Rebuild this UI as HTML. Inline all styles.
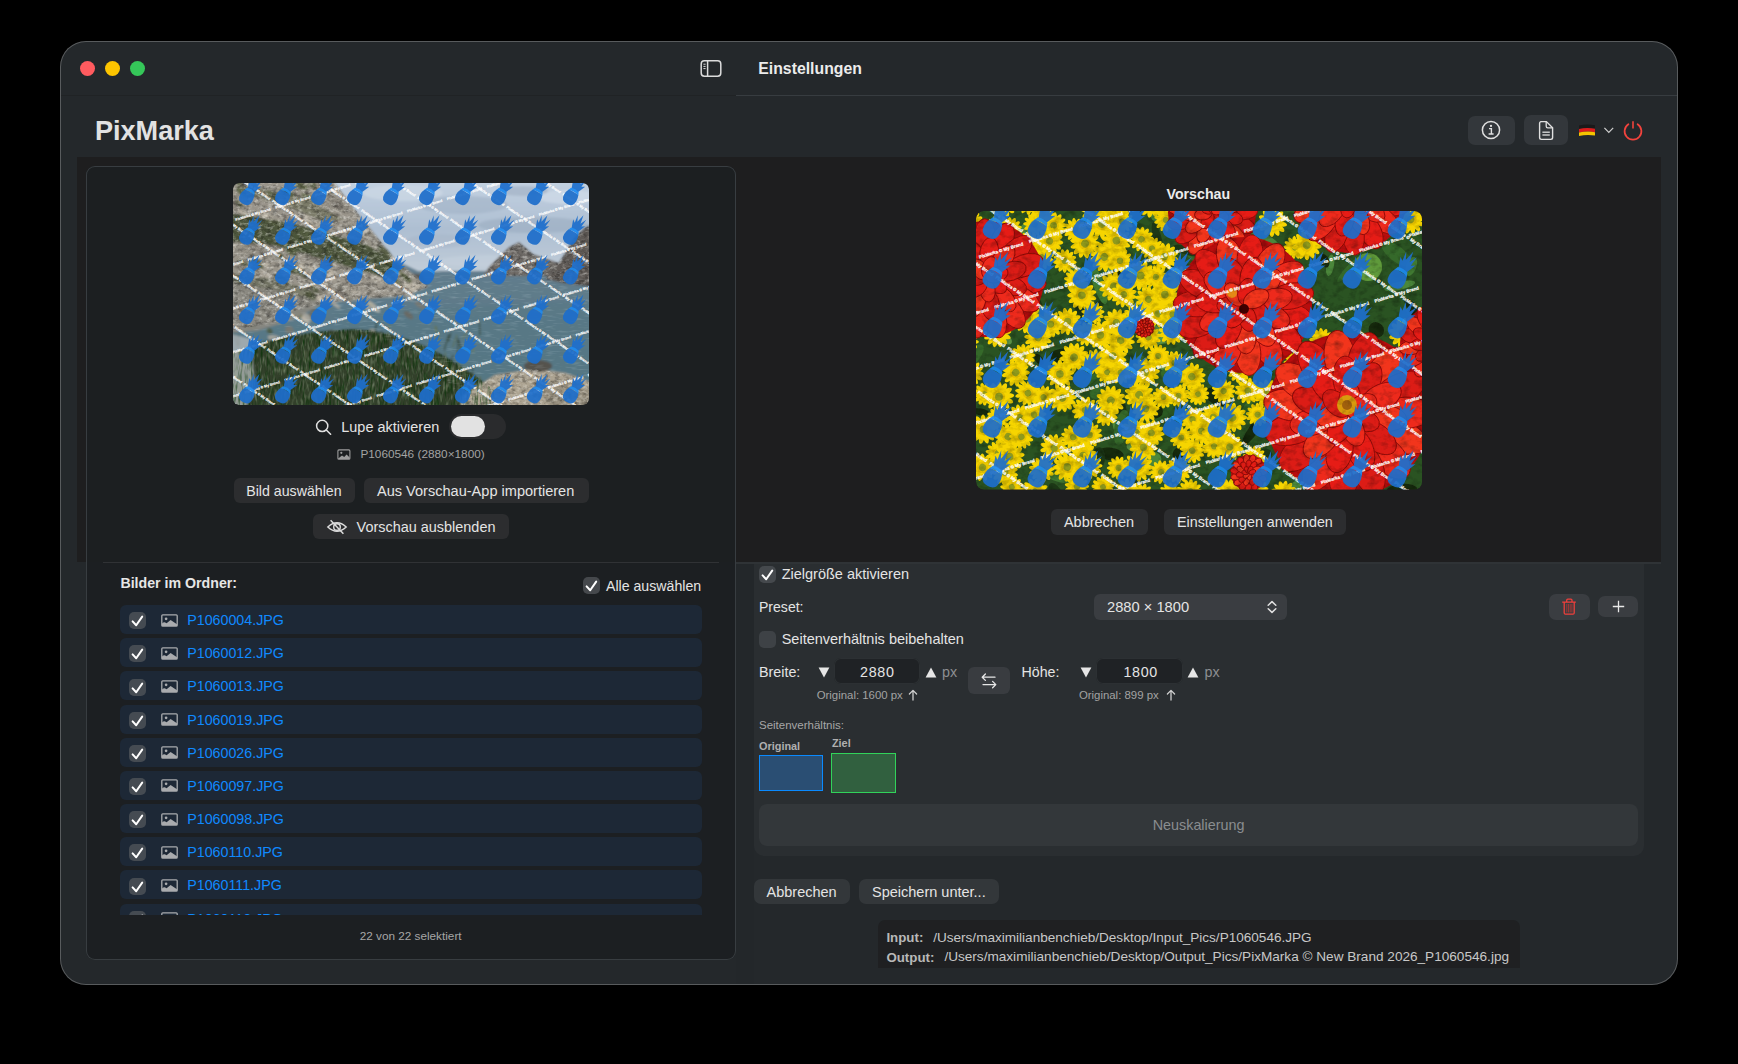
<!DOCTYPE html>
<html><head><meta charset="utf-8"><title>PixMarka</title>
<style>
html,body{margin:0;padding:0;width:1738px;height:1064px;overflow:hidden;background:#000;}
body{position:relative;font-family:"Liberation Sans",sans-serif;}
.t{position:absolute;white-space:nowrap;}
.b{position:absolute;}
svg.b{overflow:visible}
</style></head><body>
<div class="b" style="left:60px;top:41px;width:1618px;height:944px;border-radius:26px;background:#24282b;box-shadow:inset 0 0 0 1px rgba(255,255,255,0.24);overflow:hidden"></div>
<div class="b" style="left:61.00px;top:95.00px;width:675.00px;height:1.00px;background:#202325;border-radius:0px;"></div>
<div class="b" style="left:736.00px;top:95.00px;width:941.00px;height:1.00px;background:#373c40;border-radius:0px;"></div>
<div class="b" style="left:80.30px;top:60.8px;width:15px;height:15px;border-radius:50%;background:#ff5b5f"></div>
<div class="b" style="left:104.90px;top:60.8px;width:15px;height:15px;border-radius:50%;background:#fdc500"></div>
<div class="b" style="left:129.50px;top:60.8px;width:15px;height:15px;border-radius:50%;background:#35c759"></div>
<svg class="b" style="left:699px;top:58px" width="25" height="21" viewBox="0 0 25 21"><rect x="2.2" y="2.7" width="19.6" height="15.6" rx="3.2" fill="none" stroke="#dcdcdc" stroke-width="1.5"/><line x1="8.6" y1="2.7" x2="8.6" y2="18.3" stroke="#dcdcdc" stroke-width="1.5"/><line x1="4.4" y1="6.2" x2="6.6" y2="6.2" stroke="#dcdcdc" stroke-width="1"/><line x1="4.4" y1="8.4" x2="6.6" y2="8.4" stroke="#dcdcdc" stroke-width="1"/><line x1="4.4" y1="10.6" x2="6.6" y2="10.6" stroke="#dcdcdc" stroke-width="1"/></svg>
<div class="t" style="left:758.30px;top:60.93px;font-size:15.8px;line-height:15.8px;font-weight:700;color:#ececec;">Einstellungen</div>
<div class="t" style="left:94.90px;top:116.76px;font-size:27.1px;line-height:27.1px;font-weight:700;color:#e2e2e2;">PixMarka</div>
<div class="b" style="left:1468.00px;top:115.50px;width:47.00px;height:29.00px;background:#33373b;border-radius:7px;"></div>
<div class="b" style="left:1523.50px;top:115.00px;width:44.50px;height:30.00px;background:#33373b;border-radius:7px;"></div>
<svg class="b" style="left:1480px;top:119px" width="22" height="22" viewBox="0 0 22 22"><circle cx="11" cy="11" r="8.6" fill="none" stroke="#e0e0e0" stroke-width="1.5"/><circle cx="11" cy="6.9" r="1.15" fill="#e0e0e0"/><path d="M9 9.6 H11.4 V14.8 M8.6 15 H13.6" fill="none" stroke="#e0e0e0" stroke-width="1.4"/></svg>
<svg class="b" style="left:1536px;top:119px" width="20" height="24" viewBox="0 0 20 24"><path d="M4.4 2.6 H10.4 L16.6 8.8 V18.6 Q16.6 20.4 14.8 20.4 H5.4 Q3.6 20.4 3.6 18.6 V4.4 Q3.6 2.6 5.4 2.6 Z" fill="none" stroke="#e0e0e0" stroke-width="1.4"/><path d="M10.2 2.8 V7.2 Q10.2 8.8 11.8 8.8 H16.4" fill="none" stroke="#e0e0e0" stroke-width="1.3"/><line x1="6.4" y1="13.2" x2="13.8" y2="13.2" stroke="#e0e0e0" stroke-width="1.3"/><line x1="6.4" y1="16" x2="13.8" y2="16" stroke="#e0e0e0" stroke-width="1.3"/></svg>
<svg class="b" style="left:1578px;top:123px" width="18" height="14" viewBox="0 0 18 14"><path d="M1 2.4 Q9 0.6 17 2.2 V5.8 Q9 4.3 1 6 Z" fill="#1a1a1a"/><path d="M1 6 Q9 4.3 17 5.8 V9.2 Q9 7.8 1 9.6 Z" fill="#dd1c1c"/><path d="M1 9.6 Q9 7.8 17 9.2 V12.6 Q9 11.3 1 13 Z" fill="#f4c400"/></svg>
<svg class="b" style="left:1602px;top:125px" width="14" height="10" viewBox="0 0 14 10"><path d="M2.4 2.8 L6.8 7.4 L11.2 2.8" fill="none" stroke="#cfcfcf" stroke-width="1.2"/></svg>
<svg class="b" style="left:1621px;top:118px" width="24" height="24" viewBox="0 0 24 24"><path d="M7.4 6.2 A8.4 8.4 0 1 0 16.6 6.2" fill="none" stroke="#f2433d" stroke-width="1.7" stroke-linecap="round"/><line x1="12" y1="3.2" x2="12" y2="10.6" stroke="#f2433d" stroke-width="1.6"/></svg>
<div class="b" style="left:77.00px;top:157.00px;width:1584.00px;height:405.00px;background:#1e1e1f;border-radius:0px;"></div>
<div class="b" style="left:736.00px;top:562.00px;width:925.00px;height:1.50px;background:#2f3336;border-radius:0px;"></div>
<div class="b" style="left:736.00px;top:563.50px;width:17.50px;height:420.50px;background:#23272a;border-radius:0px;"></div>
<div class="b" style="left:86px;top:166px;width:650px;height:794px;border-radius:9px;background:rgba(28,31,33,0.93);box-shadow:inset 0 0 0 1px #383d41"></div>
<svg width="0" height="0" style="position:absolute"><defs>
<g id="pa">
 <g transform="rotate(31)">
  <path d="M-4.2 -8 L-8.6 -19.5 L-4.8 -17 L-6.4 -27 L-2.4 -19.6 L-0.2 -30.6 L2 -19.6 L5.8 -27.6 L4.8 -17.2 L8.8 -19.8 L4.2 -8 Z" fill="#1e6fcd"/>
  <path d="M-6.8 -6.6 Q-8.8 -2.4 -8.8 2 Q-8.8 10.6 0 10.6 Q8.8 10.6 8.8 2 Q8.8 -2.4 6.8 -6.6 Z" fill="#1e6ecb"/>
  <path d="M-7 -5.6 Q0 -8.4 7 -5.6 L5.6 -9.4 Q0 -11.4 -5.6 -9.4 Z" fill="#1b8af2"/>
 </g>
</g>
</defs></svg>
<svg class="b" style="left:233px;top:183px;border-radius:6px;overflow:hidden" width="356" height="222" viewBox="0 0 356 222">
<defs><linearGradient id="lsky" x1="0" y1="0" x2="0" y2="1"><stop offset="0" stop-color="#c4d2e2"/><stop offset="0.55" stop-color="#aebfd2"/><stop offset="1" stop-color="#c0ccd8"/></linearGradient>
<linearGradient id="lsea" x1="0" y1="0" x2="0" y2="1"><stop offset="0" stop-color="#72879a"/><stop offset="0.5" stop-color="#5f7b8a"/><stop offset="1" stop-color="#4d747e"/></linearGradient>
<filter id="lblur" x="-5%" y="-5%" width="110%" height="110%"><feGaussianBlur stdDeviation="0.9"/></filter>
<clipPath id="lclip"><rect x="0" y="0" width="356" height="222" rx="6"/></clipPath></defs>
<g clip-path="url(#lclip)"><g filter="url(#lblur)">
<rect x="-5" y="-5" width="366" height="232" fill="url(#lsea)"/>
<path d="M95 -5 L361 -5 L361 88 L185 88 L160 76 L126 34 Z" fill="url(#lsky)"/>
<ellipse cx="230" cy="22" rx="45" ry="9" fill="#9badc2" opacity="0.5"/>
<ellipse cx="300" cy="42" rx="55" ry="8" fill="#97a9be" opacity="0.5"/>
<ellipse cx="205" cy="58" rx="32" ry="7" fill="#a2b2c6" opacity="0.4"/>
<ellipse cx="335" cy="14" rx="30" ry="7" fill="#d0dce8" opacity="0.7"/>
<ellipse cx="255" cy="78" rx="50" ry="6" fill="#c4d0dc" opacity="0.6"/>
<ellipse cx="170" cy="10" rx="40" ry="8" fill="#cfdae6" opacity="0.6"/>
<ellipse cx="290" cy="8" rx="25" ry="5" fill="#9eaec2" opacity="0.6"/>
<path d="M250 93 L256 84 L266 74 L276 64 L286 59 L292 64 L300 71 L314 76 L326 80 L330 90 L318 93 Z" fill="#6e6a66"/>
<path d="M312 96 L322 86 L332 70 L340 56 L350 46 L361 40 L361 104 L330 100 Z" fill="#5e5a56"/>
<path d="M176 90 L190 92 L195 104 L180 104 Z" fill="#55534f"/>
<path d="M100 130 L361 118 L361 190 L240 205 L160 180 Z" fill="#587886" opacity="0.6"/>
<path d="M-5 -5 L98 -5 L128 34 L162 76 L195 104 L172 113 L132 116 L92 120 L62 128 L40 140 L-5 148 Z" fill="#99948a"/>
<ellipse cx="83.2" cy="87.4" rx="9.5" ry="2.7" transform="rotate(33 83.2 87.4)" fill="#c0b9aa" opacity="0.8"/>
<ellipse cx="32.0" cy="127.6" rx="6.3" ry="3.0" transform="rotate(25 32.0 127.6)" fill="#4a5436" opacity="0.8"/>
<ellipse cx="54.2" cy="10.0" rx="8.7" ry="3.2" transform="rotate(21 54.2 10.0)" fill="#4a5436" opacity="0.8"/>
<ellipse cx="183.1" cy="102.9" rx="7.3" ry="1.9" transform="rotate(20 183.1 102.9)" fill="#c0b9aa" opacity="0.8"/>
<ellipse cx="7.3" cy="0.9" rx="9.2" ry="3.0" transform="rotate(39 7.3 0.9)" fill="#56603e" opacity="0.8"/>
<ellipse cx="80.9" cy="134.0" rx="6.6" ry="3.1" transform="rotate(32 80.9 134.0)" fill="#6a675e" opacity="0.8"/>
<ellipse cx="11.6" cy="103.0" rx="5.8" ry="2.9" transform="rotate(43 11.6 103.0)" fill="#b3ada0" opacity="0.8"/>
<ellipse cx="133.0" cy="47.0" rx="4.6" ry="2.2" transform="rotate(22 133.0 47.0)" fill="#b3ada0" opacity="0.8"/>
<ellipse cx="73.1" cy="134.7" rx="5.7" ry="3.9" transform="rotate(41 73.1 134.7)" fill="#b3ada0" opacity="0.8"/>
<ellipse cx="36.6" cy="148.0" rx="3.4" ry="2.4" transform="rotate(38 36.6 148.0)" fill="#4a5436" opacity="0.8"/>
<ellipse cx="9.2" cy="98.9" rx="8.4" ry="2.2" transform="rotate(22 9.2 98.9)" fill="#56603e" opacity="0.8"/>
<ellipse cx="-2.0" cy="62.7" rx="9.5" ry="1.8" transform="rotate(38 -2.0 62.7)" fill="#b3ada0" opacity="0.8"/>
<ellipse cx="6.7" cy="126.5" rx="4.2" ry="2.9" transform="rotate(31 6.7 126.5)" fill="#7c786e" opacity="0.8"/>
<ellipse cx="187.1" cy="122.0" rx="5.9" ry="2.5" transform="rotate(30 187.1 122.0)" fill="#7c786e" opacity="0.8"/>
<ellipse cx="-4.9" cy="137.6" rx="9.8" ry="3.0" transform="rotate(45 -4.9 137.6)" fill="#b3ada0" opacity="0.8"/>
<ellipse cx="36.1" cy="60.1" rx="9.0" ry="3.1" transform="rotate(23 36.1 60.1)" fill="#7c786e" opacity="0.8"/>
<ellipse cx="36.6" cy="37.6" rx="8.4" ry="2.3" transform="rotate(27 36.6 37.6)" fill="#b3ada0" opacity="0.8"/>
<ellipse cx="9.5" cy="29.4" rx="7.5" ry="1.5" transform="rotate(29 9.5 29.4)" fill="#c0b9aa" opacity="0.8"/>
<ellipse cx="83.4" cy="153.3" rx="6.4" ry="2.9" transform="rotate(42 83.4 153.3)" fill="#7c786e" opacity="0.8"/>
<ellipse cx="117.3" cy="46.3" rx="4.6" ry="3.0" transform="rotate(38 117.3 46.3)" fill="#7c786e" opacity="0.8"/>
<ellipse cx="139.2" cy="150.2" rx="4.4" ry="3.9" transform="rotate(42 139.2 150.2)" fill="#c0b9aa" opacity="0.8"/>
<ellipse cx="10.3" cy="2.8" rx="3.8" ry="2.8" transform="rotate(26 10.3 2.8)" fill="#6a675e" opacity="0.8"/>
<ellipse cx="155.6" cy="93.4" rx="5.1" ry="1.9" transform="rotate(38 155.6 93.4)" fill="#b3ada0" opacity="0.8"/>
<ellipse cx="19.6" cy="74.1" rx="7.6" ry="3.0" transform="rotate(22 19.6 74.1)" fill="#7c786e" opacity="0.8"/>
<ellipse cx="-1.8" cy="39.4" rx="6.1" ry="1.7" transform="rotate(24 -1.8 39.4)" fill="#56603e" opacity="0.8"/>
<ellipse cx="98.5" cy="155.6" rx="3.6" ry="1.8" transform="rotate(31 98.5 155.6)" fill="#56603e" opacity="0.8"/>
<ellipse cx="123.1" cy="109.1" rx="7.1" ry="1.9" transform="rotate(21 123.1 109.1)" fill="#b3ada0" opacity="0.8"/>
<ellipse cx="87.6" cy="54.0" rx="5.2" ry="1.6" transform="rotate(35 87.6 54.0)" fill="#b3ada0" opacity="0.8"/>
<ellipse cx="89.0" cy="115.5" rx="5.2" ry="4.0" transform="rotate(22 89.0 115.5)" fill="#c0b9aa" opacity="0.8"/>
<ellipse cx="66.7" cy="2.3" rx="9.6" ry="3.3" transform="rotate(23 66.7 2.3)" fill="#56603e" opacity="0.8"/>
<ellipse cx="63.6" cy="108.0" rx="9.3" ry="3.7" transform="rotate(30 63.6 108.0)" fill="#b3ada0" opacity="0.8"/>
<ellipse cx="163.4" cy="89.5" rx="7.4" ry="2.5" transform="rotate(35 163.4 89.5)" fill="#c0b9aa" opacity="0.8"/>
<ellipse cx="9.1" cy="10.0" rx="3.8" ry="2.1" transform="rotate(30 9.1 10.0)" fill="#56603e" opacity="0.8"/>
<ellipse cx="70.7" cy="116.3" rx="7.1" ry="2.6" transform="rotate(41 70.7 116.3)" fill="#b3ada0" opacity="0.8"/>
<ellipse cx="96.1" cy="79.9" rx="5.2" ry="1.7" transform="rotate(21 96.1 79.9)" fill="#6a675e" opacity="0.8"/>
<ellipse cx="17.0" cy="123.7" rx="7.6" ry="2.7" transform="rotate(42 17.0 123.7)" fill="#56603e" opacity="0.8"/>
<ellipse cx="53.7" cy="106.9" rx="4.4" ry="1.9" transform="rotate(43 53.7 106.9)" fill="#6a675e" opacity="0.8"/>
<ellipse cx="42.1" cy="61.8" rx="4.8" ry="3.1" transform="rotate(40 42.1 61.8)" fill="#7c786e" opacity="0.8"/>
<ellipse cx="108.7" cy="47.2" rx="4.0" ry="2.7" transform="rotate(41 108.7 47.2)" fill="#b3ada0" opacity="0.8"/>
<ellipse cx="133.7" cy="151.8" rx="4.9" ry="1.9" transform="rotate(31 133.7 151.8)" fill="#56603e" opacity="0.8"/>
<ellipse cx="175.5" cy="132.1" rx="5.7" ry="2.8" transform="rotate(37 175.5 132.1)" fill="#6a675e" opacity="0.8"/>
<ellipse cx="158.6" cy="157.0" rx="6.2" ry="1.7" transform="rotate(21 158.6 157.0)" fill="#c0b9aa" opacity="0.8"/>
<ellipse cx="3.1" cy="111.9" rx="7.0" ry="2.3" transform="rotate(40 3.1 111.9)" fill="#b3ada0" opacity="0.8"/>
<ellipse cx="120.0" cy="61.9" rx="4.3" ry="3.4" transform="rotate(27 120.0 61.9)" fill="#7c786e" opacity="0.8"/>
<ellipse cx="150.4" cy="157.4" rx="3.8" ry="1.8" transform="rotate(33 150.4 157.4)" fill="#6a675e" opacity="0.8"/>
<ellipse cx="152.4" cy="153.1" rx="7.8" ry="2.0" transform="rotate(32 152.4 153.1)" fill="#7c786e" opacity="0.8"/>
<ellipse cx="134.3" cy="119.6" rx="6.7" ry="1.6" transform="rotate(26 134.3 119.6)" fill="#56603e" opacity="0.8"/>
<ellipse cx="100.2" cy="151.2" rx="6.5" ry="4.0" transform="rotate(24 100.2 151.2)" fill="#6a675e" opacity="0.8"/>
<ellipse cx="176.9" cy="114.2" rx="3.9" ry="2.6" transform="rotate(36 176.9 114.2)" fill="#b3ada0" opacity="0.8"/>
<ellipse cx="68.5" cy="88.9" rx="9.2" ry="3.5" transform="rotate(44 68.5 88.9)" fill="#4a5436" opacity="0.8"/>
<ellipse cx="58.7" cy="157.1" rx="3.7" ry="3.7" transform="rotate(40 58.7 157.1)" fill="#6a675e" opacity="0.8"/>
<ellipse cx="19.1" cy="35.0" rx="5.7" ry="1.7" transform="rotate(28 19.1 35.0)" fill="#56603e" opacity="0.8"/>
<ellipse cx="46.1" cy="113.5" rx="3.1" ry="2.8" transform="rotate(21 46.1 113.5)" fill="#56603e" opacity="0.8"/>
<ellipse cx="102.3" cy="121.8" rx="6.4" ry="1.6" transform="rotate(40 102.3 121.8)" fill="#b3ada0" opacity="0.8"/>
<ellipse cx="78.6" cy="0.8" rx="6.7" ry="3.2" transform="rotate(43 78.6 0.8)" fill="#4a5436" opacity="0.8"/>
<ellipse cx="24.0" cy="80.2" rx="8.1" ry="3.6" transform="rotate(37 24.0 80.2)" fill="#4a5436" opacity="0.8"/>
<ellipse cx="107.9" cy="108.7" rx="8.3" ry="2.6" transform="rotate(34 107.9 108.7)" fill="#6a675e" opacity="0.8"/>
<ellipse cx="104.5" cy="22.1" rx="6.6" ry="3.8" transform="rotate(26 104.5 22.1)" fill="#6a675e" opacity="0.8"/>
<ellipse cx="69.3" cy="134.5" rx="9.3" ry="2.0" transform="rotate(41 69.3 134.5)" fill="#c0b9aa" opacity="0.8"/>
<ellipse cx="97.2" cy="89.5" rx="4.4" ry="2.8" transform="rotate(33 97.2 89.5)" fill="#c0b9aa" opacity="0.8"/>
<ellipse cx="68.5" cy="83.8" rx="3.3" ry="3.8" transform="rotate(34 68.5 83.8)" fill="#c0b9aa" opacity="0.8"/>
<ellipse cx="18.8" cy="10.4" rx="4.2" ry="3.8" transform="rotate(31 18.8 10.4)" fill="#4a5436" opacity="0.8"/>
<ellipse cx="47.5" cy="73.1" rx="3.9" ry="2.6" transform="rotate(40 47.5 73.1)" fill="#4a5436" opacity="0.8"/>
<ellipse cx="97.4" cy="12.9" rx="5.9" ry="1.6" transform="rotate(27 97.4 12.9)" fill="#6a675e" opacity="0.8"/>
<ellipse cx="32.9" cy="32.5" rx="7.8" ry="2.3" transform="rotate(29 32.9 32.5)" fill="#c0b9aa" opacity="0.8"/>
<ellipse cx="92.3" cy="77.4" rx="7.1" ry="3.6" transform="rotate(36 92.3 77.4)" fill="#6a675e" opacity="0.8"/>
<ellipse cx="33.6" cy="82.5" rx="6.1" ry="2.4" transform="rotate(30 33.6 82.5)" fill="#c0b9aa" opacity="0.8"/>
<ellipse cx="115.1" cy="83.8" rx="9.0" ry="2.8" transform="rotate(25 115.1 83.8)" fill="#7c786e" opacity="0.8"/>
<ellipse cx="161.0" cy="95.9" rx="9.0" ry="2.1" transform="rotate(39 161.0 95.9)" fill="#56603e" opacity="0.8"/>
<ellipse cx="56.4" cy="147.3" rx="4.5" ry="4.0" transform="rotate(42 56.4 147.3)" fill="#7c786e" opacity="0.8"/>
<ellipse cx="12.2" cy="59.0" rx="6.0" ry="3.9" transform="rotate(34 12.2 59.0)" fill="#6a675e" opacity="0.8"/>
<ellipse cx="19.6" cy="61.5" rx="7.8" ry="1.5" transform="rotate(25 19.6 61.5)" fill="#6a675e" opacity="0.8"/>
<ellipse cx="64.7" cy="130.5" rx="5.5" ry="3.3" transform="rotate(36 64.7 130.5)" fill="#56603e" opacity="0.8"/>
<ellipse cx="93.0" cy="108.1" rx="4.3" ry="1.7" transform="rotate(23 93.0 108.1)" fill="#b3ada0" opacity="0.8"/>
<ellipse cx="143.6" cy="96.2" rx="9.3" ry="2.7" transform="rotate(25 143.6 96.2)" fill="#b3ada0" opacity="0.8"/>
<ellipse cx="34.8" cy="133.6" rx="9.9" ry="3.8" transform="rotate(22 34.8 133.6)" fill="#b3ada0" opacity="0.8"/>
<ellipse cx="21.2" cy="107.4" rx="3.5" ry="1.7" transform="rotate(30 21.2 107.4)" fill="#4a5436" opacity="0.8"/>
<ellipse cx="95.5" cy="66.0" rx="7.2" ry="1.5" transform="rotate(38 95.5 66.0)" fill="#7c786e" opacity="0.8"/>
<ellipse cx="30.3" cy="69.9" rx="8.2" ry="2.5" transform="rotate(25 30.3 69.9)" fill="#7c786e" opacity="0.8"/>
<ellipse cx="13.5" cy="125.7" rx="5.3" ry="1.7" transform="rotate(41 13.5 125.7)" fill="#6a675e" opacity="0.8"/>
<ellipse cx="32.2" cy="91.5" rx="5.4" ry="3.4" transform="rotate(27 32.2 91.5)" fill="#b3ada0" opacity="0.8"/>
<ellipse cx="140.2" cy="123.4" rx="8.7" ry="2.5" transform="rotate(42 140.2 123.4)" fill="#c0b9aa" opacity="0.8"/>
<ellipse cx="130.5" cy="121.6" rx="8.4" ry="2.5" transform="rotate(38 130.5 121.6)" fill="#b3ada0" opacity="0.8"/>
<ellipse cx="14.7" cy="141.5" rx="9.9" ry="3.8" transform="rotate(21 14.7 141.5)" fill="#56603e" opacity="0.8"/>
<ellipse cx="179.2" cy="104.9" rx="5.4" ry="3.1" transform="rotate(34 179.2 104.9)" fill="#c0b9aa" opacity="0.8"/>
<ellipse cx="10.0" cy="79.9" rx="6.5" ry="2.0" transform="rotate(23 10.0 79.9)" fill="#4a5436" opacity="0.8"/>
<ellipse cx="115.0" cy="116.9" rx="4.8" ry="2.5" transform="rotate(21 115.0 116.9)" fill="#7c786e" opacity="0.8"/>
<ellipse cx="45.4" cy="40.5" rx="5.4" ry="2.9" transform="rotate(30 45.4 40.5)" fill="#c0b9aa" opacity="0.8"/>
<ellipse cx="105.8" cy="159.2" rx="7.5" ry="3.5" transform="rotate(22 105.8 159.2)" fill="#c0b9aa" opacity="0.8"/>
<ellipse cx="125.3" cy="152.6" rx="5.7" ry="3.8" transform="rotate(30 125.3 152.6)" fill="#7c786e" opacity="0.8"/>
<ellipse cx="161.9" cy="84.4" rx="7.2" ry="2.6" transform="rotate(32 161.9 84.4)" fill="#56603e" opacity="0.8"/>
<ellipse cx="97.7" cy="93.6" rx="5.6" ry="2.2" transform="rotate(36 97.7 93.6)" fill="#c0b9aa" opacity="0.8"/>
<ellipse cx="176.2" cy="104.5" rx="8.2" ry="1.6" transform="rotate(39 176.2 104.5)" fill="#c0b9aa" opacity="0.8"/>
<ellipse cx="3.3" cy="20.8" rx="8.3" ry="2.5" transform="rotate(42 3.3 20.8)" fill="#6a675e" opacity="0.8"/>
<ellipse cx="72.6" cy="91.0" rx="8.1" ry="2.3" transform="rotate(40 72.6 91.0)" fill="#7c786e" opacity="0.8"/>
<ellipse cx="78.8" cy="73.8" rx="9.8" ry="2.1" transform="rotate(33 78.8 73.8)" fill="#6a675e" opacity="0.8"/>
<ellipse cx="76.3" cy="14.5" rx="9.0" ry="2.4" transform="rotate(24 76.3 14.5)" fill="#56603e" opacity="0.8"/>
<ellipse cx="81.4" cy="105.2" rx="6.2" ry="2.2" transform="rotate(35 81.4 105.2)" fill="#4a5436" opacity="0.8"/>
<ellipse cx="66.0" cy="117.7" rx="8.7" ry="1.8" transform="rotate(27 66.0 117.7)" fill="#7c786e" opacity="0.8"/>
<ellipse cx="41.5" cy="13.8" rx="9.2" ry="3.5" transform="rotate(36 41.5 13.8)" fill="#56603e" opacity="0.8"/>
<ellipse cx="48.6" cy="95.6" rx="8.1" ry="3.2" transform="rotate(25 48.6 95.6)" fill="#56603e" opacity="0.8"/>
<ellipse cx="43.5" cy="156.7" rx="9.4" ry="3.7" transform="rotate(21 43.5 156.7)" fill="#b3ada0" opacity="0.8"/>
<ellipse cx="-3.2" cy="37.8" rx="3.2" ry="1.6" transform="rotate(26 -3.2 37.8)" fill="#56603e" opacity="0.8"/>
<ellipse cx="9.1" cy="9.3" rx="7.7" ry="2.9" transform="rotate(36 9.1 9.3)" fill="#56603e" opacity="0.8"/>
<ellipse cx="89.4" cy="53.4" rx="5.4" ry="2.7" transform="rotate(23 89.4 53.4)" fill="#b3ada0" opacity="0.8"/>
<ellipse cx="151.4" cy="68.8" rx="8.8" ry="3.6" transform="rotate(39 151.4 68.8)" fill="#4a5436" opacity="0.8"/>
<ellipse cx="77.8" cy="37.6" rx="8.7" ry="2.4" transform="rotate(36 77.8 37.6)" fill="#c0b9aa" opacity="0.8"/>
<ellipse cx="58.5" cy="85.5" rx="8.2" ry="3.8" transform="rotate(31 58.5 85.5)" fill="#56603e" opacity="0.8"/>
<ellipse cx="108.2" cy="71.2" rx="5.3" ry="2.9" transform="rotate(31 108.2 71.2)" fill="#c0b9aa" opacity="0.8"/>
<ellipse cx="89.5" cy="108.1" rx="5.1" ry="3.4" transform="rotate(22 89.5 108.1)" fill="#7c786e" opacity="0.8"/>
<ellipse cx="172.6" cy="94.6" rx="7.9" ry="2.7" transform="rotate(39 172.6 94.6)" fill="#56603e" opacity="0.8"/>
<ellipse cx="50.2" cy="18.6" rx="5.5" ry="3.3" transform="rotate(29 50.2 18.6)" fill="#b3ada0" opacity="0.8"/>
<ellipse cx="57.9" cy="67.8" rx="7.2" ry="3.8" transform="rotate(37 57.9 67.8)" fill="#56603e" opacity="0.8"/>
<ellipse cx="80.4" cy="127.5" rx="5.1" ry="2.3" transform="rotate(30 80.4 127.5)" fill="#6a675e" opacity="0.8"/>
<ellipse cx="65.5" cy="55.3" rx="5.5" ry="2.5" transform="rotate(30 65.5 55.3)" fill="#7c786e" opacity="0.8"/>
<ellipse cx="139.1" cy="55.8" rx="5.7" ry="1.9" transform="rotate(35 139.1 55.8)" fill="#7c786e" opacity="0.8"/>
<ellipse cx="29.4" cy="120.2" rx="9.2" ry="2.2" transform="rotate(21 29.4 120.2)" fill="#c0b9aa" opacity="0.8"/>
<ellipse cx="6.3" cy="21.2" rx="5.1" ry="1.6" transform="rotate(41 6.3 21.2)" fill="#4a5436" opacity="0.8"/>
<ellipse cx="7.5" cy="85.2" rx="8.5" ry="1.7" transform="rotate(22 7.5 85.2)" fill="#6a675e" opacity="0.8"/>
<ellipse cx="15.6" cy="46.8" rx="3.2" ry="3.1" transform="rotate(22 15.6 46.8)" fill="#6a675e" opacity="0.8"/>
<ellipse cx="77.3" cy="112.5" rx="6.4" ry="3.8" transform="rotate(28 77.3 112.5)" fill="#4a5436" opacity="0.8"/>
<ellipse cx="71.9" cy="50.7" rx="9.8" ry="3.2" transform="rotate(32 71.9 50.7)" fill="#c0b9aa" opacity="0.8"/>
<path d="M-5 30 L60 40 L135 62 L172 86 L150 94 L90 76 L40 62 L-5 58 Z" fill="#414b2e" opacity="0.85"/>
<path d="M-5 90 L40 96 L90 110 L60 116 L20 108 L-5 106 Z" fill="#4a4f3a" opacity="0.5"/>
<path d="M20 4 L70 14 L110 36 L95 40 L50 22 L15 12 Z" fill="#5d6147" opacity="0.5"/>
<path d="M-5 98 L50 108 L90 120 L62 136 L24 148 L-5 150 Z" fill="#8a877f" opacity="0.9"/>
<path d="M-5 172 Q40 150 120 146 Q190 148 262 208 L262 227 L-5 227 Z" fill="#33412b"/>
<line x1="154.5" y1="153.3" x2="157.6" y2="137.5" stroke="#6b7a55" stroke-width="1.2" opacity="0.8"/>
<line x1="213.4" y1="208.0" x2="217.4" y2="193.1" stroke="#5d6c4a" stroke-width="1.2" opacity="0.8"/>
<line x1="131.0" y1="201.1" x2="134.6" y2="190.9" stroke="#33412a" stroke-width="1.2" opacity="0.8"/>
<line x1="228.9" y1="167.7" x2="224.8" y2="155.3" stroke="#2a3622" stroke-width="1.2" opacity="0.8"/>
<line x1="80.2" y1="178.0" x2="80.6" y2="169.3" stroke="#5d6c4a" stroke-width="1.2" opacity="0.8"/>
<line x1="117.9" y1="202.6" x2="115.5" y2="195.1" stroke="#2a3622" stroke-width="1.2" opacity="0.8"/>
<line x1="228.0" y1="204.2" x2="222.3" y2="193.4" stroke="#5d6c4a" stroke-width="1.2" opacity="0.8"/>
<line x1="78.1" y1="164.2" x2="76.4" y2="152.3" stroke="#33412a" stroke-width="1.2" opacity="0.8"/>
<line x1="148.7" y1="166.1" x2="144.9" y2="157.3" stroke="#2a3622" stroke-width="1.2" opacity="0.8"/>
<line x1="227.7" y1="217.5" x2="229.2" y2="202.1" stroke="#33412a" stroke-width="1.2" opacity="0.8"/>
<line x1="213.3" y1="184.9" x2="212.2" y2="169.3" stroke="#5d6c4a" stroke-width="1.2" opacity="0.8"/>
<line x1="120.7" y1="165.9" x2="115.2" y2="150.4" stroke="#33412a" stroke-width="1.2" opacity="0.8"/>
<line x1="244.0" y1="207.2" x2="247.3" y2="193.3" stroke="#5d6c4a" stroke-width="1.2" opacity="0.8"/>
<line x1="164.4" y1="167.1" x2="158.5" y2="156.4" stroke="#6b7a55" stroke-width="1.2" opacity="0.8"/>
<line x1="112.5" y1="167.8" x2="111.6" y2="153.0" stroke="#33412a" stroke-width="1.2" opacity="0.8"/>
<line x1="39.2" y1="173.2" x2="36.3" y2="158.5" stroke="#2a3622" stroke-width="1.2" opacity="0.8"/>
<line x1="159.2" y1="221.5" x2="156.4" y2="210.2" stroke="#2a3622" stroke-width="1.2" opacity="0.8"/>
<line x1="143.0" y1="162.8" x2="139.4" y2="147.7" stroke="#2a3622" stroke-width="1.2" opacity="0.8"/>
<line x1="205.5" y1="155.9" x2="202.8" y2="142.8" stroke="#5d6c4a" stroke-width="1.2" opacity="0.8"/>
<line x1="222.4" y1="199.9" x2="217.4" y2="186.5" stroke="#6b7a55" stroke-width="1.2" opacity="0.8"/>
<line x1="4.8" y1="163.5" x2="1.1" y2="150.7" stroke="#33412a" stroke-width="1.2" opacity="0.8"/>
<line x1="52.1" y1="189.1" x2="52.4" y2="181.5" stroke="#6b7a55" stroke-width="1.2" opacity="0.8"/>
<line x1="79.0" y1="179.2" x2="79.7" y2="163.2" stroke="#5d6c4a" stroke-width="1.2" opacity="0.8"/>
<line x1="89.9" y1="199.5" x2="85.2" y2="189.5" stroke="#33412a" stroke-width="1.2" opacity="0.8"/>
<line x1="186.7" y1="206.5" x2="182.1" y2="196.0" stroke="#33412a" stroke-width="1.2" opacity="0.8"/>
<line x1="177.9" y1="184.2" x2="175.5" y2="177.1" stroke="#5d6c4a" stroke-width="1.2" opacity="0.8"/>
<line x1="214.0" y1="210.8" x2="216.6" y2="195.8" stroke="#2a3622" stroke-width="1.2" opacity="0.8"/>
<line x1="72.6" y1="177.1" x2="73.1" y2="168.1" stroke="#6b7a55" stroke-width="1.2" opacity="0.8"/>
<line x1="188.7" y1="190.0" x2="183.8" y2="182.1" stroke="#33412a" stroke-width="1.2" opacity="0.8"/>
<line x1="182.9" y1="173.7" x2="188.2" y2="162.1" stroke="#6b7a55" stroke-width="1.2" opacity="0.8"/>
<line x1="111.7" y1="177.5" x2="106.9" y2="165.3" stroke="#2a3622" stroke-width="1.2" opacity="0.8"/>
<line x1="169.4" y1="201.0" x2="165.6" y2="191.0" stroke="#33412a" stroke-width="1.2" opacity="0.8"/>
<line x1="148.2" y1="156.5" x2="144.9" y2="148.9" stroke="#5d6c4a" stroke-width="1.2" opacity="0.8"/>
<line x1="108.5" y1="205.5" x2="106.6" y2="191.3" stroke="#2a3622" stroke-width="1.2" opacity="0.8"/>
<line x1="161.8" y1="205.2" x2="165.7" y2="195.4" stroke="#6b7a55" stroke-width="1.2" opacity="0.8"/>
<line x1="230.3" y1="194.9" x2="233.1" y2="182.7" stroke="#6b7a55" stroke-width="1.2" opacity="0.8"/>
<line x1="245.5" y1="206.9" x2="247.4" y2="194.8" stroke="#5d6c4a" stroke-width="1.2" opacity="0.8"/>
<line x1="65.2" y1="163.6" x2="62.9" y2="153.2" stroke="#33412a" stroke-width="1.2" opacity="0.8"/>
<line x1="51.2" y1="174.0" x2="48.7" y2="166.9" stroke="#2a3622" stroke-width="1.2" opacity="0.8"/>
<line x1="63.5" y1="188.8" x2="61.1" y2="180.5" stroke="#2a3622" stroke-width="1.2" opacity="0.8"/>
<line x1="143.5" y1="164.3" x2="148.7" y2="148.3" stroke="#2a3622" stroke-width="1.2" opacity="0.8"/>
<line x1="141.8" y1="151.9" x2="143.8" y2="138.2" stroke="#2a3622" stroke-width="1.2" opacity="0.8"/>
<line x1="61.1" y1="191.5" x2="63.5" y2="182.2" stroke="#6b7a55" stroke-width="1.2" opacity="0.8"/>
<line x1="66.5" y1="213.6" x2="66.0" y2="200.3" stroke="#2a3622" stroke-width="1.2" opacity="0.8"/>
<line x1="226.0" y1="189.1" x2="226.7" y2="177.5" stroke="#6b7a55" stroke-width="1.2" opacity="0.8"/>
<line x1="42.1" y1="203.7" x2="46.9" y2="194.3" stroke="#2a3622" stroke-width="1.2" opacity="0.8"/>
<line x1="30.7" y1="209.4" x2="28.1" y2="194.4" stroke="#2a3622" stroke-width="1.2" opacity="0.8"/>
<line x1="189.6" y1="176.1" x2="185.6" y2="164.2" stroke="#5d6c4a" stroke-width="1.2" opacity="0.8"/>
<line x1="113.6" y1="179.0" x2="117.0" y2="163.7" stroke="#2a3622" stroke-width="1.2" opacity="0.8"/>
<line x1="76.9" y1="198.3" x2="79.8" y2="188.5" stroke="#5d6c4a" stroke-width="1.2" opacity="0.8"/>
<line x1="39.6" y1="179.7" x2="34.0" y2="168.4" stroke="#5d6c4a" stroke-width="1.2" opacity="0.8"/>
<line x1="142.4" y1="162.5" x2="142.6" y2="153.9" stroke="#6b7a55" stroke-width="1.2" opacity="0.8"/>
<line x1="13.4" y1="206.4" x2="16.0" y2="192.6" stroke="#33412a" stroke-width="1.2" opacity="0.8"/>
<line x1="239.8" y1="193.2" x2="239.5" y2="183.1" stroke="#33412a" stroke-width="1.2" opacity="0.8"/>
<line x1="187.9" y1="185.0" x2="193.9" y2="170.6" stroke="#33412a" stroke-width="1.2" opacity="0.8"/>
<line x1="206.3" y1="158.5" x2="201.7" y2="143.1" stroke="#6b7a55" stroke-width="1.2" opacity="0.8"/>
<line x1="131.3" y1="181.1" x2="136.1" y2="171.9" stroke="#5d6c4a" stroke-width="1.2" opacity="0.8"/>
<line x1="74.0" y1="194.4" x2="73.2" y2="184.6" stroke="#6b7a55" stroke-width="1.2" opacity="0.8"/>
<line x1="188.0" y1="171.9" x2="189.1" y2="165.2" stroke="#5d6c4a" stroke-width="1.2" opacity="0.8"/>
<line x1="211.1" y1="167.4" x2="215.6" y2="151.7" stroke="#33412a" stroke-width="1.2" opacity="0.8"/>
<line x1="173.7" y1="187.9" x2="170.6" y2="178.8" stroke="#33412a" stroke-width="1.2" opacity="0.8"/>
<line x1="235.1" y1="213.3" x2="241.1" y2="200.0" stroke="#6b7a55" stroke-width="1.2" opacity="0.8"/>
<line x1="216.6" y1="180.3" x2="220.3" y2="172.1" stroke="#33412a" stroke-width="1.2" opacity="0.8"/>
<line x1="141.7" y1="215.0" x2="136.9" y2="201.1" stroke="#5d6c4a" stroke-width="1.2" opacity="0.8"/>
<line x1="220.5" y1="191.5" x2="220.0" y2="182.5" stroke="#6b7a55" stroke-width="1.2" opacity="0.8"/>
<line x1="6.0" y1="162.4" x2="5.3" y2="151.9" stroke="#33412a" stroke-width="1.2" opacity="0.8"/>
<line x1="35.3" y1="199.8" x2="32.1" y2="190.8" stroke="#33412a" stroke-width="1.2" opacity="0.8"/>
<line x1="224.6" y1="172.2" x2="224.6" y2="156.8" stroke="#33412a" stroke-width="1.2" opacity="0.8"/>
<line x1="219.7" y1="164.6" x2="224.0" y2="151.7" stroke="#5d6c4a" stroke-width="1.2" opacity="0.8"/>
<line x1="48.9" y1="210.3" x2="47.1" y2="199.6" stroke="#2a3622" stroke-width="1.2" opacity="0.8"/>
<line x1="158.8" y1="200.3" x2="159.6" y2="188.9" stroke="#2a3622" stroke-width="1.2" opacity="0.8"/>
<line x1="47.9" y1="213.4" x2="42.5" y2="206.3" stroke="#6b7a55" stroke-width="1.2" opacity="0.8"/>
<line x1="240.3" y1="169.7" x2="239.4" y2="154.9" stroke="#6b7a55" stroke-width="1.2" opacity="0.8"/>
<line x1="174.0" y1="217.5" x2="173.3" y2="210.7" stroke="#2a3622" stroke-width="1.2" opacity="0.8"/>
<line x1="215.4" y1="158.7" x2="217.7" y2="150.0" stroke="#2a3622" stroke-width="1.2" opacity="0.8"/>
<line x1="125.4" y1="171.3" x2="122.6" y2="157.2" stroke="#5d6c4a" stroke-width="1.2" opacity="0.8"/>
<line x1="147.5" y1="166.5" x2="145.1" y2="151.2" stroke="#2a3622" stroke-width="1.2" opacity="0.8"/>
<line x1="69.2" y1="196.1" x2="64.3" y2="180.2" stroke="#33412a" stroke-width="1.2" opacity="0.8"/>
<line x1="229.3" y1="155.3" x2="234.2" y2="149.2" stroke="#6b7a55" stroke-width="1.2" opacity="0.8"/>
<line x1="134.3" y1="180.5" x2="135.1" y2="172.8" stroke="#2a3622" stroke-width="1.2" opacity="0.8"/>
<line x1="61.5" y1="170.1" x2="62.1" y2="162.2" stroke="#2a3622" stroke-width="1.2" opacity="0.8"/>
<line x1="246.9" y1="152.4" x2="246.5" y2="138.9" stroke="#33412a" stroke-width="1.2" opacity="0.8"/>
<line x1="0.7" y1="214.2" x2="-4.6" y2="207.6" stroke="#6b7a55" stroke-width="1.2" opacity="0.8"/>
<line x1="80.2" y1="184.8" x2="74.6" y2="175.9" stroke="#2a3622" stroke-width="1.2" opacity="0.8"/>
<line x1="148.5" y1="205.5" x2="143.8" y2="195.2" stroke="#33412a" stroke-width="1.2" opacity="0.8"/>
<line x1="137.0" y1="168.4" x2="139.5" y2="155.2" stroke="#6b7a55" stroke-width="1.2" opacity="0.8"/>
<line x1="122.3" y1="165.9" x2="123.2" y2="154.9" stroke="#5d6c4a" stroke-width="1.2" opacity="0.8"/>
<line x1="50.6" y1="219.9" x2="45.3" y2="209.4" stroke="#2a3622" stroke-width="1.2" opacity="0.8"/>
<line x1="81.3" y1="193.8" x2="82.6" y2="179.7" stroke="#33412a" stroke-width="1.2" opacity="0.8"/>
<line x1="180.8" y1="211.7" x2="175.2" y2="204.5" stroke="#2a3622" stroke-width="1.2" opacity="0.8"/>
<path d="M-5 227 L-5 172 Q40 150 120 146 Q190 148 262 208 L262 227 Z" fill="none"/>
<path d="M228 214 L262 192 L300 186 L332 190 L361 200 L361 227 L228 227 Z" fill="#aca391"/>
<path d="M300 200 L340 196 L361 210 L361 227 L320 227 Z" fill="#8f8676" opacity="0.7"/>
<ellipse cx="305" cy="183" rx="14" ry="6" fill="#55524e"/>
<path d="M-5 150 L18 156 L22 210 L10 227 L-5 227 Z" fill="#b4b9bc" opacity="0.75"/>
</g>
<filter id="lnoise" x="0" y="0" width="100%" height="100%"><feTurbulence type="fractalNoise" baseFrequency="0.22 0.32" numOctaves="3" seed="4"/><feColorMatrix type="matrix" values="0 0 0 0 0.5  0 0 0 0 0.5  0 0 0 0 0.5  0 0 0 1.6 -0.62"/><feComposite operator="in" in2="SourceGraphic"/></filter>
<filter id="lnoise2" x="0" y="0" width="100%" height="100%"><feTurbulence type="fractalNoise" baseFrequency="0.25 0.35" numOctaves="3" seed="9"/><feColorMatrix type="matrix" values="0 0 0 0 0  0 0 0 0 0  0 0 0 0 0  0 0 0 1.8 -0.75"/></filter>
<filter id="lnoise3" x="0" y="0" width="100%" height="100%"><feTurbulence type="fractalNoise" baseFrequency="0.3 0.4" numOctaves="3" seed="21"/><feColorMatrix type="matrix" values="0 0 0 0 1  0 0 0 0 1  0 0 0 0 1  0 0 0 1.6 -0.72"/></filter>
<clipPath id="lcliffclip"><path d="M-5 -5 L98 -5 L128 34 L162 76 L195 104 L172 113 L132 116 L92 120 L62 128 L40 140 L-5 148 Z"/><path d="M228 214 L262 192 L300 186 L332 190 L361 200 L361 227 L228 227 Z"/><path d="M250 93 L256 84 L266 74 L276 64 L286 59 L292 64 L300 71 L314 76 L326 80 L330 90 L318 93 Z"/><path d="M312 96 L322 86 L332 70 L340 56 L350 46 L361 40 L361 104 L330 100 Z"/></clipPath>
<clipPath id="lbushclip"><path d="M-5 172 Q40 150 120 146 Q190 148 262 208 L262 227 L-5 227 Z"/></clipPath>
<clipPath id="lseaclip"><path d="M-5 148 L40 140 L62 128 L92 120 L132 116 L172 113 L195 104 L190 88 L361 88 L361 200 L332 190 L262 192 L228 214 L190 170 L120 146 L40 152 Z"/></clipPath>
<filter id="lnA" x="0" y="0" width="100%" height="100%"><feTurbulence type="fractalNoise" baseFrequency="0.18 0.26" numOctaves="3" seed="4"/><feColorMatrix type="matrix" values="0 0 0 0 0  0 0 0 0 0  0 0 0 0 0  0 0 0 2.2 -1.0"/></filter>
<filter id="lnB" x="0" y="0" width="100%" height="100%"><feTurbulence type="fractalNoise" baseFrequency="0.2 0.3" numOctaves="3" seed="17"/><feColorMatrix type="matrix" values="0 0 0 0 1  0 0 0 0 1  0 0 0 0 0.95  0 0 0 2.2 -1.05"/></filter>
<filter id="lnC" x="0" y="0" width="100%" height="100%"><feTurbulence type="fractalNoise" baseFrequency="0.4 0.12" numOctaves="2" seed="8"/><feColorMatrix type="matrix" values="0 0 0 0 0.36  0 0 0 0 0.44  0 0 0 0 0.3  0 0 0 2.4 -1.1"/></filter>
<filter id="lnD" x="0" y="0" width="100%" height="100%"><feTurbulence type="fractalNoise" baseFrequency="0.5 0.08" numOctaves="2" seed="31"/><feColorMatrix type="matrix" values="0 0 0 0 0  0 0 0 0 0.03  0 0 0 0 0  0 0 0 2.4 -1.1"/></filter>
<filter id="lnE" x="0" y="0" width="100%" height="100%"><feTurbulence type="fractalNoise" baseFrequency="0.08 0.5" numOctaves="2" seed="5"/><feColorMatrix type="matrix" values="0 0 0 0 0.7  0 0 0 0 0.8  0 0 0 0 0.85  0 0 0 1.8 -0.95"/></filter>
<g clip-path="url(#lcliffclip)"><rect x="0" y="0" width="356" height="222" filter="url(#lnA)" opacity="0.42"/><rect x="0" y="0" width="356" height="222" filter="url(#lnB)" opacity="0.5"/></g>
<g clip-path="url(#lbushclip)"><rect x="0" y="0" width="356" height="222" filter="url(#lnC)" opacity="0.5"/><rect x="0" y="0" width="356" height="222" filter="url(#lnD)" opacity="0.7"/></g>
<g clip-path="url(#lseaclip)"><rect x="0" y="0" width="356" height="222" filter="url(#lnE)" opacity="0.3"/></g>
<g transform="scale(0.798)">
<text transform="translate(461.6,-16.6) rotate(34)" text-anchor="middle" dominant-baseline="middle" font-size="4.5" font-weight="bold" fill="#ffffff" fill-opacity="0.92" stroke="#ffffff" stroke-width="0.3" stroke-opacity="0.8" font-family="Liberation Sans">PixMarka © My Brand</text>
<text transform="translate(350.1,-28.4) rotate(34)" text-anchor="middle" dominant-baseline="middle" font-size="4.5" font-weight="bold" fill="#ffffff" fill-opacity="0.92" stroke="#ffffff" stroke-width="0.3" stroke-opacity="0.8" font-family="Liberation Sans">PixMarka © My Brand</text>
<text transform="translate(391.2,-0.7) rotate(34)" text-anchor="middle" dominant-baseline="middle" font-size="4.5" font-weight="bold" fill="#ffffff" fill-opacity="0.92" stroke="#ffffff" stroke-width="0.3" stroke-opacity="0.8" font-family="Liberation Sans">PixMarka © My Brand</text>
<text transform="translate(432.2,27.0) rotate(34)" text-anchor="middle" dominant-baseline="middle" font-size="4.5" font-weight="bold" fill="#ffffff" fill-opacity="0.92" stroke="#ffffff" stroke-width="0.3" stroke-opacity="0.8" font-family="Liberation Sans">PixMarka © My Brand</text>
<text transform="translate(473.2,54.7) rotate(34)" text-anchor="middle" dominant-baseline="middle" font-size="4.5" font-weight="bold" fill="#ffffff" fill-opacity="0.92" stroke="#ffffff" stroke-width="0.3" stroke-opacity="0.8" font-family="Liberation Sans">PixMarka © My Brand</text>
<text transform="translate(279.7,-12.4) rotate(34)" text-anchor="middle" dominant-baseline="middle" font-size="4.5" font-weight="bold" fill="#ffffff" fill-opacity="0.92" stroke="#ffffff" stroke-width="0.3" stroke-opacity="0.8" font-family="Liberation Sans">PixMarka © My Brand</text>
<text transform="translate(320.7,15.2) rotate(34)" text-anchor="middle" dominant-baseline="middle" font-size="4.5" font-weight="bold" fill="#ffffff" fill-opacity="0.92" stroke="#ffffff" stroke-width="0.3" stroke-opacity="0.8" font-family="Liberation Sans">PixMarka © My Brand</text>
<text transform="translate(361.7,42.9) rotate(34)" text-anchor="middle" dominant-baseline="middle" font-size="4.5" font-weight="bold" fill="#ffffff" fill-opacity="0.92" stroke="#ffffff" stroke-width="0.3" stroke-opacity="0.8" font-family="Liberation Sans">PixMarka © My Brand</text>
<text transform="translate(402.8,70.6) rotate(34)" text-anchor="middle" dominant-baseline="middle" font-size="4.5" font-weight="bold" fill="#ffffff" fill-opacity="0.92" stroke="#ffffff" stroke-width="0.3" stroke-opacity="0.8" font-family="Liberation Sans">PixMarka © My Brand</text>
<text transform="translate(443.8,98.3) rotate(34)" text-anchor="middle" dominant-baseline="middle" font-size="4.5" font-weight="bold" fill="#ffffff" fill-opacity="0.92" stroke="#ffffff" stroke-width="0.3" stroke-opacity="0.8" font-family="Liberation Sans">PixMarka © My Brand</text>
<text transform="translate(168.2,-24.2) rotate(34)" text-anchor="middle" dominant-baseline="middle" font-size="4.5" font-weight="bold" fill="#ffffff" fill-opacity="0.92" stroke="#ffffff" stroke-width="0.3" stroke-opacity="0.8" font-family="Liberation Sans">PixMarka © My Brand</text>
<text transform="translate(209.2,3.5) rotate(34)" text-anchor="middle" dominant-baseline="middle" font-size="4.5" font-weight="bold" fill="#ffffff" fill-opacity="0.92" stroke="#ffffff" stroke-width="0.3" stroke-opacity="0.8" font-family="Liberation Sans">PixMarka © My Brand</text>
<text transform="translate(250.3,31.2) rotate(34)" text-anchor="middle" dominant-baseline="middle" font-size="4.5" font-weight="bold" fill="#ffffff" fill-opacity="0.92" stroke="#ffffff" stroke-width="0.3" stroke-opacity="0.8" font-family="Liberation Sans">PixMarka © My Brand</text>
<text transform="translate(291.3,58.8) rotate(34)" text-anchor="middle" dominant-baseline="middle" font-size="4.5" font-weight="bold" fill="#ffffff" fill-opacity="0.92" stroke="#ffffff" stroke-width="0.3" stroke-opacity="0.8" font-family="Liberation Sans">PixMarka © My Brand</text>
<text transform="translate(332.3,86.5) rotate(34)" text-anchor="middle" dominant-baseline="middle" font-size="4.5" font-weight="bold" fill="#ffffff" fill-opacity="0.92" stroke="#ffffff" stroke-width="0.3" stroke-opacity="0.8" font-family="Liberation Sans">PixMarka © My Brand</text>
<text transform="translate(373.4,114.2) rotate(34)" text-anchor="middle" dominant-baseline="middle" font-size="4.5" font-weight="bold" fill="#ffffff" fill-opacity="0.92" stroke="#ffffff" stroke-width="0.3" stroke-opacity="0.8" font-family="Liberation Sans">PixMarka © My Brand</text>
<text transform="translate(414.4,141.9) rotate(34)" text-anchor="middle" dominant-baseline="middle" font-size="4.5" font-weight="bold" fill="#ffffff" fill-opacity="0.92" stroke="#ffffff" stroke-width="0.3" stroke-opacity="0.8" font-family="Liberation Sans">PixMarka © My Brand</text>
<text transform="translate(455.4,169.6) rotate(34)" text-anchor="middle" dominant-baseline="middle" font-size="4.5" font-weight="bold" fill="#ffffff" fill-opacity="0.92" stroke="#ffffff" stroke-width="0.3" stroke-opacity="0.8" font-family="Liberation Sans">PixMarka © My Brand</text>
<text transform="translate(97.7,-8.3) rotate(34)" text-anchor="middle" dominant-baseline="middle" font-size="4.5" font-weight="bold" fill="#ffffff" fill-opacity="0.92" stroke="#ffffff" stroke-width="0.3" stroke-opacity="0.8" font-family="Liberation Sans">PixMarka © My Brand</text>
<text transform="translate(138.8,19.4) rotate(34)" text-anchor="middle" dominant-baseline="middle" font-size="4.5" font-weight="bold" fill="#ffffff" fill-opacity="0.92" stroke="#ffffff" stroke-width="0.3" stroke-opacity="0.8" font-family="Liberation Sans">PixMarka © My Brand</text>
<text transform="translate(179.8,47.1) rotate(34)" text-anchor="middle" dominant-baseline="middle" font-size="4.5" font-weight="bold" fill="#ffffff" fill-opacity="0.92" stroke="#ffffff" stroke-width="0.3" stroke-opacity="0.8" font-family="Liberation Sans">PixMarka © My Brand</text>
<text transform="translate(220.8,74.8) rotate(34)" text-anchor="middle" dominant-baseline="middle" font-size="4.5" font-weight="bold" fill="#ffffff" fill-opacity="0.92" stroke="#ffffff" stroke-width="0.3" stroke-opacity="0.8" font-family="Liberation Sans">PixMarka © My Brand</text>
<text transform="translate(261.9,102.5) rotate(34)" text-anchor="middle" dominant-baseline="middle" font-size="4.5" font-weight="bold" fill="#ffffff" fill-opacity="0.92" stroke="#ffffff" stroke-width="0.3" stroke-opacity="0.8" font-family="Liberation Sans">PixMarka © My Brand</text>
<text transform="translate(302.9,130.1) rotate(34)" text-anchor="middle" dominant-baseline="middle" font-size="4.5" font-weight="bold" fill="#ffffff" fill-opacity="0.92" stroke="#ffffff" stroke-width="0.3" stroke-opacity="0.8" font-family="Liberation Sans">PixMarka © My Brand</text>
<text transform="translate(344.0,157.8) rotate(34)" text-anchor="middle" dominant-baseline="middle" font-size="4.5" font-weight="bold" fill="#ffffff" fill-opacity="0.92" stroke="#ffffff" stroke-width="0.3" stroke-opacity="0.8" font-family="Liberation Sans">PixMarka © My Brand</text>
<text transform="translate(385.0,185.5) rotate(34)" text-anchor="middle" dominant-baseline="middle" font-size="4.5" font-weight="bold" fill="#ffffff" fill-opacity="0.92" stroke="#ffffff" stroke-width="0.3" stroke-opacity="0.8" font-family="Liberation Sans">PixMarka © My Brand</text>
<text transform="translate(426.0,213.2) rotate(34)" text-anchor="middle" dominant-baseline="middle" font-size="4.5" font-weight="bold" fill="#ffffff" fill-opacity="0.92" stroke="#ffffff" stroke-width="0.3" stroke-opacity="0.8" font-family="Liberation Sans">PixMarka © My Brand</text>
<text transform="translate(467.1,240.9) rotate(34)" text-anchor="middle" dominant-baseline="middle" font-size="4.5" font-weight="bold" fill="#ffffff" fill-opacity="0.92" stroke="#ffffff" stroke-width="0.3" stroke-opacity="0.8" font-family="Liberation Sans">PixMarka © My Brand</text>
<text transform="translate(-13.8,-20.0) rotate(34)" text-anchor="middle" dominant-baseline="middle" font-size="4.5" font-weight="bold" fill="#ffffff" fill-opacity="0.92" stroke="#ffffff" stroke-width="0.3" stroke-opacity="0.8" font-family="Liberation Sans">PixMarka © My Brand</text>
<text transform="translate(27.3,7.7) rotate(34)" text-anchor="middle" dominant-baseline="middle" font-size="4.5" font-weight="bold" fill="#ffffff" fill-opacity="0.92" stroke="#ffffff" stroke-width="0.3" stroke-opacity="0.8" font-family="Liberation Sans">PixMarka © My Brand</text>
<text transform="translate(68.3,35.3) rotate(34)" text-anchor="middle" dominant-baseline="middle" font-size="4.5" font-weight="bold" fill="#ffffff" fill-opacity="0.92" stroke="#ffffff" stroke-width="0.3" stroke-opacity="0.8" font-family="Liberation Sans">PixMarka © My Brand</text>
<text transform="translate(109.4,63.0) rotate(34)" text-anchor="middle" dominant-baseline="middle" font-size="4.5" font-weight="bold" fill="#ffffff" fill-opacity="0.92" stroke="#ffffff" stroke-width="0.3" stroke-opacity="0.8" font-family="Liberation Sans">PixMarka © My Brand</text>
<text transform="translate(150.4,90.7) rotate(34)" text-anchor="middle" dominant-baseline="middle" font-size="4.5" font-weight="bold" fill="#ffffff" fill-opacity="0.92" stroke="#ffffff" stroke-width="0.3" stroke-opacity="0.8" font-family="Liberation Sans">PixMarka © My Brand</text>
<text transform="translate(191.4,118.4) rotate(34)" text-anchor="middle" dominant-baseline="middle" font-size="4.5" font-weight="bold" fill="#ffffff" fill-opacity="0.92" stroke="#ffffff" stroke-width="0.3" stroke-opacity="0.8" font-family="Liberation Sans">PixMarka © My Brand</text>
<text transform="translate(232.5,146.1) rotate(34)" text-anchor="middle" dominant-baseline="middle" font-size="4.5" font-weight="bold" fill="#ffffff" fill-opacity="0.92" stroke="#ffffff" stroke-width="0.3" stroke-opacity="0.8" font-family="Liberation Sans">PixMarka © My Brand</text>
<text transform="translate(273.5,173.7) rotate(34)" text-anchor="middle" dominant-baseline="middle" font-size="4.5" font-weight="bold" fill="#ffffff" fill-opacity="0.92" stroke="#ffffff" stroke-width="0.3" stroke-opacity="0.8" font-family="Liberation Sans">PixMarka © My Brand</text>
<text transform="translate(314.5,201.4) rotate(34)" text-anchor="middle" dominant-baseline="middle" font-size="4.5" font-weight="bold" fill="#ffffff" fill-opacity="0.92" stroke="#ffffff" stroke-width="0.3" stroke-opacity="0.8" font-family="Liberation Sans">PixMarka © My Brand</text>
<text transform="translate(355.6,229.1) rotate(34)" text-anchor="middle" dominant-baseline="middle" font-size="4.5" font-weight="bold" fill="#ffffff" fill-opacity="0.92" stroke="#ffffff" stroke-width="0.3" stroke-opacity="0.8" font-family="Liberation Sans">PixMarka © My Brand</text>
<text transform="translate(396.6,256.8) rotate(34)" text-anchor="middle" dominant-baseline="middle" font-size="4.5" font-weight="bold" fill="#ffffff" fill-opacity="0.92" stroke="#ffffff" stroke-width="0.3" stroke-opacity="0.8" font-family="Liberation Sans">PixMarka © My Brand</text>
<text transform="translate(437.7,284.5) rotate(34)" text-anchor="middle" dominant-baseline="middle" font-size="4.5" font-weight="bold" fill="#ffffff" fill-opacity="0.92" stroke="#ffffff" stroke-width="0.3" stroke-opacity="0.8" font-family="Liberation Sans">PixMarka © My Brand</text>
<text transform="translate(-2.1,51.3) rotate(34)" text-anchor="middle" dominant-baseline="middle" font-size="4.5" font-weight="bold" fill="#ffffff" fill-opacity="0.92" stroke="#ffffff" stroke-width="0.3" stroke-opacity="0.8" font-family="Liberation Sans">PixMarka © My Brand</text>
<text transform="translate(38.9,79.0) rotate(34)" text-anchor="middle" dominant-baseline="middle" font-size="4.5" font-weight="bold" fill="#ffffff" fill-opacity="0.92" stroke="#ffffff" stroke-width="0.3" stroke-opacity="0.8" font-family="Liberation Sans">PixMarka © My Brand</text>
<text transform="translate(79.9,106.6) rotate(34)" text-anchor="middle" dominant-baseline="middle" font-size="4.5" font-weight="bold" fill="#ffffff" fill-opacity="0.92" stroke="#ffffff" stroke-width="0.3" stroke-opacity="0.8" font-family="Liberation Sans">PixMarka © My Brand</text>
<text transform="translate(121.0,134.3) rotate(34)" text-anchor="middle" dominant-baseline="middle" font-size="4.5" font-weight="bold" fill="#ffffff" fill-opacity="0.92" stroke="#ffffff" stroke-width="0.3" stroke-opacity="0.8" font-family="Liberation Sans">PixMarka © My Brand</text>
<text transform="translate(162.0,162.0) rotate(34)" text-anchor="middle" dominant-baseline="middle" font-size="4.5" font-weight="bold" fill="#ffffff" fill-opacity="0.92" stroke="#ffffff" stroke-width="0.3" stroke-opacity="0.8" font-family="Liberation Sans">PixMarka © My Brand</text>
<text transform="translate(203.1,189.7) rotate(34)" text-anchor="middle" dominant-baseline="middle" font-size="4.5" font-weight="bold" fill="#ffffff" fill-opacity="0.92" stroke="#ffffff" stroke-width="0.3" stroke-opacity="0.8" font-family="Liberation Sans">PixMarka © My Brand</text>
<text transform="translate(244.1,217.4) rotate(34)" text-anchor="middle" dominant-baseline="middle" font-size="4.5" font-weight="bold" fill="#ffffff" fill-opacity="0.92" stroke="#ffffff" stroke-width="0.3" stroke-opacity="0.8" font-family="Liberation Sans">PixMarka © My Brand</text>
<text transform="translate(285.1,245.0) rotate(34)" text-anchor="middle" dominant-baseline="middle" font-size="4.5" font-weight="bold" fill="#ffffff" fill-opacity="0.92" stroke="#ffffff" stroke-width="0.3" stroke-opacity="0.8" font-family="Liberation Sans">PixMarka © My Brand</text>
<text transform="translate(326.2,272.7) rotate(34)" text-anchor="middle" dominant-baseline="middle" font-size="4.5" font-weight="bold" fill="#ffffff" fill-opacity="0.92" stroke="#ffffff" stroke-width="0.3" stroke-opacity="0.8" font-family="Liberation Sans">PixMarka © My Brand</text>
<text transform="translate(367.2,300.4) rotate(34)" text-anchor="middle" dominant-baseline="middle" font-size="4.5" font-weight="bold" fill="#ffffff" fill-opacity="0.92" stroke="#ffffff" stroke-width="0.3" stroke-opacity="0.8" font-family="Liberation Sans">PixMarka © My Brand</text>
<text transform="translate(9.5,122.6) rotate(34)" text-anchor="middle" dominant-baseline="middle" font-size="4.5" font-weight="bold" fill="#ffffff" fill-opacity="0.92" stroke="#ffffff" stroke-width="0.3" stroke-opacity="0.8" font-family="Liberation Sans">PixMarka © My Brand</text>
<text transform="translate(50.5,150.2) rotate(34)" text-anchor="middle" dominant-baseline="middle" font-size="4.5" font-weight="bold" fill="#ffffff" fill-opacity="0.92" stroke="#ffffff" stroke-width="0.3" stroke-opacity="0.8" font-family="Liberation Sans">PixMarka © My Brand</text>
<text transform="translate(91.6,177.9) rotate(34)" text-anchor="middle" dominant-baseline="middle" font-size="4.5" font-weight="bold" fill="#ffffff" fill-opacity="0.92" stroke="#ffffff" stroke-width="0.3" stroke-opacity="0.8" font-family="Liberation Sans">PixMarka © My Brand</text>
<text transform="translate(132.6,205.6) rotate(34)" text-anchor="middle" dominant-baseline="middle" font-size="4.5" font-weight="bold" fill="#ffffff" fill-opacity="0.92" stroke="#ffffff" stroke-width="0.3" stroke-opacity="0.8" font-family="Liberation Sans">PixMarka © My Brand</text>
<text transform="translate(173.6,233.3) rotate(34)" text-anchor="middle" dominant-baseline="middle" font-size="4.5" font-weight="bold" fill="#ffffff" fill-opacity="0.92" stroke="#ffffff" stroke-width="0.3" stroke-opacity="0.8" font-family="Liberation Sans">PixMarka © My Brand</text>
<text transform="translate(214.7,261.0) rotate(34)" text-anchor="middle" dominant-baseline="middle" font-size="4.5" font-weight="bold" fill="#ffffff" fill-opacity="0.92" stroke="#ffffff" stroke-width="0.3" stroke-opacity="0.8" font-family="Liberation Sans">PixMarka © My Brand</text>
<text transform="translate(255.7,288.6) rotate(34)" text-anchor="middle" dominant-baseline="middle" font-size="4.5" font-weight="bold" fill="#ffffff" fill-opacity="0.92" stroke="#ffffff" stroke-width="0.3" stroke-opacity="0.8" font-family="Liberation Sans">PixMarka © My Brand</text>
<text transform="translate(-19.9,166.2) rotate(34)" text-anchor="middle" dominant-baseline="middle" font-size="4.5" font-weight="bold" fill="#ffffff" fill-opacity="0.92" stroke="#ffffff" stroke-width="0.3" stroke-opacity="0.8" font-family="Liberation Sans">PixMarka © My Brand</text>
<text transform="translate(21.1,193.8) rotate(34)" text-anchor="middle" dominant-baseline="middle" font-size="4.5" font-weight="bold" fill="#ffffff" fill-opacity="0.92" stroke="#ffffff" stroke-width="0.3" stroke-opacity="0.8" font-family="Liberation Sans">PixMarka © My Brand</text>
<text transform="translate(62.1,221.5) rotate(34)" text-anchor="middle" dominant-baseline="middle" font-size="4.5" font-weight="bold" fill="#ffffff" fill-opacity="0.92" stroke="#ffffff" stroke-width="0.3" stroke-opacity="0.8" font-family="Liberation Sans">PixMarka © My Brand</text>
<text transform="translate(103.2,249.2) rotate(34)" text-anchor="middle" dominant-baseline="middle" font-size="4.5" font-weight="bold" fill="#ffffff" fill-opacity="0.92" stroke="#ffffff" stroke-width="0.3" stroke-opacity="0.8" font-family="Liberation Sans">PixMarka © My Brand</text>
<text transform="translate(144.2,276.9) rotate(34)" text-anchor="middle" dominant-baseline="middle" font-size="4.5" font-weight="bold" fill="#ffffff" fill-opacity="0.92" stroke="#ffffff" stroke-width="0.3" stroke-opacity="0.8" font-family="Liberation Sans">PixMarka © My Brand</text>
<text transform="translate(185.3,304.6) rotate(34)" text-anchor="middle" dominant-baseline="middle" font-size="4.5" font-weight="bold" fill="#ffffff" fill-opacity="0.92" stroke="#ffffff" stroke-width="0.3" stroke-opacity="0.8" font-family="Liberation Sans">PixMarka © My Brand</text>
<text transform="translate(-8.3,237.5) rotate(34)" text-anchor="middle" dominant-baseline="middle" font-size="4.5" font-weight="bold" fill="#ffffff" fill-opacity="0.92" stroke="#ffffff" stroke-width="0.3" stroke-opacity="0.8" font-family="Liberation Sans">PixMarka © My Brand</text>
<text transform="translate(32.7,265.1) rotate(34)" text-anchor="middle" dominant-baseline="middle" font-size="4.5" font-weight="bold" fill="#ffffff" fill-opacity="0.92" stroke="#ffffff" stroke-width="0.3" stroke-opacity="0.8" font-family="Liberation Sans">PixMarka © My Brand</text>
<text transform="translate(73.8,292.8) rotate(34)" text-anchor="middle" dominant-baseline="middle" font-size="4.5" font-weight="bold" fill="#ffffff" fill-opacity="0.92" stroke="#ffffff" stroke-width="0.3" stroke-opacity="0.8" font-family="Liberation Sans">PixMarka © My Brand</text>
<text transform="translate(9.8,-10.5) rotate(-17)" text-anchor="middle" dominant-baseline="middle" font-size="4.5" font-weight="bold" fill="#ffffff" fill-opacity="0.92" stroke="#ffffff" stroke-width="0.3" stroke-opacity="0.8" font-family="Liberation Sans">PixMarka © My Brand</text>
<text transform="translate(59.8,-25.8) rotate(-17)" text-anchor="middle" dominant-baseline="middle" font-size="4.5" font-weight="bold" fill="#ffffff" fill-opacity="0.92" stroke="#ffffff" stroke-width="0.3" stroke-opacity="0.8" font-family="Liberation Sans">PixMarka © My Brand</text>
<text transform="translate(-24.7,55.0) rotate(-17)" text-anchor="middle" dominant-baseline="middle" font-size="4.5" font-weight="bold" fill="#ffffff" fill-opacity="0.92" stroke="#ffffff" stroke-width="0.3" stroke-opacity="0.8" font-family="Liberation Sans">PixMarka © My Brand</text>
<text transform="translate(25.2,39.8) rotate(-17)" text-anchor="middle" dominant-baseline="middle" font-size="4.5" font-weight="bold" fill="#ffffff" fill-opacity="0.92" stroke="#ffffff" stroke-width="0.3" stroke-opacity="0.8" font-family="Liberation Sans">PixMarka © My Brand</text>
<text transform="translate(75.1,24.5) rotate(-17)" text-anchor="middle" dominant-baseline="middle" font-size="4.5" font-weight="bold" fill="#ffffff" fill-opacity="0.92" stroke="#ffffff" stroke-width="0.3" stroke-opacity="0.8" font-family="Liberation Sans">PixMarka © My Brand</text>
<text transform="translate(125.1,9.2) rotate(-17)" text-anchor="middle" dominant-baseline="middle" font-size="4.5" font-weight="bold" fill="#ffffff" fill-opacity="0.92" stroke="#ffffff" stroke-width="0.3" stroke-opacity="0.8" font-family="Liberation Sans">PixMarka © My Brand</text>
<text transform="translate(175.0,-6.0) rotate(-17)" text-anchor="middle" dominant-baseline="middle" font-size="4.5" font-weight="bold" fill="#ffffff" fill-opacity="0.92" stroke="#ffffff" stroke-width="0.3" stroke-opacity="0.8" font-family="Liberation Sans">PixMarka © My Brand</text>
<text transform="translate(224.9,-21.3) rotate(-17)" text-anchor="middle" dominant-baseline="middle" font-size="4.5" font-weight="bold" fill="#ffffff" fill-opacity="0.92" stroke="#ffffff" stroke-width="0.3" stroke-opacity="0.8" font-family="Liberation Sans">PixMarka © My Brand</text>
<text transform="translate(-9.3,105.3) rotate(-17)" text-anchor="middle" dominant-baseline="middle" font-size="4.5" font-weight="bold" fill="#ffffff" fill-opacity="0.92" stroke="#ffffff" stroke-width="0.3" stroke-opacity="0.8" font-family="Liberation Sans">PixMarka © My Brand</text>
<text transform="translate(40.6,90.1) rotate(-17)" text-anchor="middle" dominant-baseline="middle" font-size="4.5" font-weight="bold" fill="#ffffff" fill-opacity="0.92" stroke="#ffffff" stroke-width="0.3" stroke-opacity="0.8" font-family="Liberation Sans">PixMarka © My Brand</text>
<text transform="translate(90.5,74.8) rotate(-17)" text-anchor="middle" dominant-baseline="middle" font-size="4.5" font-weight="bold" fill="#ffffff" fill-opacity="0.92" stroke="#ffffff" stroke-width="0.3" stroke-opacity="0.8" font-family="Liberation Sans">PixMarka © My Brand</text>
<text transform="translate(140.4,59.5) rotate(-17)" text-anchor="middle" dominant-baseline="middle" font-size="4.5" font-weight="bold" fill="#ffffff" fill-opacity="0.92" stroke="#ffffff" stroke-width="0.3" stroke-opacity="0.8" font-family="Liberation Sans">PixMarka © My Brand</text>
<text transform="translate(190.4,44.3) rotate(-17)" text-anchor="middle" dominant-baseline="middle" font-size="4.5" font-weight="bold" fill="#ffffff" fill-opacity="0.92" stroke="#ffffff" stroke-width="0.3" stroke-opacity="0.8" font-family="Liberation Sans">PixMarka © My Brand</text>
<text transform="translate(240.3,29.0) rotate(-17)" text-anchor="middle" dominant-baseline="middle" font-size="4.5" font-weight="bold" fill="#ffffff" fill-opacity="0.92" stroke="#ffffff" stroke-width="0.3" stroke-opacity="0.8" font-family="Liberation Sans">PixMarka © My Brand</text>
<text transform="translate(290.2,13.8) rotate(-17)" text-anchor="middle" dominant-baseline="middle" font-size="4.5" font-weight="bold" fill="#ffffff" fill-opacity="0.92" stroke="#ffffff" stroke-width="0.3" stroke-opacity="0.8" font-family="Liberation Sans">PixMarka © My Brand</text>
<text transform="translate(340.1,-1.5) rotate(-17)" text-anchor="middle" dominant-baseline="middle" font-size="4.5" font-weight="bold" fill="#ffffff" fill-opacity="0.92" stroke="#ffffff" stroke-width="0.3" stroke-opacity="0.8" font-family="Liberation Sans">PixMarka © My Brand</text>
<text transform="translate(390.0,-16.8) rotate(-17)" text-anchor="middle" dominant-baseline="middle" font-size="4.5" font-weight="bold" fill="#ffffff" fill-opacity="0.92" stroke="#ffffff" stroke-width="0.3" stroke-opacity="0.8" font-family="Liberation Sans">PixMarka © My Brand</text>
<text transform="translate(6.1,155.6) rotate(-17)" text-anchor="middle" dominant-baseline="middle" font-size="4.5" font-weight="bold" fill="#ffffff" fill-opacity="0.92" stroke="#ffffff" stroke-width="0.3" stroke-opacity="0.8" font-family="Liberation Sans">PixMarka © My Brand</text>
<text transform="translate(56.0,140.4) rotate(-17)" text-anchor="middle" dominant-baseline="middle" font-size="4.5" font-weight="bold" fill="#ffffff" fill-opacity="0.92" stroke="#ffffff" stroke-width="0.3" stroke-opacity="0.8" font-family="Liberation Sans">PixMarka © My Brand</text>
<text transform="translate(105.9,125.1) rotate(-17)" text-anchor="middle" dominant-baseline="middle" font-size="4.5" font-weight="bold" fill="#ffffff" fill-opacity="0.92" stroke="#ffffff" stroke-width="0.3" stroke-opacity="0.8" font-family="Liberation Sans">PixMarka © My Brand</text>
<text transform="translate(155.8,109.8) rotate(-17)" text-anchor="middle" dominant-baseline="middle" font-size="4.5" font-weight="bold" fill="#ffffff" fill-opacity="0.92" stroke="#ffffff" stroke-width="0.3" stroke-opacity="0.8" font-family="Liberation Sans">PixMarka © My Brand</text>
<text transform="translate(205.7,94.6) rotate(-17)" text-anchor="middle" dominant-baseline="middle" font-size="4.5" font-weight="bold" fill="#ffffff" fill-opacity="0.92" stroke="#ffffff" stroke-width="0.3" stroke-opacity="0.8" font-family="Liberation Sans">PixMarka © My Brand</text>
<text transform="translate(255.7,79.3) rotate(-17)" text-anchor="middle" dominant-baseline="middle" font-size="4.5" font-weight="bold" fill="#ffffff" fill-opacity="0.92" stroke="#ffffff" stroke-width="0.3" stroke-opacity="0.8" font-family="Liberation Sans">PixMarka © My Brand</text>
<text transform="translate(305.6,64.1) rotate(-17)" text-anchor="middle" dominant-baseline="middle" font-size="4.5" font-weight="bold" fill="#ffffff" fill-opacity="0.92" stroke="#ffffff" stroke-width="0.3" stroke-opacity="0.8" font-family="Liberation Sans">PixMarka © My Brand</text>
<text transform="translate(355.5,48.8) rotate(-17)" text-anchor="middle" dominant-baseline="middle" font-size="4.5" font-weight="bold" fill="#ffffff" fill-opacity="0.92" stroke="#ffffff" stroke-width="0.3" stroke-opacity="0.8" font-family="Liberation Sans">PixMarka © My Brand</text>
<text transform="translate(405.4,33.5) rotate(-17)" text-anchor="middle" dominant-baseline="middle" font-size="4.5" font-weight="bold" fill="#ffffff" fill-opacity="0.92" stroke="#ffffff" stroke-width="0.3" stroke-opacity="0.8" font-family="Liberation Sans">PixMarka © My Brand</text>
<text transform="translate(455.3,18.3) rotate(-17)" text-anchor="middle" dominant-baseline="middle" font-size="4.5" font-weight="bold" fill="#ffffff" fill-opacity="0.92" stroke="#ffffff" stroke-width="0.3" stroke-opacity="0.8" font-family="Liberation Sans">PixMarka © My Brand</text>
<text transform="translate(-28.5,221.2) rotate(-17)" text-anchor="middle" dominant-baseline="middle" font-size="4.5" font-weight="bold" fill="#ffffff" fill-opacity="0.92" stroke="#ffffff" stroke-width="0.3" stroke-opacity="0.8" font-family="Liberation Sans">PixMarka © My Brand</text>
<text transform="translate(21.4,205.9) rotate(-17)" text-anchor="middle" dominant-baseline="middle" font-size="4.5" font-weight="bold" fill="#ffffff" fill-opacity="0.92" stroke="#ffffff" stroke-width="0.3" stroke-opacity="0.8" font-family="Liberation Sans">PixMarka © My Brand</text>
<text transform="translate(71.4,190.7) rotate(-17)" text-anchor="middle" dominant-baseline="middle" font-size="4.5" font-weight="bold" fill="#ffffff" fill-opacity="0.92" stroke="#ffffff" stroke-width="0.3" stroke-opacity="0.8" font-family="Liberation Sans">PixMarka © My Brand</text>
<text transform="translate(121.3,175.4) rotate(-17)" text-anchor="middle" dominant-baseline="middle" font-size="4.5" font-weight="bold" fill="#ffffff" fill-opacity="0.92" stroke="#ffffff" stroke-width="0.3" stroke-opacity="0.8" font-family="Liberation Sans">PixMarka © My Brand</text>
<text transform="translate(171.2,160.1) rotate(-17)" text-anchor="middle" dominant-baseline="middle" font-size="4.5" font-weight="bold" fill="#ffffff" fill-opacity="0.92" stroke="#ffffff" stroke-width="0.3" stroke-opacity="0.8" font-family="Liberation Sans">PixMarka © My Brand</text>
<text transform="translate(221.1,144.9) rotate(-17)" text-anchor="middle" dominant-baseline="middle" font-size="4.5" font-weight="bold" fill="#ffffff" fill-opacity="0.92" stroke="#ffffff" stroke-width="0.3" stroke-opacity="0.8" font-family="Liberation Sans">PixMarka © My Brand</text>
<text transform="translate(271.0,129.6) rotate(-17)" text-anchor="middle" dominant-baseline="middle" font-size="4.5" font-weight="bold" fill="#ffffff" fill-opacity="0.92" stroke="#ffffff" stroke-width="0.3" stroke-opacity="0.8" font-family="Liberation Sans">PixMarka © My Brand</text>
<text transform="translate(321.0,114.4) rotate(-17)" text-anchor="middle" dominant-baseline="middle" font-size="4.5" font-weight="bold" fill="#ffffff" fill-opacity="0.92" stroke="#ffffff" stroke-width="0.3" stroke-opacity="0.8" font-family="Liberation Sans">PixMarka © My Brand</text>
<text transform="translate(370.9,99.1) rotate(-17)" text-anchor="middle" dominant-baseline="middle" font-size="4.5" font-weight="bold" fill="#ffffff" fill-opacity="0.92" stroke="#ffffff" stroke-width="0.3" stroke-opacity="0.8" font-family="Liberation Sans">PixMarka © My Brand</text>
<text transform="translate(420.8,83.8) rotate(-17)" text-anchor="middle" dominant-baseline="middle" font-size="4.5" font-weight="bold" fill="#ffffff" fill-opacity="0.92" stroke="#ffffff" stroke-width="0.3" stroke-opacity="0.8" font-family="Liberation Sans">PixMarka © My Brand</text>
<text transform="translate(470.7,68.6) rotate(-17)" text-anchor="middle" dominant-baseline="middle" font-size="4.5" font-weight="bold" fill="#ffffff" fill-opacity="0.92" stroke="#ffffff" stroke-width="0.3" stroke-opacity="0.8" font-family="Liberation Sans">PixMarka © My Brand</text>
<text transform="translate(-13.1,271.5) rotate(-17)" text-anchor="middle" dominant-baseline="middle" font-size="4.5" font-weight="bold" fill="#ffffff" fill-opacity="0.92" stroke="#ffffff" stroke-width="0.3" stroke-opacity="0.8" font-family="Liberation Sans">PixMarka © My Brand</text>
<text transform="translate(36.8,256.2) rotate(-17)" text-anchor="middle" dominant-baseline="middle" font-size="4.5" font-weight="bold" fill="#ffffff" fill-opacity="0.92" stroke="#ffffff" stroke-width="0.3" stroke-opacity="0.8" font-family="Liberation Sans">PixMarka © My Brand</text>
<text transform="translate(86.7,241.0) rotate(-17)" text-anchor="middle" dominant-baseline="middle" font-size="4.5" font-weight="bold" fill="#ffffff" fill-opacity="0.92" stroke="#ffffff" stroke-width="0.3" stroke-opacity="0.8" font-family="Liberation Sans">PixMarka © My Brand</text>
<text transform="translate(136.7,225.7) rotate(-17)" text-anchor="middle" dominant-baseline="middle" font-size="4.5" font-weight="bold" fill="#ffffff" fill-opacity="0.92" stroke="#ffffff" stroke-width="0.3" stroke-opacity="0.8" font-family="Liberation Sans">PixMarka © My Brand</text>
<text transform="translate(186.6,210.4) rotate(-17)" text-anchor="middle" dominant-baseline="middle" font-size="4.5" font-weight="bold" fill="#ffffff" fill-opacity="0.92" stroke="#ffffff" stroke-width="0.3" stroke-opacity="0.8" font-family="Liberation Sans">PixMarka © My Brand</text>
<text transform="translate(236.5,195.2) rotate(-17)" text-anchor="middle" dominant-baseline="middle" font-size="4.5" font-weight="bold" fill="#ffffff" fill-opacity="0.92" stroke="#ffffff" stroke-width="0.3" stroke-opacity="0.8" font-family="Liberation Sans">PixMarka © My Brand</text>
<text transform="translate(286.4,179.9) rotate(-17)" text-anchor="middle" dominant-baseline="middle" font-size="4.5" font-weight="bold" fill="#ffffff" fill-opacity="0.92" stroke="#ffffff" stroke-width="0.3" stroke-opacity="0.8" font-family="Liberation Sans">PixMarka © My Brand</text>
<text transform="translate(336.3,164.7) rotate(-17)" text-anchor="middle" dominant-baseline="middle" font-size="4.5" font-weight="bold" fill="#ffffff" fill-opacity="0.92" stroke="#ffffff" stroke-width="0.3" stroke-opacity="0.8" font-family="Liberation Sans">PixMarka © My Brand</text>
<text transform="translate(386.3,149.4) rotate(-17)" text-anchor="middle" dominant-baseline="middle" font-size="4.5" font-weight="bold" fill="#ffffff" fill-opacity="0.92" stroke="#ffffff" stroke-width="0.3" stroke-opacity="0.8" font-family="Liberation Sans">PixMarka © My Brand</text>
<text transform="translate(436.2,134.1) rotate(-17)" text-anchor="middle" dominant-baseline="middle" font-size="4.5" font-weight="bold" fill="#ffffff" fill-opacity="0.92" stroke="#ffffff" stroke-width="0.3" stroke-opacity="0.8" font-family="Liberation Sans">PixMarka © My Brand</text>
<text transform="translate(52.2,306.5) rotate(-17)" text-anchor="middle" dominant-baseline="middle" font-size="4.5" font-weight="bold" fill="#ffffff" fill-opacity="0.92" stroke="#ffffff" stroke-width="0.3" stroke-opacity="0.8" font-family="Liberation Sans">PixMarka © My Brand</text>
<text transform="translate(102.1,291.3) rotate(-17)" text-anchor="middle" dominant-baseline="middle" font-size="4.5" font-weight="bold" fill="#ffffff" fill-opacity="0.92" stroke="#ffffff" stroke-width="0.3" stroke-opacity="0.8" font-family="Liberation Sans">PixMarka © My Brand</text>
<text transform="translate(152.0,276.0) rotate(-17)" text-anchor="middle" dominant-baseline="middle" font-size="4.5" font-weight="bold" fill="#ffffff" fill-opacity="0.92" stroke="#ffffff" stroke-width="0.3" stroke-opacity="0.8" font-family="Liberation Sans">PixMarka © My Brand</text>
<text transform="translate(202.0,260.7) rotate(-17)" text-anchor="middle" dominant-baseline="middle" font-size="4.5" font-weight="bold" fill="#ffffff" fill-opacity="0.92" stroke="#ffffff" stroke-width="0.3" stroke-opacity="0.8" font-family="Liberation Sans">PixMarka © My Brand</text>
<text transform="translate(251.9,245.5) rotate(-17)" text-anchor="middle" dominant-baseline="middle" font-size="4.5" font-weight="bold" fill="#ffffff" fill-opacity="0.92" stroke="#ffffff" stroke-width="0.3" stroke-opacity="0.8" font-family="Liberation Sans">PixMarka © My Brand</text>
<text transform="translate(301.8,230.2) rotate(-17)" text-anchor="middle" dominant-baseline="middle" font-size="4.5" font-weight="bold" fill="#ffffff" fill-opacity="0.92" stroke="#ffffff" stroke-width="0.3" stroke-opacity="0.8" font-family="Liberation Sans">PixMarka © My Brand</text>
<text transform="translate(351.7,215.0) rotate(-17)" text-anchor="middle" dominant-baseline="middle" font-size="4.5" font-weight="bold" fill="#ffffff" fill-opacity="0.92" stroke="#ffffff" stroke-width="0.3" stroke-opacity="0.8" font-family="Liberation Sans">PixMarka © My Brand</text>
<text transform="translate(401.6,199.7) rotate(-17)" text-anchor="middle" dominant-baseline="middle" font-size="4.5" font-weight="bold" fill="#ffffff" fill-opacity="0.92" stroke="#ffffff" stroke-width="0.3" stroke-opacity="0.8" font-family="Liberation Sans">PixMarka © My Brand</text>
<text transform="translate(451.6,184.4) rotate(-17)" text-anchor="middle" dominant-baseline="middle" font-size="4.5" font-weight="bold" fill="#ffffff" fill-opacity="0.92" stroke="#ffffff" stroke-width="0.3" stroke-opacity="0.8" font-family="Liberation Sans">PixMarka © My Brand</text>
<text transform="translate(267.3,295.8) rotate(-17)" text-anchor="middle" dominant-baseline="middle" font-size="4.5" font-weight="bold" fill="#ffffff" fill-opacity="0.92" stroke="#ffffff" stroke-width="0.3" stroke-opacity="0.8" font-family="Liberation Sans">PixMarka © My Brand</text>
<text transform="translate(317.2,280.5) rotate(-17)" text-anchor="middle" dominant-baseline="middle" font-size="4.5" font-weight="bold" fill="#ffffff" fill-opacity="0.92" stroke="#ffffff" stroke-width="0.3" stroke-opacity="0.8" font-family="Liberation Sans">PixMarka © My Brand</text>
<text transform="translate(367.1,265.3) rotate(-17)" text-anchor="middle" dominant-baseline="middle" font-size="4.5" font-weight="bold" fill="#ffffff" fill-opacity="0.92" stroke="#ffffff" stroke-width="0.3" stroke-opacity="0.8" font-family="Liberation Sans">PixMarka © My Brand</text>
<text transform="translate(417.0,250.0) rotate(-17)" text-anchor="middle" dominant-baseline="middle" font-size="4.5" font-weight="bold" fill="#ffffff" fill-opacity="0.92" stroke="#ffffff" stroke-width="0.3" stroke-opacity="0.8" font-family="Liberation Sans">PixMarka © My Brand</text>
<text transform="translate(466.9,234.7) rotate(-17)" text-anchor="middle" dominant-baseline="middle" font-size="4.5" font-weight="bold" fill="#ffffff" fill-opacity="0.92" stroke="#ffffff" stroke-width="0.3" stroke-opacity="0.8" font-family="Liberation Sans">PixMarka © My Brand</text>
<text transform="translate(432.4,300.3) rotate(-17)" text-anchor="middle" dominant-baseline="middle" font-size="4.5" font-weight="bold" fill="#ffffff" fill-opacity="0.92" stroke="#ffffff" stroke-width="0.3" stroke-opacity="0.8" font-family="Liberation Sans">PixMarka © My Brand</text>
<use href="#pa" x="17.7" y="17.0" opacity="0.93"/>
<use href="#pa" x="62.8" y="17.0" opacity="0.93"/>
<use href="#pa" x="107.9" y="17.0" opacity="0.93"/>
<use href="#pa" x="153.0" y="17.0" opacity="0.93"/>
<use href="#pa" x="198.1" y="17.0" opacity="0.93"/>
<use href="#pa" x="243.2" y="17.0" opacity="0.93"/>
<use href="#pa" x="288.3" y="17.0" opacity="0.93"/>
<use href="#pa" x="333.4" y="17.0" opacity="0.93"/>
<use href="#pa" x="378.5" y="17.0" opacity="0.93"/>
<use href="#pa" x="423.6" y="17.0" opacity="0.93"/>
<use href="#pa" x="17.7" y="66.7" opacity="0.93"/>
<use href="#pa" x="62.8" y="66.7" opacity="0.93"/>
<use href="#pa" x="107.9" y="66.7" opacity="0.93"/>
<use href="#pa" x="153.0" y="66.7" opacity="0.93"/>
<use href="#pa" x="198.1" y="66.7" opacity="0.93"/>
<use href="#pa" x="243.2" y="66.7" opacity="0.93"/>
<use href="#pa" x="288.3" y="66.7" opacity="0.93"/>
<use href="#pa" x="333.4" y="66.7" opacity="0.93"/>
<use href="#pa" x="378.5" y="66.7" opacity="0.93"/>
<use href="#pa" x="423.6" y="66.7" opacity="0.93"/>
<use href="#pa" x="17.7" y="116.4" opacity="0.93"/>
<use href="#pa" x="62.8" y="116.4" opacity="0.93"/>
<use href="#pa" x="107.9" y="116.4" opacity="0.93"/>
<use href="#pa" x="153.0" y="116.4" opacity="0.93"/>
<use href="#pa" x="198.1" y="116.4" opacity="0.93"/>
<use href="#pa" x="243.2" y="116.4" opacity="0.93"/>
<use href="#pa" x="288.3" y="116.4" opacity="0.93"/>
<use href="#pa" x="333.4" y="116.4" opacity="0.93"/>
<use href="#pa" x="378.5" y="116.4" opacity="0.93"/>
<use href="#pa" x="423.6" y="116.4" opacity="0.93"/>
<use href="#pa" x="17.7" y="166.1" opacity="0.93"/>
<use href="#pa" x="62.8" y="166.1" opacity="0.93"/>
<use href="#pa" x="107.9" y="166.1" opacity="0.93"/>
<use href="#pa" x="153.0" y="166.1" opacity="0.93"/>
<use href="#pa" x="198.1" y="166.1" opacity="0.93"/>
<use href="#pa" x="243.2" y="166.1" opacity="0.93"/>
<use href="#pa" x="288.3" y="166.1" opacity="0.93"/>
<use href="#pa" x="333.4" y="166.1" opacity="0.93"/>
<use href="#pa" x="378.5" y="166.1" opacity="0.93"/>
<use href="#pa" x="423.6" y="166.1" opacity="0.93"/>
<use href="#pa" x="17.7" y="215.8" opacity="0.93"/>
<use href="#pa" x="62.8" y="215.8" opacity="0.93"/>
<use href="#pa" x="107.9" y="215.8" opacity="0.93"/>
<use href="#pa" x="153.0" y="215.8" opacity="0.93"/>
<use href="#pa" x="198.1" y="215.8" opacity="0.93"/>
<use href="#pa" x="243.2" y="215.8" opacity="0.93"/>
<use href="#pa" x="288.3" y="215.8" opacity="0.93"/>
<use href="#pa" x="333.4" y="215.8" opacity="0.93"/>
<use href="#pa" x="378.5" y="215.8" opacity="0.93"/>
<use href="#pa" x="423.6" y="215.8" opacity="0.93"/>
<use href="#pa" x="17.7" y="265.5" opacity="0.93"/>
<use href="#pa" x="62.8" y="265.5" opacity="0.93"/>
<use href="#pa" x="107.9" y="265.5" opacity="0.93"/>
<use href="#pa" x="153.0" y="265.5" opacity="0.93"/>
<use href="#pa" x="198.1" y="265.5" opacity="0.93"/>
<use href="#pa" x="243.2" y="265.5" opacity="0.93"/>
<use href="#pa" x="288.3" y="265.5" opacity="0.93"/>
<use href="#pa" x="333.4" y="265.5" opacity="0.93"/>
<use href="#pa" x="378.5" y="265.5" opacity="0.93"/>
<use href="#pa" x="423.6" y="265.5" opacity="0.93"/>
</g></g></svg><svg class="b" style="left:314px;top:418px" width="20" height="19" viewBox="0 0 20 19"><circle cx="8.2" cy="7.9" r="5.6" fill="none" stroke="#e0e0e0" stroke-width="1.5"/><line x1="12.3" y1="12" x2="16.6" y2="16.2" stroke="#e0e0e0" stroke-width="1.6" stroke-linecap="round"/></svg>
<div class="t" style="left:341.30px;top:420.17px;font-size:14.45px;line-height:14.45px;color:#e4e4e4;">Lupe aktivieren</div>
<div class="b" style="left:449.00px;top:414.20px;width:56.50px;height:24.80px;background:#2a2b2d;border-radius:12.5px;"></div>
<div class="b" style="left:450.60px;top:415.70px;width:34.40px;height:21.60px;background:#e2e2e2;border-radius:11px;"></div>
<svg class="b" style="left:337px;top:449px" width="14" height="11" viewBox="0 0 14 11"><rect x="0.9" y="0.9" width="12" height="9.4" rx="1" fill="none" stroke="#9c9c9c" stroke-width="1.1"/><circle cx="4.3" cy="3.8" r="1.1" fill="#9c9c9c"/><path d="M1.2 9.6 L5 6.4 L7.2 8 L9.6 5.4 L12.6 8.6 V10 H1.2Z" fill="#9c9c9c"/></svg>
<div class="t" style="left:360.40px;top:449.01px;font-size:11.8px;line-height:11.8px;color:#a3a3a3;">P1060546 (2880×1800)</div>
<div class="b" style="left:233.60px;top:478.00px;width:121.40px;height:25.20px;background:#2c2d2f;border-radius:6px;"></div>
<div class="b" style="left:364.30px;top:478.00px;width:224.50px;height:25.20px;background:#2c2d2f;border-radius:6px;"></div>
<div class="t" style="left:246.20px;top:484.18px;font-size:14.2px;line-height:14.2px;color:#e4e4e4;">Bild auswählen</div>
<div class="t" style="left:377.00px;top:483.88px;font-size:14.55px;line-height:14.55px;color:#e4e4e4;">Aus Vorschau-App importieren</div>
<div class="b" style="left:313.40px;top:514.10px;width:195.20px;height:25.40px;background:#2c2d2f;border-radius:6px;"></div>
<svg class="b" style="left:326px;top:518px" width="22" height="18" viewBox="0 0 22 18"><path d="M1.8 9 Q11 0.6 20.2 9 Q11 17.4 1.8 9 Z" fill="none" stroke="#dcdcdc" stroke-width="1.4"/><circle cx="11" cy="9" r="3.3" fill="none" stroke="#dcdcdc" stroke-width="1.4"/><line x1="4.6" y1="2.2" x2="17.4" y2="15.8" stroke="#dcdcdc" stroke-width="1.5"/></svg>
<div class="t" style="left:356.60px;top:520.07px;font-size:14.45px;line-height:14.45px;color:#e4e4e4;">Vorschau ausblenden</div>
<div class="b" style="left:103.00px;top:562.00px;width:616.00px;height:1.00px;background:#303235;border-radius:0px;"></div>
<div class="t" style="left:120.40px;top:576.38px;font-size:14.2px;line-height:14.2px;font-weight:700;color:#e6e6e6;">Bilder im Ordner:</div>
<div class="b" style="left:583.40px;top:577.00px;width:17px;height:17px;border-radius:5px;background:#45484c"></div>
<svg class="b" style="left:583.40px;top:577.00px" width="17" height="17" viewBox="0 0 17 17"><path d="M3.6 9.4 L7.2 13.2 L13.2 4.6" fill="none" stroke="#ffffff" stroke-width="2" stroke-linecap="round" stroke-linejoin="round"/></svg>
<div class="t" style="left:606.00px;top:579.02px;font-size:14.15px;line-height:14.15px;color:#e4e4e4;">Alle auswählen</div>
<div class="b" style="left:120px;top:605px;width:582px;height:310px;overflow:hidden">
<div class="b" style="left:0px;top:0.00px;width:582px;height:29px;border-radius:6px;background:#1d2836"></div>
<div class="b" style="left:8.50px;top:7.30px;width:17px;height:17px;border-radius:5px;background:#454b52"></div>
<svg class="b" style="left:8.50px;top:7.30px" width="17" height="17" viewBox="0 0 17 17"><path d="M3.6 9.4 L7.2 13.2 L13.2 4.6" fill="none" stroke="#ffffff" stroke-width="2" stroke-linecap="round" stroke-linejoin="round"/></svg>
<svg class="b" style="left:40.8px;top:8.60px" width="17" height="13" viewBox="0 0 17 13"><rect x="0.8" y="0.8" width="15.4" height="11.4" rx="1" fill="none" stroke="#a9abae" stroke-width="1.3"/><circle cx="5.1" cy="4.8" r="1.35" fill="#a9abae"/><path d="M1 12 V9.4 Q2.6 8 4.2 8.4 L5.6 9.2 L9.6 6 L16 10.2 V12 Z" fill="#a9abae"/></svg>
<div class="t" style="left:67.20px;top:8.12px;font-size:14.27px;line-height:14.27px;color:#108aff;">P1060004.JPG</div>
<div class="b" style="left:0px;top:33.17px;width:582px;height:29px;border-radius:6px;background:#1d2836"></div>
<div class="b" style="left:8.50px;top:40.47px;width:17px;height:17px;border-radius:5px;background:#454b52"></div>
<svg class="b" style="left:8.50px;top:40.47px" width="17" height="17" viewBox="0 0 17 17"><path d="M3.6 9.4 L7.2 13.2 L13.2 4.6" fill="none" stroke="#ffffff" stroke-width="2" stroke-linecap="round" stroke-linejoin="round"/></svg>
<svg class="b" style="left:40.8px;top:41.77px" width="17" height="13" viewBox="0 0 17 13"><rect x="0.8" y="0.8" width="15.4" height="11.4" rx="1" fill="none" stroke="#a9abae" stroke-width="1.3"/><circle cx="5.1" cy="4.8" r="1.35" fill="#a9abae"/><path d="M1 12 V9.4 Q2.6 8 4.2 8.4 L5.6 9.2 L9.6 6 L16 10.2 V12 Z" fill="#a9abae"/></svg>
<div class="t" style="left:67.20px;top:41.29px;font-size:14.27px;line-height:14.27px;color:#108aff;">P1060012.JPG</div>
<div class="b" style="left:0px;top:66.34px;width:582px;height:29px;border-radius:6px;background:#1d2836"></div>
<div class="b" style="left:8.50px;top:73.64px;width:17px;height:17px;border-radius:5px;background:#454b52"></div>
<svg class="b" style="left:8.50px;top:73.64px" width="17" height="17" viewBox="0 0 17 17"><path d="M3.6 9.4 L7.2 13.2 L13.2 4.6" fill="none" stroke="#ffffff" stroke-width="2" stroke-linecap="round" stroke-linejoin="round"/></svg>
<svg class="b" style="left:40.8px;top:74.94px" width="17" height="13" viewBox="0 0 17 13"><rect x="0.8" y="0.8" width="15.4" height="11.4" rx="1" fill="none" stroke="#a9abae" stroke-width="1.3"/><circle cx="5.1" cy="4.8" r="1.35" fill="#a9abae"/><path d="M1 12 V9.4 Q2.6 8 4.2 8.4 L5.6 9.2 L9.6 6 L16 10.2 V12 Z" fill="#a9abae"/></svg>
<div class="t" style="left:67.20px;top:74.46px;font-size:14.27px;line-height:14.27px;color:#108aff;">P1060013.JPG</div>
<div class="b" style="left:0px;top:99.51px;width:582px;height:29px;border-radius:6px;background:#1d2836"></div>
<div class="b" style="left:8.50px;top:106.81px;width:17px;height:17px;border-radius:5px;background:#454b52"></div>
<svg class="b" style="left:8.50px;top:106.81px" width="17" height="17" viewBox="0 0 17 17"><path d="M3.6 9.4 L7.2 13.2 L13.2 4.6" fill="none" stroke="#ffffff" stroke-width="2" stroke-linecap="round" stroke-linejoin="round"/></svg>
<svg class="b" style="left:40.8px;top:108.11px" width="17" height="13" viewBox="0 0 17 13"><rect x="0.8" y="0.8" width="15.4" height="11.4" rx="1" fill="none" stroke="#a9abae" stroke-width="1.3"/><circle cx="5.1" cy="4.8" r="1.35" fill="#a9abae"/><path d="M1 12 V9.4 Q2.6 8 4.2 8.4 L5.6 9.2 L9.6 6 L16 10.2 V12 Z" fill="#a9abae"/></svg>
<div class="t" style="left:67.20px;top:107.63px;font-size:14.27px;line-height:14.27px;color:#108aff;">P1060019.JPG</div>
<div class="b" style="left:0px;top:132.68px;width:582px;height:29px;border-radius:6px;background:#1d2836"></div>
<div class="b" style="left:8.50px;top:139.98px;width:17px;height:17px;border-radius:5px;background:#454b52"></div>
<svg class="b" style="left:8.50px;top:139.98px" width="17" height="17" viewBox="0 0 17 17"><path d="M3.6 9.4 L7.2 13.2 L13.2 4.6" fill="none" stroke="#ffffff" stroke-width="2" stroke-linecap="round" stroke-linejoin="round"/></svg>
<svg class="b" style="left:40.8px;top:141.28px" width="17" height="13" viewBox="0 0 17 13"><rect x="0.8" y="0.8" width="15.4" height="11.4" rx="1" fill="none" stroke="#a9abae" stroke-width="1.3"/><circle cx="5.1" cy="4.8" r="1.35" fill="#a9abae"/><path d="M1 12 V9.4 Q2.6 8 4.2 8.4 L5.6 9.2 L9.6 6 L16 10.2 V12 Z" fill="#a9abae"/></svg>
<div class="t" style="left:67.20px;top:140.80px;font-size:14.27px;line-height:14.27px;color:#108aff;">P1060026.JPG</div>
<div class="b" style="left:0px;top:165.85px;width:582px;height:29px;border-radius:6px;background:#1d2836"></div>
<div class="b" style="left:8.50px;top:173.15px;width:17px;height:17px;border-radius:5px;background:#454b52"></div>
<svg class="b" style="left:8.50px;top:173.15px" width="17" height="17" viewBox="0 0 17 17"><path d="M3.6 9.4 L7.2 13.2 L13.2 4.6" fill="none" stroke="#ffffff" stroke-width="2" stroke-linecap="round" stroke-linejoin="round"/></svg>
<svg class="b" style="left:40.8px;top:174.45px" width="17" height="13" viewBox="0 0 17 13"><rect x="0.8" y="0.8" width="15.4" height="11.4" rx="1" fill="none" stroke="#a9abae" stroke-width="1.3"/><circle cx="5.1" cy="4.8" r="1.35" fill="#a9abae"/><path d="M1 12 V9.4 Q2.6 8 4.2 8.4 L5.6 9.2 L9.6 6 L16 10.2 V12 Z" fill="#a9abae"/></svg>
<div class="t" style="left:67.20px;top:173.97px;font-size:14.27px;line-height:14.27px;color:#108aff;">P1060097.JPG</div>
<div class="b" style="left:0px;top:199.02px;width:582px;height:29px;border-radius:6px;background:#1d2836"></div>
<div class="b" style="left:8.50px;top:206.32px;width:17px;height:17px;border-radius:5px;background:#454b52"></div>
<svg class="b" style="left:8.50px;top:206.32px" width="17" height="17" viewBox="0 0 17 17"><path d="M3.6 9.4 L7.2 13.2 L13.2 4.6" fill="none" stroke="#ffffff" stroke-width="2" stroke-linecap="round" stroke-linejoin="round"/></svg>
<svg class="b" style="left:40.8px;top:207.62px" width="17" height="13" viewBox="0 0 17 13"><rect x="0.8" y="0.8" width="15.4" height="11.4" rx="1" fill="none" stroke="#a9abae" stroke-width="1.3"/><circle cx="5.1" cy="4.8" r="1.35" fill="#a9abae"/><path d="M1 12 V9.4 Q2.6 8 4.2 8.4 L5.6 9.2 L9.6 6 L16 10.2 V12 Z" fill="#a9abae"/></svg>
<div class="t" style="left:67.20px;top:207.14px;font-size:14.27px;line-height:14.27px;color:#108aff;">P1060098.JPG</div>
<div class="b" style="left:0px;top:232.19px;width:582px;height:29px;border-radius:6px;background:#1d2836"></div>
<div class="b" style="left:8.50px;top:239.49px;width:17px;height:17px;border-radius:5px;background:#454b52"></div>
<svg class="b" style="left:8.50px;top:239.49px" width="17" height="17" viewBox="0 0 17 17"><path d="M3.6 9.4 L7.2 13.2 L13.2 4.6" fill="none" stroke="#ffffff" stroke-width="2" stroke-linecap="round" stroke-linejoin="round"/></svg>
<svg class="b" style="left:40.8px;top:240.79px" width="17" height="13" viewBox="0 0 17 13"><rect x="0.8" y="0.8" width="15.4" height="11.4" rx="1" fill="none" stroke="#a9abae" stroke-width="1.3"/><circle cx="5.1" cy="4.8" r="1.35" fill="#a9abae"/><path d="M1 12 V9.4 Q2.6 8 4.2 8.4 L5.6 9.2 L9.6 6 L16 10.2 V12 Z" fill="#a9abae"/></svg>
<div class="t" style="left:67.20px;top:240.31px;font-size:14.27px;line-height:14.27px;color:#108aff;">P1060110.JPG</div>
<div class="b" style="left:0px;top:265.36px;width:582px;height:29px;border-radius:6px;background:#1d2836"></div>
<div class="b" style="left:8.50px;top:272.66px;width:17px;height:17px;border-radius:5px;background:#454b52"></div>
<svg class="b" style="left:8.50px;top:272.66px" width="17" height="17" viewBox="0 0 17 17"><path d="M3.6 9.4 L7.2 13.2 L13.2 4.6" fill="none" stroke="#ffffff" stroke-width="2" stroke-linecap="round" stroke-linejoin="round"/></svg>
<svg class="b" style="left:40.8px;top:273.96px" width="17" height="13" viewBox="0 0 17 13"><rect x="0.8" y="0.8" width="15.4" height="11.4" rx="1" fill="none" stroke="#a9abae" stroke-width="1.3"/><circle cx="5.1" cy="4.8" r="1.35" fill="#a9abae"/><path d="M1 12 V9.4 Q2.6 8 4.2 8.4 L5.6 9.2 L9.6 6 L16 10.2 V12 Z" fill="#a9abae"/></svg>
<div class="t" style="left:67.20px;top:273.48px;font-size:14.27px;line-height:14.27px;color:#108aff;">P1060111.JPG</div>
<div class="b" style="left:0px;top:298.53px;width:582px;height:29px;border-radius:6px;background:#1d2836"></div>
<div class="b" style="left:8.50px;top:305.83px;width:17px;height:17px;border-radius:5px;background:#454b52"></div>
<svg class="b" style="left:8.50px;top:305.83px" width="17" height="17" viewBox="0 0 17 17"><path d="M3.6 9.4 L7.2 13.2 L13.2 4.6" fill="none" stroke="#ffffff" stroke-width="2" stroke-linecap="round" stroke-linejoin="round"/></svg>
<svg class="b" style="left:40.8px;top:307.13px" width="17" height="13" viewBox="0 0 17 13"><rect x="0.8" y="0.8" width="15.4" height="11.4" rx="1" fill="none" stroke="#a9abae" stroke-width="1.3"/><circle cx="5.1" cy="4.8" r="1.35" fill="#a9abae"/><path d="M1 12 V9.4 Q2.6 8 4.2 8.4 L5.6 9.2 L9.6 6 L16 10.2 V12 Z" fill="#a9abae"/></svg>
<div class="t" style="left:67.20px;top:306.65px;font-size:14.27px;line-height:14.27px;color:#108aff;">P1060112.JPG</div>
</div>
<div class="t" style="left:359.70px;top:930.05px;font-size:11.76px;line-height:11.76px;color:#a6a6a6;">22 von 22 selektiert</div>
<div class="t" style="left:1166.50px;top:187.28px;font-size:14.2px;line-height:14.2px;font-weight:700;color:#ececec;">Vorschau</div>
<svg class="b" style="left:975.5px;top:211px;border-radius:8px;overflow:hidden" width="446.5" height="278.5" viewBox="0 0 446.5 278.5">
<defs><clipPath id="rclip"><rect x="0" y="0" width="446.5" height="278.5" rx="8"/></clipPath>
<filter id="rblur" x="-5%" y="-5%" width="110%" height="110%"><feGaussianBlur stdDeviation="0.6"/></filter>
<g id="daisy"><ellipse cx="0" cy="-6" rx="2.1" ry="5.2" transform="rotate(0.0)" fill="#f6d500"/><ellipse cx="0" cy="-6" rx="2.1" ry="5.2" transform="rotate(27.7)" fill="#f6d500"/><ellipse cx="0" cy="-6" rx="2.1" ry="5.2" transform="rotate(55.4)" fill="#f6d500"/><ellipse cx="0" cy="-6" rx="2.1" ry="5.2" transform="rotate(83.1)" fill="#f6d500"/><ellipse cx="0" cy="-6" rx="2.1" ry="5.2" transform="rotate(110.8)" fill="#f6d500"/><ellipse cx="0" cy="-6" rx="2.1" ry="5.2" transform="rotate(138.5)" fill="#f6d500"/><ellipse cx="0" cy="-6" rx="2.1" ry="5.2" transform="rotate(166.2)" fill="#f6d500"/><ellipse cx="0" cy="-6" rx="2.1" ry="5.2" transform="rotate(193.8)" fill="#f6d500"/><ellipse cx="0" cy="-6" rx="2.1" ry="5.2" transform="rotate(221.5)" fill="#f6d500"/><ellipse cx="0" cy="-6" rx="2.1" ry="5.2" transform="rotate(249.2)" fill="#f6d500"/><ellipse cx="0" cy="-6" rx="2.1" ry="5.2" transform="rotate(276.9)" fill="#f6d500"/><ellipse cx="0" cy="-6" rx="2.1" ry="5.2" transform="rotate(304.6)" fill="#f6d500"/><ellipse cx="0" cy="-6" rx="2.1" ry="5.2" transform="rotate(332.3)" fill="#f6d500"/><circle r="4.6" fill="#e8c300"/><circle r="2.9" fill="#8f9a1a"/></g>
</defs>
<g clip-path="url(#rclip)"><g filter="url(#rblur)">
<rect x="-5" y="-5" width="460" height="290" fill="#2c5222"/>
<ellipse cx="255.1" cy="151.9" rx="17.1" ry="4.2" transform="rotate(26 255.1 151.9)" fill="#1e3816"/>
<ellipse cx="188.2" cy="197.3" rx="17.5" ry="6.7" transform="rotate(141 188.2 197.3)" fill="#2a5a22"/>
<ellipse cx="264.3" cy="16.4" rx="17.5" ry="3.9" transform="rotate(46 264.3 16.4)" fill="#4b873b"/>
<ellipse cx="221.5" cy="186.4" rx="14.3" ry="5.3" transform="rotate(57 221.5 186.4)" fill="#35692b"/>
<ellipse cx="159.8" cy="54.5" rx="19.6" ry="3.2" transform="rotate(88 159.8 54.5)" fill="#2a5a22"/>
<ellipse cx="269.9" cy="30.1" rx="16.4" ry="5.6" transform="rotate(177 269.9 30.1)" fill="#3f7a33"/>
<ellipse cx="102.1" cy="255.2" rx="8.0" ry="5.0" transform="rotate(54 102.1 255.2)" fill="#35692b"/>
<ellipse cx="426.0" cy="279.5" rx="15.5" ry="6.6" transform="rotate(176 426.0 279.5)" fill="#17290f"/>
<ellipse cx="97.1" cy="65.5" rx="13.7" ry="4.2" transform="rotate(83 97.1 65.5)" fill="#4b873b"/>
<ellipse cx="159.6" cy="90.4" rx="19.7" ry="6.1" transform="rotate(7 159.6 90.4)" fill="#35692b"/>
<ellipse cx="262.7" cy="286.4" rx="16.3" ry="5.8" transform="rotate(164 262.7 286.4)" fill="#17290f"/>
<ellipse cx="420.5" cy="42.8" rx="18.0" ry="7.7" transform="rotate(38 420.5 42.8)" fill="#35692b"/>
<ellipse cx="354.1" cy="54.2" rx="10.9" ry="3.9" transform="rotate(99 354.1 54.2)" fill="#4b873b"/>
<ellipse cx="213.8" cy="109.3" rx="14.3" ry="6.8" transform="rotate(85 213.8 109.3)" fill="#35692b"/>
<ellipse cx="452.9" cy="192.4" rx="18.1" ry="4.0" transform="rotate(69 452.9 192.4)" fill="#3f7a33"/>
<ellipse cx="12.0" cy="72.4" rx="19.3" ry="6.1" transform="rotate(93 12.0 72.4)" fill="#5a9045"/>
<ellipse cx="112.2" cy="107.1" rx="18.9" ry="6.6" transform="rotate(48 112.2 107.1)" fill="#1e3816"/>
<ellipse cx="16.7" cy="207.0" rx="16.9" ry="3.7" transform="rotate(43 16.7 207.0)" fill="#2a5a22"/>
<ellipse cx="412.7" cy="-3.9" rx="10.5" ry="4.9" transform="rotate(15 412.7 -3.9)" fill="#35692b"/>
<ellipse cx="141.6" cy="219.7" rx="13.3" ry="3.3" transform="rotate(71 141.6 219.7)" fill="#4b873b"/>
<ellipse cx="217.6" cy="45.9" rx="13.2" ry="3.6" transform="rotate(38 217.6 45.9)" fill="#35692b"/>
<ellipse cx="187.6" cy="152.1" rx="7.9" ry="6.5" transform="rotate(47 187.6 152.1)" fill="#5a9045"/>
<ellipse cx="200.5" cy="102.3" rx="18.3" ry="7.2" transform="rotate(96 200.5 102.3)" fill="#35692b"/>
<ellipse cx="178.9" cy="105.2" rx="18.1" ry="4.1" transform="rotate(53 178.9 105.2)" fill="#1e3816"/>
<ellipse cx="274.9" cy="31.8" rx="17.9" ry="6.7" transform="rotate(87 274.9 31.8)" fill="#3f7a33"/>
<ellipse cx="366.9" cy="280.7" rx="10.2" ry="6.4" transform="rotate(165 366.9 280.7)" fill="#4b873b"/>
<ellipse cx="250.1" cy="95.3" rx="7.7" ry="6.9" transform="rotate(67 250.1 95.3)" fill="#2a5a22"/>
<ellipse cx="284.8" cy="16.8" rx="12.0" ry="5.0" transform="rotate(11 284.8 16.8)" fill="#35692b"/>
<ellipse cx="423.7" cy="74.8" rx="15.8" ry="4.1" transform="rotate(167 423.7 74.8)" fill="#4b873b"/>
<ellipse cx="211.5" cy="39.7" rx="15.3" ry="4.2" transform="rotate(17 211.5 39.7)" fill="#1e3816"/>
<ellipse cx="412.9" cy="229.6" rx="12.7" ry="4.3" transform="rotate(154 412.9 229.6)" fill="#1e3816"/>
<ellipse cx="316.3" cy="-3.1" rx="11.5" ry="4.8" transform="rotate(11 316.3 -3.1)" fill="#35692b"/>
<ellipse cx="116.8" cy="102.4" rx="17.9" ry="4.5" transform="rotate(129 116.8 102.4)" fill="#1e3816"/>
<ellipse cx="23.7" cy="0.5" rx="10.5" ry="4.9" transform="rotate(54 23.7 0.5)" fill="#2a5a22"/>
<ellipse cx="301.3" cy="45.4" rx="12.6" ry="6.1" transform="rotate(172 301.3 45.4)" fill="#1e3816"/>
<ellipse cx="4.5" cy="200.8" rx="9.0" ry="3.4" transform="rotate(9 4.5 200.8)" fill="#17290f"/>
<ellipse cx="181.5" cy="113.8" rx="9.9" ry="7.1" transform="rotate(158 181.5 113.8)" fill="#35692b"/>
<ellipse cx="440.3" cy="104.7" rx="17.3" ry="6.4" transform="rotate(49 440.3 104.7)" fill="#35692b"/>
<ellipse cx="157.9" cy="281.1" rx="8.1" ry="4.0" transform="rotate(41 157.9 281.1)" fill="#5a9045"/>
<ellipse cx="92.5" cy="145.1" rx="19.0" ry="7.9" transform="rotate(1 92.5 145.1)" fill="#17290f"/>
<ellipse cx="220.0" cy="183.8" rx="13.7" ry="6.1" transform="rotate(101 220.0 183.8)" fill="#2a5a22"/>
<ellipse cx="312.1" cy="227.4" rx="9.7" ry="3.5" transform="rotate(3 312.1 227.4)" fill="#2a5a22"/>
<ellipse cx="323.6" cy="197.2" rx="15.6" ry="7.8" transform="rotate(148 323.6 197.2)" fill="#4b873b"/>
<ellipse cx="145.2" cy="195.4" rx="17.3" ry="4.5" transform="rotate(75 145.2 195.4)" fill="#1e3816"/>
<ellipse cx="339.0" cy="149.1" rx="9.3" ry="4.2" transform="rotate(58 339.0 149.1)" fill="#4b873b"/>
<ellipse cx="417.5" cy="209.8" rx="18.3" ry="7.9" transform="rotate(147 417.5 209.8)" fill="#5a9045"/>
<ellipse cx="134.5" cy="243.0" rx="13.2" ry="6.4" transform="rotate(7 134.5 243.0)" fill="#17290f"/>
<ellipse cx="393.7" cy="249.2" rx="6.7" ry="4.3" transform="rotate(91 393.7 249.2)" fill="#2a5a22"/>
<ellipse cx="313.3" cy="65.4" rx="14.9" ry="4.8" transform="rotate(123 313.3 65.4)" fill="#4b873b"/>
<ellipse cx="145.6" cy="216.3" rx="17.8" ry="7.1" transform="rotate(102 145.6 216.3)" fill="#35692b"/>
<ellipse cx="288.8" cy="27.4" rx="16.4" ry="4.3" transform="rotate(29 288.8 27.4)" fill="#4b873b"/>
<ellipse cx="165.7" cy="189.5" rx="9.2" ry="3.9" transform="rotate(2 165.7 189.5)" fill="#17290f"/>
<ellipse cx="313.3" cy="225.6" rx="19.0" ry="4.3" transform="rotate(49 313.3 225.6)" fill="#1e3816"/>
<ellipse cx="284.3" cy="108.2" rx="19.1" ry="7.9" transform="rotate(9 284.3 108.2)" fill="#5a9045"/>
<ellipse cx="454.8" cy="249.5" rx="8.7" ry="4.8" transform="rotate(97 454.8 249.5)" fill="#2a5a22"/>
<ellipse cx="46.0" cy="88.4" rx="6.4" ry="5.7" transform="rotate(87 46.0 88.4)" fill="#1e3816"/>
<ellipse cx="21.4" cy="120.8" rx="18.2" ry="6.2" transform="rotate(40 21.4 120.8)" fill="#5a9045"/>
<ellipse cx="277.9" cy="218.1" rx="19.7" ry="4.9" transform="rotate(125 277.9 218.1)" fill="#17290f"/>
<ellipse cx="121.7" cy="248.3" rx="12.2" ry="7.2" transform="rotate(100 121.7 248.3)" fill="#1e3816"/>
<ellipse cx="400.3" cy="118.9" rx="8.1" ry="7.4" transform="rotate(49 400.3 118.9)" fill="#17290f"/>
<ellipse cx="56.9" cy="176.3" rx="9.8" ry="4.1" transform="rotate(87 56.9 176.3)" fill="#1e3816"/>
<ellipse cx="247.0" cy="156.6" rx="8.1" ry="3.0" transform="rotate(137 247.0 156.6)" fill="#5a9045"/>
<ellipse cx="26.5" cy="44.4" rx="12.8" ry="8.0" transform="rotate(36 26.5 44.4)" fill="#2a5a22"/>
<ellipse cx="180.4" cy="-0.4" rx="10.9" ry="5.8" transform="rotate(100 180.4 -0.4)" fill="#4b873b"/>
<ellipse cx="246.6" cy="185.8" rx="14.7" ry="4.4" transform="rotate(169 246.6 185.8)" fill="#2a5a22"/>
<ellipse cx="106.3" cy="229.9" rx="14.0" ry="7.7" transform="rotate(8 106.3 229.9)" fill="#2a5a22"/>
<ellipse cx="2.5" cy="40.3" rx="7.7" ry="3.4" transform="rotate(65 2.5 40.3)" fill="#2a5a22"/>
<ellipse cx="249.0" cy="8.8" rx="12.5" ry="7.4" transform="rotate(11 249.0 8.8)" fill="#1e3816"/>
<ellipse cx="-4.9" cy="147.1" rx="17.3" ry="7.0" transform="rotate(132 -4.9 147.1)" fill="#35692b"/>
<ellipse cx="133.5" cy="148.3" rx="15.3" ry="7.0" transform="rotate(138 133.5 148.3)" fill="#35692b"/>
<ellipse cx="177.5" cy="200.2" rx="9.5" ry="7.5" transform="rotate(4 177.5 200.2)" fill="#17290f"/>
<ellipse cx="55.6" cy="86.4" rx="16.1" ry="5.5" transform="rotate(50 55.6 86.4)" fill="#1e3816"/>
<ellipse cx="282.1" cy="124.0" rx="10.4" ry="3.3" transform="rotate(118 282.1 124.0)" fill="#17290f"/>
<ellipse cx="33.9" cy="89.8" rx="16.4" ry="4.1" transform="rotate(134 33.9 89.8)" fill="#17290f"/>
<ellipse cx="131.9" cy="51.4" rx="10.9" ry="3.8" transform="rotate(67 131.9 51.4)" fill="#4b873b"/>
<ellipse cx="190.7" cy="-7.2" rx="13.0" ry="5.0" transform="rotate(58 190.7 -7.2)" fill="#17290f"/>
<ellipse cx="381.4" cy="216.9" rx="6.3" ry="3.9" transform="rotate(12 381.4 216.9)" fill="#17290f"/>
<ellipse cx="40.5" cy="284.3" rx="12.0" ry="7.8" transform="rotate(40 40.5 284.3)" fill="#35692b"/>
<ellipse cx="353.7" cy="254.6" rx="17.4" ry="3.3" transform="rotate(70 353.7 254.6)" fill="#1e3816"/>
<ellipse cx="400.8" cy="221.7" rx="13.4" ry="3.1" transform="rotate(131 400.8 221.7)" fill="#5a9045"/>
<ellipse cx="166.2" cy="181.9" rx="9.0" ry="6.1" transform="rotate(160 166.2 181.9)" fill="#2a5a22"/>
<ellipse cx="323.0" cy="116.3" rx="19.6" ry="7.6" transform="rotate(22 323.0 116.3)" fill="#5a9045"/>
<ellipse cx="311.5" cy="125.1" rx="15.3" ry="5.1" transform="rotate(69 311.5 125.1)" fill="#4b873b"/>
<ellipse cx="165.0" cy="151.3" rx="6.6" ry="7.6" transform="rotate(95 165.0 151.3)" fill="#35692b"/>
<ellipse cx="198.2" cy="166.8" rx="14.3" ry="7.7" transform="rotate(27 198.2 166.8)" fill="#35692b"/>
<ellipse cx="142.9" cy="66.3" rx="14.7" ry="3.9" transform="rotate(84 142.9 66.3)" fill="#17290f"/>
<ellipse cx="177.4" cy="248.5" rx="7.8" ry="8.0" transform="rotate(88 177.4 248.5)" fill="#4b873b"/>
<ellipse cx="77.1" cy="265.3" rx="17.1" ry="3.7" transform="rotate(21 77.1 265.3)" fill="#3f7a33"/>
<ellipse cx="228.4" cy="286.1" rx="6.9" ry="7.4" transform="rotate(128 228.4 286.1)" fill="#1e3816"/>
<ellipse cx="231.2" cy="93.9" rx="8.9" ry="3.1" transform="rotate(77 231.2 93.9)" fill="#35692b"/>
<ellipse cx="120.3" cy="181.8" rx="7.0" ry="5.8" transform="rotate(142 120.3 181.8)" fill="#35692b"/>
<ellipse cx="398.6" cy="11.5" rx="13.0" ry="3.3" transform="rotate(157 398.6 11.5)" fill="#3f7a33"/>
<ellipse cx="361.3" cy="35.2" rx="11.1" ry="3.5" transform="rotate(7 361.3 35.2)" fill="#1e3816"/>
<ellipse cx="435.2" cy="55.4" rx="10.0" ry="5.1" transform="rotate(111 435.2 55.4)" fill="#3f7a33"/>
<ellipse cx="385.7" cy="173.9" rx="18.6" ry="3.4" transform="rotate(178 385.7 173.9)" fill="#4b873b"/>
<ellipse cx="238.0" cy="84.3" rx="19.4" ry="7.9" transform="rotate(101 238.0 84.3)" fill="#35692b"/>
<ellipse cx="166.2" cy="233.3" rx="15.8" ry="7.2" transform="rotate(170 166.2 233.3)" fill="#5a9045"/>
<ellipse cx="271.0" cy="197.1" rx="8.5" ry="3.6" transform="rotate(125 271.0 197.1)" fill="#35692b"/>
<ellipse cx="9.3" cy="72.9" rx="9.6" ry="4.7" transform="rotate(112 9.3 72.9)" fill="#1e3816"/>
<ellipse cx="81.4" cy="286.5" rx="15.7" ry="6.7" transform="rotate(65 81.4 286.5)" fill="#1e3816"/>
<ellipse cx="348.7" cy="49.7" rx="7.0" ry="4.3" transform="rotate(67 348.7 49.7)" fill="#17290f"/>
<ellipse cx="180.6" cy="126.1" rx="13.1" ry="7.7" transform="rotate(62 180.6 126.1)" fill="#5a9045"/>
<ellipse cx="184.7" cy="136.8" rx="7.6" ry="3.6" transform="rotate(158 184.7 136.8)" fill="#2a5a22"/>
<ellipse cx="26.4" cy="183.2" rx="9.2" ry="5.4" transform="rotate(36 26.4 183.2)" fill="#35692b"/>
<ellipse cx="270.2" cy="123.6" rx="6.9" ry="5.1" transform="rotate(51 270.2 123.6)" fill="#35692b"/>
<ellipse cx="296.9" cy="69.8" rx="15.3" ry="3.1" transform="rotate(110 296.9 69.8)" fill="#3f7a33"/>
<ellipse cx="181.8" cy="29.4" rx="18.5" ry="4.3" transform="rotate(76 181.8 29.4)" fill="#1e3816"/>
<ellipse cx="37.6" cy="252.3" rx="16.8" ry="3.5" transform="rotate(118 37.6 252.3)" fill="#35692b"/>
<ellipse cx="407.8" cy="16.3" rx="11.1" ry="4.9" transform="rotate(130 407.8 16.3)" fill="#5a9045"/>
<ellipse cx="314.9" cy="285.0" rx="17.4" ry="7.4" transform="rotate(120 314.9 285.0)" fill="#4b873b"/>
<ellipse cx="208.6" cy="97.8" rx="12.5" ry="4.6" transform="rotate(121 208.6 97.8)" fill="#17290f"/>
<ellipse cx="18.4" cy="56.2" rx="6.3" ry="6.9" transform="rotate(78 18.4 56.2)" fill="#4b873b"/>
<ellipse cx="292.9" cy="198.9" rx="20.0" ry="3.3" transform="rotate(83 292.9 198.9)" fill="#35692b"/>
<ellipse cx="358.3" cy="267.8" rx="13.2" ry="5.9" transform="rotate(90 358.3 267.8)" fill="#2a5a22"/>
<ellipse cx="56.6" cy="107.6" rx="16.4" ry="3.4" transform="rotate(30 56.6 107.6)" fill="#5a9045"/>
<ellipse cx="314.3" cy="224.3" rx="18.7" ry="6.3" transform="rotate(175 314.3 224.3)" fill="#35692b"/>
<ellipse cx="351.6" cy="25.7" rx="12.6" ry="3.1" transform="rotate(155 351.6 25.7)" fill="#2a5a22"/>
<ellipse cx="407.5" cy="-2.8" rx="10.9" ry="5.7" transform="rotate(96 407.5 -2.8)" fill="#3f7a33"/>
<ellipse cx="351.7" cy="18.1" rx="20.0" ry="5.8" transform="rotate(12 351.7 18.1)" fill="#4b873b"/>
<ellipse cx="50.4" cy="16.3" rx="13.2" ry="4.5" transform="rotate(140 50.4 16.3)" fill="#4b873b"/>
<ellipse cx="265.3" cy="129.0" rx="19.9" ry="5.9" transform="rotate(31 265.3 129.0)" fill="#3f7a33"/>
<ellipse cx="204.1" cy="243.5" rx="7.5" ry="7.3" transform="rotate(28 204.1 243.5)" fill="#17290f"/>
<ellipse cx="234.6" cy="111.1" rx="14.6" ry="7.3" transform="rotate(173 234.6 111.1)" fill="#35692b"/>
<ellipse cx="373.2" cy="58.2" rx="17.2" ry="3.5" transform="rotate(133 373.2 58.2)" fill="#35692b"/>
<ellipse cx="63.0" cy="148.3" rx="6.4" ry="3.6" transform="rotate(54 63.0 148.3)" fill="#17290f"/>
<ellipse cx="289.7" cy="242.6" rx="6.6" ry="5.1" transform="rotate(14 289.7 242.6)" fill="#1e3816"/>
<ellipse cx="240.1" cy="185.8" rx="11.9" ry="7.5" transform="rotate(37 240.1 185.8)" fill="#17290f"/>
<ellipse cx="431.0" cy="159.2" rx="13.0" ry="7.5" transform="rotate(71 431.0 159.2)" fill="#1e3816"/>
<ellipse cx="114.6" cy="168.7" rx="9.1" ry="3.4" transform="rotate(143 114.6 168.7)" fill="#35692b"/>
<ellipse cx="157.1" cy="118.3" rx="12.3" ry="3.2" transform="rotate(150 157.1 118.3)" fill="#3f7a33"/>
<ellipse cx="66.1" cy="103.9" rx="10.5" ry="7.1" transform="rotate(122 66.1 103.9)" fill="#5a9045"/>
<ellipse cx="163.3" cy="83.7" rx="12.8" ry="4.2" transform="rotate(135 163.3 83.7)" fill="#35692b"/>
<ellipse cx="331.6" cy="101.3" rx="14.3" ry="3.5" transform="rotate(124 331.6 101.3)" fill="#1e3816"/>
<ellipse cx="437.7" cy="99.0" rx="14.4" ry="4.8" transform="rotate(54 437.7 99.0)" fill="#17290f"/>
<ellipse cx="345.4" cy="6.7" rx="8.6" ry="3.6" transform="rotate(137 345.4 6.7)" fill="#1e3816"/>
<ellipse cx="14.7" cy="17.7" rx="9.5" ry="4.4" transform="rotate(143 14.7 17.7)" fill="#35692b"/>
<ellipse cx="291.6" cy="101.3" rx="7.3" ry="5.9" transform="rotate(18 291.6 101.3)" fill="#35692b"/>
<ellipse cx="448.6" cy="237.8" rx="10.6" ry="4.6" transform="rotate(147 448.6 237.8)" fill="#2a5a22"/>
<ellipse cx="123.0" cy="74.1" rx="20.0" ry="5.5" transform="rotate(71 123.0 74.1)" fill="#3f7a33"/>
<ellipse cx="247.3" cy="266.3" rx="14.9" ry="3.1" transform="rotate(168 247.3 266.3)" fill="#2a5a22"/>
<use href="#daisy" transform="translate(26.7,-8.0) rotate(242) scale(1.33)"/>
<use href="#daisy" transform="translate(53.5,-9.9) rotate(129) scale(1.25)"/>
<use href="#daisy" transform="translate(66.0,-2.9) rotate(233) scale(1.29)"/>
<use href="#daisy" transform="translate(119.7,-0.5) rotate(133) scale(1.30)"/>
<use href="#daisy" transform="translate(140.0,-3.6) rotate(336) scale(1.25)"/>
<use href="#daisy" transform="translate(175.4,-8.1) rotate(50) scale(1.34)"/>
<use href="#daisy" transform="translate(444.5,-2.7) rotate(244) scale(1.26)"/>
<use href="#daisy" transform="translate(-4.1,11.2) rotate(92) scale(1.02)"/>
<use href="#daisy" transform="translate(21.9,16.6) rotate(92) scale(1.09)"/>
<use href="#daisy" transform="translate(34.0,17.9) rotate(164) scale(1.07)"/>
<use href="#daisy" transform="translate(58.8,13.4) rotate(301) scale(1.04)"/>
<use href="#daisy" transform="translate(77.6,14.4) rotate(339) scale(1.18)"/>
<use href="#daisy" transform="translate(99.1,18.9) rotate(21) scale(1.06)"/>
<use href="#daisy" transform="translate(125.9,12.9) rotate(233) scale(1.35)"/>
<use href="#daisy" transform="translate(146.0,10.6) rotate(171) scale(1.06)"/>
<use href="#daisy" transform="translate(189.8,9.0) rotate(36) scale(1.06)"/>
<use href="#daisy" transform="translate(296.5,11.3) rotate(211) scale(1.32)"/>
<use href="#daisy" transform="translate(434.6,8.6) rotate(307) scale(1.29)"/>
<use href="#daisy" transform="translate(52.9,33.8) rotate(58) scale(1.17)"/>
<use href="#daisy" transform="translate(73.6,30.1) rotate(125) scale(1.23)"/>
<use href="#daisy" transform="translate(109.1,32.6) rotate(34) scale(1.34)"/>
<use href="#daisy" transform="translate(140.4,29.6) rotate(252) scale(1.34)"/>
<use href="#daisy" transform="translate(165.5,28.3) rotate(310) scale(1.13)"/>
<use href="#daisy" transform="translate(176.0,37.4) rotate(331) scale(1.05)"/>
<use href="#daisy" transform="translate(319.0,36.6) rotate(134) scale(1.05)"/>
<use href="#daisy" transform="translate(330.7,34.3) rotate(234) scale(1.34)"/>
<use href="#daisy" transform="translate(65.8,46.3) rotate(134) scale(1.11)"/>
<use href="#daisy" transform="translate(88.8,50.0) rotate(153) scale(1.07)"/>
<use href="#daisy" transform="translate(128.4,46.0) rotate(230) scale(1.35)"/>
<use href="#daisy" transform="translate(144.0,49.7) rotate(87) scale(1.13)"/>
<use href="#daisy" transform="translate(188.4,45.6) rotate(19) scale(1.26)"/>
<use href="#daisy" transform="translate(100.0,69.0) rotate(194) scale(1.08)"/>
<use href="#daisy" transform="translate(137.9,75.3) rotate(118) scale(1.35)"/>
<use href="#daisy" transform="translate(164.8,64.6) rotate(160) scale(1.35)"/>
<use href="#daisy" transform="translate(179.9,65.9) rotate(103) scale(1.06)"/>
<use href="#daisy" transform="translate(202.9,66.7) rotate(153) scale(1.05)"/>
<use href="#daisy" transform="translate(105.9,84.3) rotate(76) scale(1.32)"/>
<use href="#daisy" transform="translate(147.8,83.5) rotate(159) scale(1.17)"/>
<use href="#daisy" transform="translate(172.5,88.3) rotate(307) scale(1.20)"/>
<use href="#daisy" transform="translate(188.9,83.5) rotate(174) scale(1.30)"/>
<use href="#daisy" transform="translate(51.2,107.6) rotate(328) scale(1.33)"/>
<use href="#daisy" transform="translate(74.7,113.2) rotate(56) scale(1.20)"/>
<use href="#daisy" transform="translate(91.7,110.4) rotate(96) scale(1.23)"/>
<use href="#daisy" transform="translate(116.9,102.0) rotate(194) scale(1.04)"/>
<use href="#daisy" transform="translate(140.4,111.6) rotate(129) scale(1.25)"/>
<use href="#daisy" transform="translate(161.3,106.8) rotate(132) scale(1.31)"/>
<use href="#daisy" transform="translate(182.0,102.7) rotate(35) scale(1.23)"/>
<use href="#daisy" transform="translate(196.9,103.7) rotate(345) scale(1.20)"/>
<use href="#daisy" transform="translate(-9.5,129.8) rotate(262) scale(1.11)"/>
<use href="#daisy" transform="translate(21.3,122.4) rotate(27) scale(1.26)"/>
<use href="#daisy" transform="translate(62.2,126.7) rotate(219) scale(1.25)"/>
<use href="#daisy" transform="translate(110.7,122.9) rotate(151) scale(1.10)"/>
<use href="#daisy" transform="translate(124.5,124.1) rotate(101) scale(1.28)"/>
<use href="#daisy" transform="translate(144.7,129.5) rotate(346) scale(1.27)"/>
<use href="#daisy" transform="translate(172.4,126.2) rotate(247) scale(1.14)"/>
<use href="#daisy" transform="translate(195.5,121.0) rotate(335) scale(1.18)"/>
<use href="#daisy" transform="translate(345.5,129.3) rotate(246) scale(1.10)"/>
<use href="#daisy" transform="translate(427.8,122.3) rotate(308) scale(1.36)"/>
<use href="#daisy" transform="translate(47.1,145.2) rotate(29) scale(1.12)"/>
<use href="#daisy" transform="translate(98.0,146.4) rotate(42) scale(1.33)"/>
<use href="#daisy" transform="translate(119.1,151.0) rotate(253) scale(1.16)"/>
<use href="#daisy" transform="translate(136.7,145.0) rotate(192) scale(1.29)"/>
<use href="#daisy" transform="translate(182.2,145.0) rotate(346) scale(1.03)"/>
<use href="#daisy" transform="translate(198.5,151.8) rotate(343) scale(1.07)"/>
<use href="#daisy" transform="translate(319.7,151.4) rotate(160) scale(1.09)"/>
<use href="#daisy" transform="translate(-5.1,161.9) rotate(205) scale(1.15)"/>
<use href="#daisy" transform="translate(39.7,161.5) rotate(35) scale(1.27)"/>
<use href="#daisy" transform="translate(83.9,163.0) rotate(83) scale(1.30)"/>
<use href="#daisy" transform="translate(131.2,161.3) rotate(53) scale(1.03)"/>
<use href="#daisy" transform="translate(144.7,161.5) rotate(234) scale(1.07)"/>
<use href="#daisy" transform="translate(169.1,161.5) rotate(112) scale(1.32)"/>
<use href="#daisy" transform="translate(215.8,165.6) rotate(138) scale(1.25)"/>
<use href="#daisy" transform="translate(263.4,159.9) rotate(328) scale(1.08)"/>
<use href="#daisy" transform="translate(8.5,183.2) rotate(262) scale(1.02)"/>
<use href="#daisy" transform="translate(23.0,185.8) rotate(1) scale(1.36)"/>
<use href="#daisy" transform="translate(52.0,182.1) rotate(61) scale(1.17)"/>
<use href="#daisy" transform="translate(67.6,186.2) rotate(51) scale(1.06)"/>
<use href="#daisy" transform="translate(86.4,187.0) rotate(58) scale(1.29)"/>
<use href="#daisy" transform="translate(134.8,189.4) rotate(41) scale(1.34)"/>
<use href="#daisy" transform="translate(163.1,183.9) rotate(316) scale(1.33)"/>
<use href="#daisy" transform="translate(187.5,186.1) rotate(264) scale(1.02)"/>
<use href="#daisy" transform="translate(202.5,184.7) rotate(204) scale(1.01)"/>
<use href="#daisy" transform="translate(222.1,183.2) rotate(56) scale(1.00)"/>
<use href="#daisy" transform="translate(247.6,180.0) rotate(120) scale(1.08)"/>
<use href="#daisy" transform="translate(271.9,179.8) rotate(66) scale(1.19)"/>
<use href="#daisy" transform="translate(291.6,182.8) rotate(353) scale(1.29)"/>
<use href="#daisy" transform="translate(21.7,207.1) rotate(101) scale(1.01)"/>
<use href="#daisy" transform="translate(43.8,206.5) rotate(18) scale(1.18)"/>
<use href="#daisy" transform="translate(58.0,203.6) rotate(254) scale(1.12)"/>
<use href="#daisy" transform="translate(109.4,199.1) rotate(153) scale(1.22)"/>
<use href="#daisy" transform="translate(129.7,202.7) rotate(27) scale(1.13)"/>
<use href="#daisy" transform="translate(169.7,197.7) rotate(199) scale(1.24)"/>
<use href="#daisy" transform="translate(216.5,208.3) rotate(351) scale(1.12)"/>
<use href="#daisy" transform="translate(237.3,206.1) rotate(120) scale(1.19)"/>
<use href="#daisy" transform="translate(256.4,206.5) rotate(145) scale(1.33)"/>
<use href="#daisy" transform="translate(281.6,203.6) rotate(331) scale(1.06)"/>
<use href="#daisy" transform="translate(7.5,218.3) rotate(275) scale(1.32)"/>
<use href="#daisy" transform="translate(32.2,225.6) rotate(298) scale(1.26)"/>
<use href="#daisy" transform="translate(45.4,225.8) rotate(328) scale(1.10)"/>
<use href="#daisy" transform="translate(97.2,226.1) rotate(64) scale(1.11)"/>
<use href="#daisy" transform="translate(113.5,223.8) rotate(178) scale(1.17)"/>
<use href="#daisy" transform="translate(159.8,221.6) rotate(110) scale(1.34)"/>
<use href="#daisy" transform="translate(175.3,222.0) rotate(150) scale(1.21)"/>
<use href="#daisy" transform="translate(205.2,226.5) rotate(279) scale(1.04)"/>
<use href="#daisy" transform="translate(225.5,220.0) rotate(345) scale(1.20)"/>
<use href="#daisy" transform="translate(240.5,219.5) rotate(151) scale(1.35)"/>
<use href="#daisy" transform="translate(21.9,242.2) rotate(57) scale(1.11)"/>
<use href="#daisy" transform="translate(33.5,245.7) rotate(165) scale(1.36)"/>
<use href="#daisy" transform="translate(78.1,237.0) rotate(65) scale(1.26)"/>
<use href="#daisy" transform="translate(107.0,244.5) rotate(22) scale(1.27)"/>
<use href="#daisy" transform="translate(167.5,236.4) rotate(150) scale(1.25)"/>
<use href="#daisy" transform="translate(216.2,239.7) rotate(335) scale(1.15)"/>
<use href="#daisy" transform="translate(238.2,235.4) rotate(351) scale(1.10)"/>
<use href="#daisy" transform="translate(253.8,236.0) rotate(294) scale(1.25)"/>
<use href="#daisy" transform="translate(278.3,246.2) rotate(86) scale(1.04)"/>
<use href="#daisy" transform="translate(6.5,256.4) rotate(304) scale(1.24)"/>
<use href="#daisy" transform="translate(29.0,261.5) rotate(185) scale(1.18)"/>
<use href="#daisy" transform="translate(65.8,258.6) rotate(197) scale(1.16)"/>
<use href="#daisy" transform="translate(91.3,256.0) rotate(102) scale(1.32)"/>
<use href="#daisy" transform="translate(112.9,254.8) rotate(62) scale(1.22)"/>
<use href="#daisy" transform="translate(142.5,256.9) rotate(186) scale(1.05)"/>
<use href="#daisy" transform="translate(162.0,255.7) rotate(315) scale(1.36)"/>
<use href="#daisy" transform="translate(185.2,261.1) rotate(214) scale(1.07)"/>
<use href="#daisy" transform="translate(202.3,259.2) rotate(95) scale(1.19)"/>
<use href="#daisy" transform="translate(-9.6,285.0) rotate(87) scale(1.27)"/>
<use href="#daisy" transform="translate(35.8,276.0) rotate(243) scale(1.04)"/>
<use href="#daisy" transform="translate(58.8,281.2) rotate(313) scale(1.25)"/>
<use href="#daisy" transform="translate(100.9,275.8) rotate(337) scale(1.10)"/>
<use href="#daisy" transform="translate(127.0,276.1) rotate(81) scale(1.03)"/>
<use href="#daisy" transform="translate(151.9,280.9) rotate(23) scale(1.21)"/>
<use href="#daisy" transform="translate(165.9,284.5) rotate(183) scale(1.10)"/>
<use href="#daisy" transform="translate(194.4,283.3) rotate(83) scale(1.07)"/>
<use href="#daisy" transform="translate(214.1,280.3) rotate(88) scale(1.10)"/>
<use href="#daisy" transform="translate(252.6,281.3) rotate(152) scale(1.23)"/>
<use href="#daisy" transform="translate(279.6,279.1) rotate(305) scale(1.16)"/>
<use href="#daisy" transform="translate(307.9,282.6) rotate(175) scale(1.17)"/>
<circle cx="10" cy="68" r="58" fill="#b8100c"/>
<ellipse cx="50.5" cy="71.4" rx="19.7" ry="11.0" transform="rotate(5 50.5 71.4)" fill="#e61f16" stroke="#8e0a06" stroke-width="0.9"/>
<ellipse cx="45.6" cy="87.5" rx="19.7" ry="11.0" transform="rotate(29 45.6 87.5)" fill="#ee2a1c" stroke="#8e0a06" stroke-width="0.9"/>
<ellipse cx="34.6" cy="100.3" rx="19.7" ry="11.0" transform="rotate(53 34.6 100.3)" fill="#ee2a1c" stroke="#8e0a06" stroke-width="0.9"/>
<ellipse cx="19.3" cy="107.5" rx="19.7" ry="11.0" transform="rotate(77 19.3 107.5)" fill="#ee2a1c" stroke="#8e0a06" stroke-width="0.9"/>
<ellipse cx="2.4" cy="107.9" rx="19.7" ry="11.0" transform="rotate(101 2.4 107.9)" fill="#ee2a1c" stroke="#8e0a06" stroke-width="0.9"/>
<ellipse cx="-13.1" cy="101.4" rx="19.7" ry="11.0" transform="rotate(125 -13.1 101.4)" fill="#e61f16" stroke="#8e0a06" stroke-width="0.9"/>
<ellipse cx="-24.7" cy="89.1" rx="19.7" ry="11.0" transform="rotate(149 -24.7 89.1)" fill="#f2361f" stroke="#8e0a06" stroke-width="0.9"/>
<ellipse cx="-30.3" cy="73.1" rx="19.7" ry="11.0" transform="rotate(173 -30.3 73.1)" fill="#f2361f" stroke="#8e0a06" stroke-width="0.9"/>
<ellipse cx="-28.9" cy="56.3" rx="19.7" ry="11.0" transform="rotate(197 -28.9 56.3)" fill="#ee2a1c" stroke="#8e0a06" stroke-width="0.9"/>
<ellipse cx="-20.8" cy="41.5" rx="19.7" ry="11.0" transform="rotate(221 -20.8 41.5)" fill="#dc1a12" stroke="#8e0a06" stroke-width="0.9"/>
<ellipse cx="-7.3" cy="31.3" rx="19.7" ry="11.0" transform="rotate(245 -7.3 31.3)" fill="#f2361f" stroke="#8e0a06" stroke-width="0.9"/>
<ellipse cx="9.1" cy="27.4" rx="19.7" ry="11.0" transform="rotate(269 9.1 27.4)" fill="#dc1a12" stroke="#8e0a06" stroke-width="0.9"/>
<ellipse cx="25.7" cy="30.6" rx="19.7" ry="11.0" transform="rotate(293 25.7 30.6)" fill="#e61f16" stroke="#8e0a06" stroke-width="0.9"/>
<ellipse cx="39.6" cy="40.2" rx="19.7" ry="11.0" transform="rotate(317 39.6 40.2)" fill="#dc1a12" stroke="#8e0a06" stroke-width="0.9"/>
<ellipse cx="48.3" cy="54.6" rx="19.7" ry="11.0" transform="rotate(341 48.3 54.6)" fill="#dc1a12" stroke="#8e0a06" stroke-width="0.9"/>
<ellipse cx="35.2" cy="74.9" rx="15.7" ry="9.3" transform="rotate(15 35.2 74.9)" fill="#dc1a12" stroke="#8e0a06" stroke-width="0.9"/>
<ellipse cx="27.5" cy="87.4" rx="15.7" ry="9.3" transform="rotate(48 27.5 87.4)" fill="#ee2a1c" stroke="#8e0a06" stroke-width="0.9"/>
<ellipse cx="14.2" cy="93.8" rx="15.7" ry="9.3" transform="rotate(81 14.2 93.8)" fill="#dc1a12" stroke="#8e0a06" stroke-width="0.9"/>
<ellipse cx="-0.4" cy="91.9" rx="15.7" ry="9.3" transform="rotate(113 -0.4 91.9)" fill="#f2361f" stroke="#8e0a06" stroke-width="0.9"/>
<ellipse cx="-11.7" cy="82.5" rx="15.7" ry="9.3" transform="rotate(146 -11.7 82.5)" fill="#e61f16" stroke="#8e0a06" stroke-width="0.9"/>
<ellipse cx="-16.1" cy="68.5" rx="15.7" ry="9.3" transform="rotate(179 -16.1 68.5)" fill="#dc1a12" stroke="#8e0a06" stroke-width="0.9"/>
<ellipse cx="-12.2" cy="54.3" rx="15.7" ry="9.3" transform="rotate(212 -12.2 54.3)" fill="#f2361f" stroke="#8e0a06" stroke-width="0.9"/>
<ellipse cx="-1.3" cy="44.5" rx="15.7" ry="9.3" transform="rotate(244 -1.3 44.5)" fill="#dc1a12" stroke="#8e0a06" stroke-width="0.9"/>
<ellipse cx="13.2" cy="42.1" rx="15.7" ry="9.3" transform="rotate(277 13.2 42.1)" fill="#e61f16" stroke="#8e0a06" stroke-width="0.9"/>
<ellipse cx="26.7" cy="47.9" rx="15.7" ry="9.3" transform="rotate(310 26.7 47.9)" fill="#ee2a1c" stroke="#8e0a06" stroke-width="0.9"/>
<ellipse cx="34.9" cy="60.2" rx="15.7" ry="9.3" transform="rotate(343 34.9 60.2)" fill="#dc1a12" stroke="#8e0a06" stroke-width="0.9"/>
<ellipse cx="20.0" cy="73.9" rx="11.6" ry="7.5" transform="rotate(30 20.0 73.9)" fill="#e61f16" stroke="#8e0a06" stroke-width="0.9"/>
<ellipse cx="11.6" cy="79.5" rx="11.6" ry="7.5" transform="rotate(82 11.6 79.5)" fill="#ee2a1c" stroke="#8e0a06" stroke-width="0.9"/>
<ellipse cx="2.0" cy="76.4" rx="11.6" ry="7.5" transform="rotate(133 2.0 76.4)" fill="#e61f16" stroke="#8e0a06" stroke-width="0.9"/>
<ellipse cx="-1.6" cy="67.0" rx="11.6" ry="7.5" transform="rotate(185 -1.6 67.0)" fill="#dc1a12" stroke="#8e0a06" stroke-width="0.9"/>
<ellipse cx="3.5" cy="58.4" rx="11.6" ry="7.5" transform="rotate(236 3.5 58.4)" fill="#f2361f" stroke="#8e0a06" stroke-width="0.9"/>
<ellipse cx="13.5" cy="56.9" rx="11.6" ry="7.5" transform="rotate(288 13.5 56.9)" fill="#ee2a1c" stroke="#8e0a06" stroke-width="0.9"/>
<ellipse cx="20.8" cy="63.8" rx="11.6" ry="7.5" transform="rotate(339 20.8 63.8)" fill="#e61f16" stroke="#8e0a06" stroke-width="0.9"/>
<circle cx="236" cy="2" r="44" fill="#b8100c"/>
<ellipse cx="264.7" cy="13.1" rx="15.0" ry="8.4" transform="rotate(21 264.7 13.1)" fill="#dc1a12" stroke="#8e0a06" stroke-width="0.9"/>
<ellipse cx="257.8" cy="23.8" rx="15.0" ry="8.4" transform="rotate(45 257.8 23.8)" fill="#f2361f" stroke="#8e0a06" stroke-width="0.9"/>
<ellipse cx="247.0" cy="30.8" rx="15.0" ry="8.4" transform="rotate(69 247.0 30.8)" fill="#ee2a1c" stroke="#8e0a06" stroke-width="0.9"/>
<ellipse cx="234.4" cy="32.8" rx="15.0" ry="8.4" transform="rotate(93 234.4 32.8)" fill="#dc1a12" stroke="#8e0a06" stroke-width="0.9"/>
<ellipse cx="222.0" cy="29.4" rx="15.0" ry="8.4" transform="rotate(117 222.0 29.4)" fill="#f2361f" stroke="#8e0a06" stroke-width="0.9"/>
<ellipse cx="212.0" cy="21.4" rx="15.0" ry="8.4" transform="rotate(141 212.0 21.4)" fill="#dc1a12" stroke="#8e0a06" stroke-width="0.9"/>
<ellipse cx="206.2" cy="9.9" rx="15.0" ry="8.4" transform="rotate(165 206.2 9.9)" fill="#dc1a12" stroke="#8e0a06" stroke-width="0.9"/>
<ellipse cx="205.6" cy="-2.9" rx="15.0" ry="8.4" transform="rotate(189 205.6 -2.9)" fill="#f2361f" stroke="#8e0a06" stroke-width="0.9"/>
<ellipse cx="210.2" cy="-14.8" rx="15.0" ry="8.4" transform="rotate(213 210.2 -14.8)" fill="#e61f16" stroke="#8e0a06" stroke-width="0.9"/>
<ellipse cx="219.3" cy="-23.8" rx="15.0" ry="8.4" transform="rotate(237 219.3 -23.8)" fill="#ee2a1c" stroke="#8e0a06" stroke-width="0.9"/>
<ellipse cx="231.2" cy="-28.4" rx="15.0" ry="8.4" transform="rotate(261 231.2 -28.4)" fill="#dc1a12" stroke="#8e0a06" stroke-width="0.9"/>
<ellipse cx="244.0" cy="-27.7" rx="15.0" ry="8.4" transform="rotate(285 244.0 -27.7)" fill="#f2361f" stroke="#8e0a06" stroke-width="0.9"/>
<ellipse cx="255.4" cy="-21.9" rx="15.0" ry="8.4" transform="rotate(309 255.4 -21.9)" fill="#ee2a1c" stroke="#8e0a06" stroke-width="0.9"/>
<ellipse cx="263.5" cy="-12.0" rx="15.0" ry="8.4" transform="rotate(333 263.5 -12.0)" fill="#e61f16" stroke="#8e0a06" stroke-width="0.9"/>
<ellipse cx="266.8" cy="0.4" rx="15.0" ry="8.4" transform="rotate(357 266.8 0.4)" fill="#e61f16" stroke="#8e0a06" stroke-width="0.9"/>
<ellipse cx="255.2" cy="6.7" rx="11.9" ry="7.0" transform="rotate(14 255.2 6.7)" fill="#e61f16" stroke="#8e0a06" stroke-width="0.9"/>
<ellipse cx="249.6" cy="16.4" rx="11.9" ry="7.0" transform="rotate(46 249.6 16.4)" fill="#e61f16" stroke="#8e0a06" stroke-width="0.9"/>
<ellipse cx="239.7" cy="21.4" rx="11.9" ry="7.0" transform="rotate(79 239.7 21.4)" fill="#ee2a1c" stroke="#8e0a06" stroke-width="0.9"/>
<ellipse cx="228.6" cy="20.4" rx="11.9" ry="7.0" transform="rotate(112 228.6 20.4)" fill="#f2361f" stroke="#8e0a06" stroke-width="0.9"/>
<ellipse cx="219.9" cy="13.5" rx="11.9" ry="7.0" transform="rotate(145 219.9 13.5)" fill="#f2361f" stroke="#8e0a06" stroke-width="0.9"/>
<ellipse cx="216.2" cy="2.9" rx="11.9" ry="7.0" transform="rotate(177 216.2 2.9)" fill="#f2361f" stroke="#8e0a06" stroke-width="0.9"/>
<ellipse cx="218.9" cy="-7.9" rx="11.9" ry="7.0" transform="rotate(210 218.9 -7.9)" fill="#dc1a12" stroke="#8e0a06" stroke-width="0.9"/>
<ellipse cx="227.0" cy="-15.6" rx="11.9" ry="7.0" transform="rotate(243 227.0 -15.6)" fill="#dc1a12" stroke="#8e0a06" stroke-width="0.9"/>
<ellipse cx="237.9" cy="-17.7" rx="11.9" ry="7.0" transform="rotate(276 237.9 -17.7)" fill="#e61f16" stroke="#8e0a06" stroke-width="0.9"/>
<ellipse cx="248.3" cy="-13.5" rx="11.9" ry="7.0" transform="rotate(308 248.3 -13.5)" fill="#f2361f" stroke="#8e0a06" stroke-width="0.9"/>
<ellipse cx="254.7" cy="-4.4" rx="11.9" ry="7.0" transform="rotate(341 254.7 -4.4)" fill="#f2361f" stroke="#8e0a06" stroke-width="0.9"/>
<ellipse cx="244.4" cy="4.7" rx="8.8" ry="5.7" transform="rotate(18 244.4 4.7)" fill="#ee2a1c" stroke="#8e0a06" stroke-width="0.9"/>
<ellipse cx="239.1" cy="10.2" rx="8.8" ry="5.7" transform="rotate(70 239.1 10.2)" fill="#dc1a12" stroke="#8e0a06" stroke-width="0.9"/>
<ellipse cx="231.5" cy="9.5" rx="8.8" ry="5.7" transform="rotate(121 231.5 9.5)" fill="#e61f16" stroke="#8e0a06" stroke-width="0.9"/>
<ellipse cx="227.3" cy="3.2" rx="8.8" ry="5.7" transform="rotate(172 227.3 3.2)" fill="#ee2a1c" stroke="#8e0a06" stroke-width="0.9"/>
<ellipse cx="229.7" cy="-4.1" rx="8.8" ry="5.7" transform="rotate(224 229.7 -4.1)" fill="#dc1a12" stroke="#8e0a06" stroke-width="0.9"/>
<ellipse cx="236.8" cy="-6.8" rx="8.8" ry="5.7" transform="rotate(275 236.8 -6.8)" fill="#e61f16" stroke="#8e0a06" stroke-width="0.9"/>
<ellipse cx="243.4" cy="-2.8" rx="8.8" ry="5.7" transform="rotate(327 243.4 -2.8)" fill="#ee2a1c" stroke="#8e0a06" stroke-width="0.9"/>
<circle cx="268" cy="94" r="68" fill="#b8100c"/>
<ellipse cx="314.3" cy="105.0" rx="23.1" ry="12.9" transform="rotate(13 314.3 105.0)" fill="#e61f16" stroke="#8e0a06" stroke-width="0.9"/>
<ellipse cx="305.8" cy="122.9" rx="23.1" ry="12.9" transform="rotate(37 305.8 122.9)" fill="#e61f16" stroke="#8e0a06" stroke-width="0.9"/>
<ellipse cx="290.8" cy="135.8" rx="23.1" ry="12.9" transform="rotate(61 290.8 135.8)" fill="#ee2a1c" stroke="#8e0a06" stroke-width="0.9"/>
<ellipse cx="271.8" cy="141.4" rx="23.1" ry="12.9" transform="rotate(85 271.8 141.4)" fill="#f2361f" stroke="#8e0a06" stroke-width="0.9"/>
<ellipse cx="252.2" cy="138.9" rx="23.1" ry="12.9" transform="rotate(109 252.2 138.9)" fill="#ee2a1c" stroke="#8e0a06" stroke-width="0.9"/>
<ellipse cx="235.3" cy="128.6" rx="23.1" ry="12.9" transform="rotate(133 235.3 128.6)" fill="#dc1a12" stroke="#8e0a06" stroke-width="0.9"/>
<ellipse cx="224.1" cy="112.3" rx="23.1" ry="12.9" transform="rotate(157 224.1 112.3)" fill="#dc1a12" stroke="#8e0a06" stroke-width="0.9"/>
<ellipse cx="220.4" cy="92.9" rx="23.1" ry="12.9" transform="rotate(181 220.4 92.9)" fill="#dc1a12" stroke="#8e0a06" stroke-width="0.9"/>
<ellipse cx="225.0" cy="73.6" rx="23.1" ry="12.9" transform="rotate(205 225.0 73.6)" fill="#dc1a12" stroke="#8e0a06" stroke-width="0.9"/>
<ellipse cx="237.0" cy="57.9" rx="23.1" ry="12.9" transform="rotate(229 237.0 57.9)" fill="#e61f16" stroke="#8e0a06" stroke-width="0.9"/>
<ellipse cx="254.4" cy="48.4" rx="23.1" ry="12.9" transform="rotate(253 254.4 48.4)" fill="#f2361f" stroke="#8e0a06" stroke-width="0.9"/>
<ellipse cx="274.1" cy="46.8" rx="23.1" ry="12.9" transform="rotate(277 274.1 46.8)" fill="#e61f16" stroke="#8e0a06" stroke-width="0.9"/>
<ellipse cx="292.8" cy="53.4" rx="23.1" ry="12.9" transform="rotate(301 292.8 53.4)" fill="#f2361f" stroke="#8e0a06" stroke-width="0.9"/>
<ellipse cx="307.2" cy="67.0" rx="23.1" ry="12.9" transform="rotate(325 307.2 67.0)" fill="#ee2a1c" stroke="#8e0a06" stroke-width="0.9"/>
<ellipse cx="314.8" cy="85.2" rx="23.1" ry="12.9" transform="rotate(349 314.8 85.2)" fill="#dc1a12" stroke="#8e0a06" stroke-width="0.9"/>
<ellipse cx="296.4" cy="105.4" rx="18.4" ry="10.9" transform="rotate(22 296.4 105.4)" fill="#ee2a1c" stroke="#8e0a06" stroke-width="0.9"/>
<ellipse cx="285.7" cy="119.0" rx="18.4" ry="10.9" transform="rotate(55 285.7 119.0)" fill="#f2361f" stroke="#8e0a06" stroke-width="0.9"/>
<ellipse cx="269.4" cy="124.6" rx="18.4" ry="10.9" transform="rotate(87 269.4 124.6)" fill="#f2361f" stroke="#8e0a06" stroke-width="0.9"/>
<ellipse cx="252.7" cy="120.5" rx="18.4" ry="10.9" transform="rotate(120 252.7 120.5)" fill="#e61f16" stroke="#8e0a06" stroke-width="0.9"/>
<ellipse cx="240.8" cy="108.0" rx="18.4" ry="10.9" transform="rotate(153 240.8 108.0)" fill="#ee2a1c" stroke="#8e0a06" stroke-width="0.9"/>
<ellipse cx="237.5" cy="91.0" rx="18.4" ry="10.9" transform="rotate(186 237.5 91.0)" fill="#e61f16" stroke="#8e0a06" stroke-width="0.9"/>
<ellipse cx="244.0" cy="75.0" rx="18.4" ry="10.9" transform="rotate(218 244.0 75.0)" fill="#ee2a1c" stroke="#8e0a06" stroke-width="0.9"/>
<ellipse cx="258.0" cy="65.1" rx="18.4" ry="10.9" transform="rotate(251 258.0 65.1)" fill="#dc1a12" stroke="#8e0a06" stroke-width="0.9"/>
<ellipse cx="275.3" cy="64.3" rx="18.4" ry="10.9" transform="rotate(284 275.3 64.3)" fill="#e61f16" stroke="#8e0a06" stroke-width="0.9"/>
<ellipse cx="290.2" cy="72.9" rx="18.4" ry="10.9" transform="rotate(316 290.2 72.9)" fill="#f2361f" stroke="#8e0a06" stroke-width="0.9"/>
<ellipse cx="298.1" cy="88.3" rx="18.4" ry="10.9" transform="rotate(349 298.1 88.3)" fill="#ee2a1c" stroke="#8e0a06" stroke-width="0.9"/>
<ellipse cx="280.4" cy="99.5" rx="13.6" ry="8.8" transform="rotate(24 280.4 99.5)" fill="#dc1a12" stroke="#8e0a06" stroke-width="0.9"/>
<ellipse cx="271.4" cy="107.2" rx="13.6" ry="8.8" transform="rotate(75 271.4 107.2)" fill="#dc1a12" stroke="#8e0a06" stroke-width="0.9"/>
<ellipse cx="259.9" cy="104.9" rx="13.6" ry="8.8" transform="rotate(127 259.9 104.9)" fill="#e61f16" stroke="#8e0a06" stroke-width="0.9"/>
<ellipse cx="254.4" cy="94.4" rx="13.6" ry="8.8" transform="rotate(178 254.4 94.4)" fill="#dc1a12" stroke="#8e0a06" stroke-width="0.9"/>
<ellipse cx="259.2" cy="83.6" rx="13.6" ry="8.8" transform="rotate(230 259.2 83.6)" fill="#f2361f" stroke="#8e0a06" stroke-width="0.9"/>
<ellipse cx="270.6" cy="80.7" rx="13.6" ry="8.8" transform="rotate(281 270.6 80.7)" fill="#e61f16" stroke="#8e0a06" stroke-width="0.9"/>
<ellipse cx="280.1" cy="87.7" rx="13.6" ry="8.8" transform="rotate(333 280.1 87.7)" fill="#f2361f" stroke="#8e0a06" stroke-width="0.9"/>
<circle cx="374" cy="-16" r="58" fill="#b8100c"/>
<ellipse cx="413.5" cy="-6.8" rx="19.7" ry="11.0" transform="rotate(13 413.5 -6.8)" fill="#e61f16" stroke="#8e0a06" stroke-width="0.9"/>
<ellipse cx="406.4" cy="8.5" rx="19.7" ry="11.0" transform="rotate(37 406.4 8.5)" fill="#ee2a1c" stroke="#8e0a06" stroke-width="0.9"/>
<ellipse cx="393.6" cy="19.6" rx="19.7" ry="11.0" transform="rotate(61 393.6 19.6)" fill="#e61f16" stroke="#8e0a06" stroke-width="0.9"/>
<ellipse cx="377.4" cy="24.5" rx="19.7" ry="11.0" transform="rotate(85 377.4 24.5)" fill="#dc1a12" stroke="#8e0a06" stroke-width="0.9"/>
<ellipse cx="360.7" cy="22.4" rx="19.7" ry="11.0" transform="rotate(109 360.7 22.4)" fill="#dc1a12" stroke="#8e0a06" stroke-width="0.9"/>
<ellipse cx="346.2" cy="13.6" rx="19.7" ry="11.0" transform="rotate(133 346.2 13.6)" fill="#ee2a1c" stroke="#8e0a06" stroke-width="0.9"/>
<ellipse cx="336.6" cy="-0.2" rx="19.7" ry="11.0" transform="rotate(157 336.6 -0.2)" fill="#f2361f" stroke="#8e0a06" stroke-width="0.9"/>
<ellipse cx="333.4" cy="-16.8" rx="19.7" ry="11.0" transform="rotate(181 333.4 -16.8)" fill="#dc1a12" stroke="#8e0a06" stroke-width="0.9"/>
<ellipse cx="337.2" cy="-33.3" rx="19.7" ry="11.0" transform="rotate(205 337.2 -33.3)" fill="#ee2a1c" stroke="#8e0a06" stroke-width="0.9"/>
<ellipse cx="347.4" cy="-46.7" rx="19.7" ry="11.0" transform="rotate(229 347.4 -46.7)" fill="#f2361f" stroke="#8e0a06" stroke-width="0.9"/>
<ellipse cx="362.2" cy="-54.9" rx="19.7" ry="11.0" transform="rotate(253 362.2 -54.9)" fill="#f2361f" stroke="#8e0a06" stroke-width="0.9"/>
<ellipse cx="379.0" cy="-56.3" rx="19.7" ry="11.0" transform="rotate(277 379.0 -56.3)" fill="#e61f16" stroke="#8e0a06" stroke-width="0.9"/>
<ellipse cx="395.0" cy="-50.7" rx="19.7" ry="11.0" transform="rotate(301 395.0 -50.7)" fill="#dc1a12" stroke="#8e0a06" stroke-width="0.9"/>
<ellipse cx="407.3" cy="-39.2" rx="19.7" ry="11.0" transform="rotate(325 407.3 -39.2)" fill="#e61f16" stroke="#8e0a06" stroke-width="0.9"/>
<ellipse cx="413.9" cy="-23.6" rx="19.7" ry="11.0" transform="rotate(349 413.9 -23.6)" fill="#f2361f" stroke="#8e0a06" stroke-width="0.9"/>
<ellipse cx="400.1" cy="-14.4" rx="15.7" ry="9.3" transform="rotate(3 400.1 -14.4)" fill="#ee2a1c" stroke="#8e0a06" stroke-width="0.9"/>
<ellipse cx="395.1" cy="-0.6" rx="15.7" ry="9.3" transform="rotate(36 395.1 -0.6)" fill="#ee2a1c" stroke="#8e0a06" stroke-width="0.9"/>
<ellipse cx="383.4" cy="8.4" rx="15.7" ry="9.3" transform="rotate(69 383.4 8.4)" fill="#f2361f" stroke="#8e0a06" stroke-width="0.9"/>
<ellipse cx="368.7" cy="9.6" rx="15.7" ry="9.3" transform="rotate(102 368.7 9.6)" fill="#e61f16" stroke="#8e0a06" stroke-width="0.9"/>
<ellipse cx="355.7" cy="2.6" rx="15.7" ry="9.3" transform="rotate(134 355.7 2.6)" fill="#ee2a1c" stroke="#8e0a06" stroke-width="0.9"/>
<ellipse cx="348.6" cy="-10.2" rx="15.7" ry="9.3" transform="rotate(167 348.6 -10.2)" fill="#f2361f" stroke="#8e0a06" stroke-width="0.9"/>
<ellipse cx="349.5" cy="-24.9" rx="15.7" ry="9.3" transform="rotate(200 349.5 -24.9)" fill="#ee2a1c" stroke="#8e0a06" stroke-width="0.9"/>
<ellipse cx="358.1" cy="-36.7" rx="15.7" ry="9.3" transform="rotate(233 358.1 -36.7)" fill="#f2361f" stroke="#8e0a06" stroke-width="0.9"/>
<ellipse cx="371.9" cy="-42.0" rx="15.7" ry="9.3" transform="rotate(265 371.9 -42.0)" fill="#f2361f" stroke="#8e0a06" stroke-width="0.9"/>
<ellipse cx="386.3" cy="-39.0" rx="15.7" ry="9.3" transform="rotate(298 386.3 -39.0)" fill="#ee2a1c" stroke="#8e0a06" stroke-width="0.9"/>
<ellipse cx="396.8" cy="-28.7" rx="15.7" ry="9.3" transform="rotate(331 396.8 -28.7)" fill="#f2361f" stroke="#8e0a06" stroke-width="0.9"/>
<ellipse cx="381.7" cy="-7.4" rx="11.6" ry="7.5" transform="rotate(48 381.7 -7.4)" fill="#ee2a1c" stroke="#8e0a06" stroke-width="0.9"/>
<ellipse cx="372.1" cy="-4.6" rx="11.6" ry="7.5" transform="rotate(100 372.1 -4.6)" fill="#e61f16" stroke="#8e0a06" stroke-width="0.9"/>
<ellipse cx="363.8" cy="-10.4" rx="11.6" ry="7.5" transform="rotate(151 363.8 -10.4)" fill="#dc1a12" stroke="#8e0a06" stroke-width="0.9"/>
<ellipse cx="363.3" cy="-20.4" rx="11.6" ry="7.5" transform="rotate(202 363.3 -20.4)" fill="#ee2a1c" stroke="#8e0a06" stroke-width="0.9"/>
<ellipse cx="370.8" cy="-27.1" rx="11.6" ry="7.5" transform="rotate(254 370.8 -27.1)" fill="#f2361f" stroke="#8e0a06" stroke-width="0.9"/>
<ellipse cx="380.7" cy="-25.5" rx="11.6" ry="7.5" transform="rotate(305 380.7 -25.5)" fill="#ee2a1c" stroke="#8e0a06" stroke-width="0.9"/>
<ellipse cx="385.6" cy="-16.7" rx="11.6" ry="7.5" transform="rotate(357 385.6 -16.7)" fill="#e61f16" stroke="#8e0a06" stroke-width="0.9"/>
<circle cx="372" cy="204" r="82" fill="#b8100c"/>
<ellipse cx="425.3" cy="225.4" rx="27.9" ry="15.6" transform="rotate(22 425.3 225.4)" fill="#f2361f" stroke="#8e0a06" stroke-width="0.9"/>
<ellipse cx="412.0" cy="245.2" rx="27.9" ry="15.6" transform="rotate(46 412.0 245.2)" fill="#ee2a1c" stroke="#8e0a06" stroke-width="0.9"/>
<ellipse cx="391.8" cy="257.9" rx="27.9" ry="15.6" transform="rotate(70 391.8 257.9)" fill="#dc1a12" stroke="#8e0a06" stroke-width="0.9"/>
<ellipse cx="368.2" cy="261.3" rx="27.9" ry="15.6" transform="rotate(94 368.2 261.3)" fill="#e61f16" stroke="#8e0a06" stroke-width="0.9"/>
<ellipse cx="345.2" cy="254.8" rx="27.9" ry="15.6" transform="rotate(118 345.2 254.8)" fill="#ee2a1c" stroke="#8e0a06" stroke-width="0.9"/>
<ellipse cx="326.9" cy="239.5" rx="27.9" ry="15.6" transform="rotate(142 326.9 239.5)" fill="#dc1a12" stroke="#8e0a06" stroke-width="0.9"/>
<ellipse cx="316.3" cy="218.0" rx="27.9" ry="15.6" transform="rotate(166 316.3 218.0)" fill="#dc1a12" stroke="#8e0a06" stroke-width="0.9"/>
<ellipse cx="315.4" cy="194.2" rx="27.9" ry="15.6" transform="rotate(190 315.4 194.2)" fill="#f2361f" stroke="#8e0a06" stroke-width="0.9"/>
<ellipse cx="324.3" cy="172.0" rx="27.9" ry="15.6" transform="rotate(214 324.3 172.0)" fill="#f2361f" stroke="#8e0a06" stroke-width="0.9"/>
<ellipse cx="341.4" cy="155.4" rx="27.9" ry="15.6" transform="rotate(238 341.4 155.4)" fill="#e61f16" stroke="#8e0a06" stroke-width="0.9"/>
<ellipse cx="363.9" cy="147.2" rx="27.9" ry="15.6" transform="rotate(262 363.9 147.2)" fill="#f2361f" stroke="#8e0a06" stroke-width="0.9"/>
<ellipse cx="387.7" cy="148.8" rx="27.9" ry="15.6" transform="rotate(286 387.7 148.8)" fill="#dc1a12" stroke="#8e0a06" stroke-width="0.9"/>
<ellipse cx="408.8" cy="159.9" rx="27.9" ry="15.6" transform="rotate(310 408.8 159.9)" fill="#f2361f" stroke="#8e0a06" stroke-width="0.9"/>
<ellipse cx="423.5" cy="178.7" rx="27.9" ry="15.6" transform="rotate(334 423.5 178.7)" fill="#dc1a12" stroke="#8e0a06" stroke-width="0.9"/>
<ellipse cx="429.4" cy="201.8" rx="27.9" ry="15.6" transform="rotate(358 429.4 201.8)" fill="#ee2a1c" stroke="#8e0a06" stroke-width="0.9"/>
<ellipse cx="408.8" cy="207.2" rx="22.1" ry="13.1" transform="rotate(5 408.8 207.2)" fill="#f2361f" stroke="#8e0a06" stroke-width="0.9"/>
<ellipse cx="401.2" cy="226.6" rx="22.1" ry="13.1" transform="rotate(38 401.2 226.6)" fill="#dc1a12" stroke="#8e0a06" stroke-width="0.9"/>
<ellipse cx="384.3" cy="238.8" rx="22.1" ry="13.1" transform="rotate(70 384.3 238.8)" fill="#e61f16" stroke="#8e0a06" stroke-width="0.9"/>
<ellipse cx="363.6" cy="239.9" rx="22.1" ry="13.1" transform="rotate(103 363.6 239.9)" fill="#e61f16" stroke="#8e0a06" stroke-width="0.9"/>
<ellipse cx="345.5" cy="229.7" rx="22.1" ry="13.1" transform="rotate(136 345.5 229.7)" fill="#f2361f" stroke="#8e0a06" stroke-width="0.9"/>
<ellipse cx="335.8" cy="211.2" rx="22.1" ry="13.1" transform="rotate(169 335.8 211.2)" fill="#ee2a1c" stroke="#8e0a06" stroke-width="0.9"/>
<ellipse cx="337.6" cy="190.5" rx="22.1" ry="13.1" transform="rotate(201 337.6 190.5)" fill="#dc1a12" stroke="#8e0a06" stroke-width="0.9"/>
<ellipse cx="350.4" cy="174.1" rx="22.1" ry="13.1" transform="rotate(234 350.4 174.1)" fill="#e61f16" stroke="#8e0a06" stroke-width="0.9"/>
<ellipse cx="370.0" cy="167.2" rx="22.1" ry="13.1" transform="rotate(267 370.0 167.2)" fill="#e61f16" stroke="#8e0a06" stroke-width="0.9"/>
<ellipse cx="390.2" cy="171.9" rx="22.1" ry="13.1" transform="rotate(300 390.2 171.9)" fill="#dc1a12" stroke="#8e0a06" stroke-width="0.9"/>
<ellipse cx="404.7" cy="186.9" rx="22.1" ry="13.1" transform="rotate(332 404.7 186.9)" fill="#ee2a1c" stroke="#8e0a06" stroke-width="0.9"/>
<ellipse cx="387.5" cy="209.3" rx="16.4" ry="10.7" transform="rotate(19 387.5 209.3)" fill="#dc1a12" stroke="#8e0a06" stroke-width="0.9"/>
<ellipse cx="377.5" cy="219.4" rx="16.4" ry="10.7" transform="rotate(70 377.5 219.4)" fill="#ee2a1c" stroke="#8e0a06" stroke-width="0.9"/>
<ellipse cx="363.4" cy="217.9" rx="16.4" ry="10.7" transform="rotate(122 363.4 217.9)" fill="#e61f16" stroke="#8e0a06" stroke-width="0.9"/>
<ellipse cx="355.7" cy="205.9" rx="16.4" ry="10.7" transform="rotate(173 355.7 205.9)" fill="#f2361f" stroke="#8e0a06" stroke-width="0.9"/>
<ellipse cx="360.3" cy="192.5" rx="16.4" ry="10.7" transform="rotate(225 360.3 192.5)" fill="#dc1a12" stroke="#8e0a06" stroke-width="0.9"/>
<ellipse cx="373.7" cy="187.7" rx="16.4" ry="10.7" transform="rotate(276 373.7 187.7)" fill="#ee2a1c" stroke="#8e0a06" stroke-width="0.9"/>
<ellipse cx="385.8" cy="195.2" rx="16.4" ry="10.7" transform="rotate(328 385.8 195.2)" fill="#ee2a1c" stroke="#8e0a06" stroke-width="0.9"/>
<circle cx="462" cy="132" r="38" fill="#b8100c"/>
<ellipse cx="488.6" cy="133.2" rx="12.9" ry="7.2" transform="rotate(3 488.6 133.2)" fill="#e61f16" stroke="#8e0a06" stroke-width="0.9"/>
<ellipse cx="485.8" cy="143.9" rx="12.9" ry="7.2" transform="rotate(27 485.8 143.9)" fill="#f2361f" stroke="#8e0a06" stroke-width="0.9"/>
<ellipse cx="478.9" cy="152.5" rx="12.9" ry="7.2" transform="rotate(51 478.9 152.5)" fill="#ee2a1c" stroke="#8e0a06" stroke-width="0.9"/>
<ellipse cx="469.1" cy="157.6" rx="12.9" ry="7.2" transform="rotate(75 469.1 157.6)" fill="#ee2a1c" stroke="#8e0a06" stroke-width="0.9"/>
<ellipse cx="458.1" cy="158.3" rx="12.9" ry="7.2" transform="rotate(99 458.1 158.3)" fill="#e61f16" stroke="#8e0a06" stroke-width="0.9"/>
<ellipse cx="447.7" cy="154.4" rx="12.9" ry="7.2" transform="rotate(123 447.7 154.4)" fill="#ee2a1c" stroke="#8e0a06" stroke-width="0.9"/>
<ellipse cx="439.8" cy="146.7" rx="12.9" ry="7.2" transform="rotate(147 439.8 146.7)" fill="#ee2a1c" stroke="#8e0a06" stroke-width="0.9"/>
<ellipse cx="435.8" cy="136.4" rx="12.9" ry="7.2" transform="rotate(171 435.8 136.4)" fill="#f2361f" stroke="#8e0a06" stroke-width="0.9"/>
<ellipse cx="436.3" cy="125.3" rx="12.9" ry="7.2" transform="rotate(195 436.3 125.3)" fill="#dc1a12" stroke="#8e0a06" stroke-width="0.9"/>
<ellipse cx="441.2" cy="115.4" rx="12.9" ry="7.2" transform="rotate(219 441.2 115.4)" fill="#f2361f" stroke="#8e0a06" stroke-width="0.9"/>
<ellipse cx="449.7" cy="108.4" rx="12.9" ry="7.2" transform="rotate(243 449.7 108.4)" fill="#e61f16" stroke="#8e0a06" stroke-width="0.9"/>
<ellipse cx="460.4" cy="105.4" rx="12.9" ry="7.2" transform="rotate(267 460.4 105.4)" fill="#dc1a12" stroke="#8e0a06" stroke-width="0.9"/>
<ellipse cx="471.3" cy="107.1" rx="12.9" ry="7.2" transform="rotate(291 471.3 107.1)" fill="#e61f16" stroke="#8e0a06" stroke-width="0.9"/>
<ellipse cx="480.7" cy="113.0" rx="12.9" ry="7.2" transform="rotate(315 480.7 113.0)" fill="#f2361f" stroke="#8e0a06" stroke-width="0.9"/>
<ellipse cx="486.8" cy="122.3" rx="12.9" ry="7.2" transform="rotate(339 486.8 122.3)" fill="#f2361f" stroke="#8e0a06" stroke-width="0.9"/>
<ellipse cx="478.7" cy="135.4" rx="10.3" ry="6.1" transform="rotate(12 478.7 135.4)" fill="#f2361f" stroke="#8e0a06" stroke-width="0.9"/>
<ellipse cx="474.2" cy="144.0" rx="10.3" ry="6.1" transform="rotate(44 474.2 144.0)" fill="#e61f16" stroke="#8e0a06" stroke-width="0.9"/>
<ellipse cx="465.8" cy="148.7" rx="10.3" ry="6.1" transform="rotate(77 465.8 148.7)" fill="#dc1a12" stroke="#8e0a06" stroke-width="0.9"/>
<ellipse cx="456.2" cy="148.1" rx="10.3" ry="6.1" transform="rotate(110 456.2 148.1)" fill="#e61f16" stroke="#8e0a06" stroke-width="0.9"/>
<ellipse cx="448.4" cy="142.4" rx="10.3" ry="6.1" transform="rotate(143 448.4 142.4)" fill="#dc1a12" stroke="#8e0a06" stroke-width="0.9"/>
<ellipse cx="445.0" cy="133.4" rx="10.3" ry="6.1" transform="rotate(175 445.0 133.4)" fill="#dc1a12" stroke="#8e0a06" stroke-width="0.9"/>
<ellipse cx="446.9" cy="124.0" rx="10.3" ry="6.1" transform="rotate(208 446.9 124.0)" fill="#e61f16" stroke="#8e0a06" stroke-width="0.9"/>
<ellipse cx="453.6" cy="117.1" rx="10.3" ry="6.1" transform="rotate(241 453.6 117.1)" fill="#ee2a1c" stroke="#8e0a06" stroke-width="0.9"/>
<ellipse cx="463.0" cy="114.9" rx="10.3" ry="6.1" transform="rotate(273 463.0 114.9)" fill="#dc1a12" stroke="#8e0a06" stroke-width="0.9"/>
<ellipse cx="472.1" cy="118.2" rx="10.3" ry="6.1" transform="rotate(306 472.1 118.2)" fill="#ee2a1c" stroke="#8e0a06" stroke-width="0.9"/>
<ellipse cx="478.0" cy="125.8" rx="10.3" ry="6.1" transform="rotate(339 478.0 125.8)" fill="#ee2a1c" stroke="#8e0a06" stroke-width="0.9"/>
<ellipse cx="469.6" cy="132.8" rx="7.6" ry="4.9" transform="rotate(6 469.6 132.8)" fill="#dc1a12" stroke="#8e0a06" stroke-width="0.9"/>
<ellipse cx="466.1" cy="138.4" rx="7.6" ry="4.9" transform="rotate(58 466.1 138.4)" fill="#f2361f" stroke="#8e0a06" stroke-width="0.9"/>
<ellipse cx="459.5" cy="139.2" rx="7.6" ry="4.9" transform="rotate(109 459.5 139.2)" fill="#e61f16" stroke="#8e0a06" stroke-width="0.9"/>
<ellipse cx="454.8" cy="134.5" rx="7.6" ry="4.9" transform="rotate(161 454.8 134.5)" fill="#dc1a12" stroke="#8e0a06" stroke-width="0.9"/>
<ellipse cx="455.6" cy="128.0" rx="7.6" ry="4.9" transform="rotate(212 455.6 128.0)" fill="#ee2a1c" stroke="#8e0a06" stroke-width="0.9"/>
<ellipse cx="461.1" cy="124.5" rx="7.6" ry="4.9" transform="rotate(263 461.1 124.5)" fill="#e61f16" stroke="#8e0a06" stroke-width="0.9"/>
<ellipse cx="467.4" cy="126.6" rx="7.6" ry="4.9" transform="rotate(315 467.4 126.6)" fill="#f2361f" stroke="#8e0a06" stroke-width="0.9"/>
<circle cx="273" cy="262" r="18" fill="#b8100c"/>
<ellipse cx="284.8" cy="266.5" rx="6.1" ry="3.4" transform="rotate(21 284.8 266.5)" fill="#e61f16" stroke="#8e0a06" stroke-width="0.9"/>
<ellipse cx="281.9" cy="270.9" rx="6.1" ry="3.4" transform="rotate(45 281.9 270.9)" fill="#e61f16" stroke="#8e0a06" stroke-width="0.9"/>
<ellipse cx="277.6" cy="273.7" rx="6.1" ry="3.4" transform="rotate(69 277.6 273.7)" fill="#dc1a12" stroke="#8e0a06" stroke-width="0.9"/>
<ellipse cx="272.4" cy="274.6" rx="6.1" ry="3.4" transform="rotate(93 272.4 274.6)" fill="#dc1a12" stroke="#8e0a06" stroke-width="0.9"/>
<ellipse cx="267.3" cy="273.2" rx="6.1" ry="3.4" transform="rotate(117 267.3 273.2)" fill="#dc1a12" stroke="#8e0a06" stroke-width="0.9"/>
<ellipse cx="263.2" cy="270.0" rx="6.1" ry="3.4" transform="rotate(141 263.2 270.0)" fill="#f2361f" stroke="#8e0a06" stroke-width="0.9"/>
<ellipse cx="260.8" cy="265.3" rx="6.1" ry="3.4" transform="rotate(165 260.8 265.3)" fill="#f2361f" stroke="#8e0a06" stroke-width="0.9"/>
<ellipse cx="260.5" cy="260.1" rx="6.1" ry="3.4" transform="rotate(189 260.5 260.1)" fill="#e61f16" stroke="#8e0a06" stroke-width="0.9"/>
<ellipse cx="262.4" cy="255.2" rx="6.1" ry="3.4" transform="rotate(213 262.4 255.2)" fill="#f2361f" stroke="#8e0a06" stroke-width="0.9"/>
<ellipse cx="266.1" cy="251.5" rx="6.1" ry="3.4" transform="rotate(237 266.1 251.5)" fill="#e61f16" stroke="#8e0a06" stroke-width="0.9"/>
<ellipse cx="271.0" cy="249.6" rx="6.1" ry="3.4" transform="rotate(261 271.0 249.6)" fill="#f2361f" stroke="#8e0a06" stroke-width="0.9"/>
<ellipse cx="276.2" cy="249.8" rx="6.1" ry="3.4" transform="rotate(285 276.2 249.8)" fill="#ee2a1c" stroke="#8e0a06" stroke-width="0.9"/>
<ellipse cx="280.9" cy="252.2" rx="6.1" ry="3.4" transform="rotate(309 280.9 252.2)" fill="#f2361f" stroke="#8e0a06" stroke-width="0.9"/>
<ellipse cx="284.2" cy="256.2" rx="6.1" ry="3.4" transform="rotate(333 284.2 256.2)" fill="#dc1a12" stroke="#8e0a06" stroke-width="0.9"/>
<ellipse cx="285.6" cy="261.3" rx="6.1" ry="3.4" transform="rotate(357 285.6 261.3)" fill="#f2361f" stroke="#8e0a06" stroke-width="0.9"/>
<ellipse cx="281.0" cy="263.0" rx="4.9" ry="2.9" transform="rotate(7 281.0 263.0)" fill="#e61f16" stroke="#8e0a06" stroke-width="0.9"/>
<ellipse cx="279.2" cy="267.2" rx="4.9" ry="2.9" transform="rotate(40 279.2 267.2)" fill="#e61f16" stroke="#8e0a06" stroke-width="0.9"/>
<ellipse cx="275.4" cy="269.7" rx="4.9" ry="2.9" transform="rotate(73 275.4 269.7)" fill="#dc1a12" stroke="#8e0a06" stroke-width="0.9"/>
<ellipse cx="270.8" cy="269.8" rx="4.9" ry="2.9" transform="rotate(106 270.8 269.8)" fill="#f2361f" stroke="#8e0a06" stroke-width="0.9"/>
<ellipse cx="266.9" cy="267.4" rx="4.9" ry="2.9" transform="rotate(138 266.9 267.4)" fill="#dc1a12" stroke="#8e0a06" stroke-width="0.9"/>
<ellipse cx="265.0" cy="263.3" rx="4.9" ry="2.9" transform="rotate(171 265.0 263.3)" fill="#dc1a12" stroke="#8e0a06" stroke-width="0.9"/>
<ellipse cx="265.6" cy="258.7" rx="4.9" ry="2.9" transform="rotate(204 265.6 258.7)" fill="#f2361f" stroke="#8e0a06" stroke-width="0.9"/>
<ellipse cx="268.5" cy="255.2" rx="4.9" ry="2.9" transform="rotate(237 268.5 255.2)" fill="#dc1a12" stroke="#8e0a06" stroke-width="0.9"/>
<ellipse cx="272.9" cy="253.9" rx="4.9" ry="2.9" transform="rotate(269 272.9 253.9)" fill="#dc1a12" stroke="#8e0a06" stroke-width="0.9"/>
<ellipse cx="277.3" cy="255.1" rx="4.9" ry="2.9" transform="rotate(302 277.3 255.1)" fill="#e61f16" stroke="#8e0a06" stroke-width="0.9"/>
<ellipse cx="280.3" cy="258.5" rx="4.9" ry="2.9" transform="rotate(335 280.3 258.5)" fill="#f2361f" stroke="#8e0a06" stroke-width="0.9"/>
<ellipse cx="276.0" cy="264.0" rx="3.6" ry="2.3" transform="rotate(35 276.0 264.0)" fill="#dc1a12" stroke="#8e0a06" stroke-width="0.9"/>
<ellipse cx="273.2" cy="265.6" rx="3.6" ry="2.3" transform="rotate(86 273.2 265.6)" fill="#f2361f" stroke="#8e0a06" stroke-width="0.9"/>
<ellipse cx="270.3" cy="264.4" rx="3.6" ry="2.3" transform="rotate(138 270.3 264.4)" fill="#f2361f" stroke="#8e0a06" stroke-width="0.9"/>
<ellipse cx="269.4" cy="261.4" rx="3.6" ry="2.3" transform="rotate(189 269.4 261.4)" fill="#e61f16" stroke="#8e0a06" stroke-width="0.9"/>
<ellipse cx="271.2" cy="258.9" rx="3.6" ry="2.3" transform="rotate(240 271.2 258.9)" fill="#dc1a12" stroke="#8e0a06" stroke-width="0.9"/>
<ellipse cx="274.3" cy="258.7" rx="3.6" ry="2.3" transform="rotate(292 274.3 258.7)" fill="#e61f16" stroke="#8e0a06" stroke-width="0.9"/>
<ellipse cx="276.4" cy="261.0" rx="3.6" ry="2.3" transform="rotate(343 276.4 261.0)" fill="#e61f16" stroke="#8e0a06" stroke-width="0.9"/>
<circle cx="168" cy="116" r="10" fill="#b8100c"/>
<ellipse cx="174.9" cy="116.9" rx="3.4" ry="1.9" transform="rotate(7 174.9 116.9)" fill="#dc1a12" stroke="#8e0a06" stroke-width="0.9"/>
<ellipse cx="174.0" cy="119.6" rx="3.4" ry="1.9" transform="rotate(31 174.0 119.6)" fill="#ee2a1c" stroke="#8e0a06" stroke-width="0.9"/>
<ellipse cx="172.0" cy="121.7" rx="3.4" ry="1.9" transform="rotate(55 172.0 121.7)" fill="#e61f16" stroke="#8e0a06" stroke-width="0.9"/>
<ellipse cx="169.3" cy="122.9" rx="3.4" ry="1.9" transform="rotate(79 169.3 122.9)" fill="#ee2a1c" stroke="#8e0a06" stroke-width="0.9"/>
<ellipse cx="166.4" cy="122.8" rx="3.4" ry="1.9" transform="rotate(103 166.4 122.8)" fill="#e61f16" stroke="#8e0a06" stroke-width="0.9"/>
<ellipse cx="163.8" cy="121.6" rx="3.4" ry="1.9" transform="rotate(127 163.8 121.6)" fill="#f2361f" stroke="#8e0a06" stroke-width="0.9"/>
<ellipse cx="161.9" cy="119.4" rx="3.4" ry="1.9" transform="rotate(151 161.9 119.4)" fill="#e61f16" stroke="#8e0a06" stroke-width="0.9"/>
<ellipse cx="161.0" cy="116.6" rx="3.4" ry="1.9" transform="rotate(175 161.0 116.6)" fill="#e61f16" stroke="#8e0a06" stroke-width="0.9"/>
<ellipse cx="161.4" cy="113.7" rx="3.4" ry="1.9" transform="rotate(199 161.4 113.7)" fill="#dc1a12" stroke="#8e0a06" stroke-width="0.9"/>
<ellipse cx="162.9" cy="111.2" rx="3.4" ry="1.9" transform="rotate(223 162.9 111.2)" fill="#e61f16" stroke="#8e0a06" stroke-width="0.9"/>
<ellipse cx="165.3" cy="109.6" rx="3.4" ry="1.9" transform="rotate(247 165.3 109.6)" fill="#f2361f" stroke="#8e0a06" stroke-width="0.9"/>
<ellipse cx="168.1" cy="109.0" rx="3.4" ry="1.9" transform="rotate(271 168.1 109.0)" fill="#ee2a1c" stroke="#8e0a06" stroke-width="0.9"/>
<ellipse cx="171.0" cy="109.7" rx="3.4" ry="1.9" transform="rotate(295 171.0 109.7)" fill="#e61f16" stroke="#8e0a06" stroke-width="0.9"/>
<ellipse cx="173.3" cy="111.4" rx="3.4" ry="1.9" transform="rotate(319 173.3 111.4)" fill="#f2361f" stroke="#8e0a06" stroke-width="0.9"/>
<ellipse cx="174.7" cy="114.0" rx="3.4" ry="1.9" transform="rotate(343 174.7 114.0)" fill="#e61f16" stroke="#8e0a06" stroke-width="0.9"/>
<ellipse cx="172.4" cy="117.0" rx="2.7" ry="1.6" transform="rotate(13 172.4 117.0)" fill="#f2361f" stroke="#8e0a06" stroke-width="0.9"/>
<ellipse cx="171.1" cy="119.2" rx="2.7" ry="1.6" transform="rotate(46 171.1 119.2)" fill="#e61f16" stroke="#8e0a06" stroke-width="0.9"/>
<ellipse cx="168.9" cy="120.4" rx="2.7" ry="1.6" transform="rotate(79 168.9 120.4)" fill="#dc1a12" stroke="#8e0a06" stroke-width="0.9"/>
<ellipse cx="166.4" cy="120.2" rx="2.7" ry="1.6" transform="rotate(111 166.4 120.2)" fill="#f2361f" stroke="#8e0a06" stroke-width="0.9"/>
<ellipse cx="164.4" cy="118.6" rx="2.7" ry="1.6" transform="rotate(144 164.4 118.6)" fill="#dc1a12" stroke="#8e0a06" stroke-width="0.9"/>
<ellipse cx="163.5" cy="116.3" rx="2.7" ry="1.6" transform="rotate(177 163.5 116.3)" fill="#f2361f" stroke="#8e0a06" stroke-width="0.9"/>
<ellipse cx="164.1" cy="113.8" rx="2.7" ry="1.6" transform="rotate(210 164.1 113.8)" fill="#ee2a1c" stroke="#8e0a06" stroke-width="0.9"/>
<ellipse cx="165.9" cy="112.0" rx="2.7" ry="1.6" transform="rotate(242 165.9 112.0)" fill="#dc1a12" stroke="#8e0a06" stroke-width="0.9"/>
<ellipse cx="168.4" cy="111.5" rx="2.7" ry="1.6" transform="rotate(275 168.4 111.5)" fill="#f2361f" stroke="#8e0a06" stroke-width="0.9"/>
<ellipse cx="170.8" cy="112.4" rx="2.7" ry="1.6" transform="rotate(308 170.8 112.4)" fill="#e61f16" stroke="#8e0a06" stroke-width="0.9"/>
<ellipse cx="172.2" cy="114.5" rx="2.7" ry="1.6" transform="rotate(340 172.2 114.5)" fill="#e61f16" stroke="#8e0a06" stroke-width="0.9"/>
<ellipse cx="169.7" cy="117.0" rx="2.0" ry="1.3" transform="rotate(31 169.7 117.0)" fill="#ee2a1c" stroke="#8e0a06" stroke-width="0.9"/>
<ellipse cx="168.3" cy="118.0" rx="2.0" ry="1.3" transform="rotate(82 168.3 118.0)" fill="#f2361f" stroke="#8e0a06" stroke-width="0.9"/>
<ellipse cx="166.6" cy="117.4" rx="2.0" ry="1.3" transform="rotate(134 166.6 117.4)" fill="#e61f16" stroke="#8e0a06" stroke-width="0.9"/>
<ellipse cx="166.0" cy="115.8" rx="2.0" ry="1.3" transform="rotate(185 166.0 115.8)" fill="#ee2a1c" stroke="#8e0a06" stroke-width="0.9"/>
<ellipse cx="166.9" cy="114.3" rx="2.0" ry="1.3" transform="rotate(237 166.9 114.3)" fill="#dc1a12" stroke="#8e0a06" stroke-width="0.9"/>
<ellipse cx="168.6" cy="114.1" rx="2.0" ry="1.3" transform="rotate(288 168.6 114.1)" fill="#ee2a1c" stroke="#8e0a06" stroke-width="0.9"/>
<ellipse cx="169.9" cy="115.3" rx="2.0" ry="1.3" transform="rotate(339 169.9 115.3)" fill="#f2361f" stroke="#8e0a06" stroke-width="0.9"/>
<circle cx="392" cy="56" r="14" fill="#5f9a3a"/><circle cx="371" cy="194" r="10" fill="#d89a10"/><circle cx="371" cy="194" r="5" fill="#a06008"/><circle cx="256" cy="82" r="5" fill="#e0a010" opacity="0.8"/><circle cx="268" cy="98" r="5" fill="#400606"/>
</g>
<filter id="rnoise2" x="0" y="0" width="100%" height="100%"><feTurbulence type="fractalNoise" baseFrequency="0.12 0.16" numOctaves="3" seed="13"/><feColorMatrix type="matrix" values="0 0 0 0 0  0 0 0 0 0  0 0 0 0 0  0 0 0 1.8 -0.8"/></filter>
<rect x="0" y="0" width="446.5" height="278.5" filter="url(#rnoise2)" opacity="0.35"/>
<g>
</g>
<text transform="translate(461.6,-16.6) rotate(34)" text-anchor="middle" dominant-baseline="middle" font-size="4.5" font-weight="bold" fill="#ffffff" fill-opacity="0.92" stroke="#ffffff" stroke-width="0.3" stroke-opacity="0.8" font-family="Liberation Sans">PixMarka © My Brand</text>
<text transform="translate(350.1,-28.4) rotate(34)" text-anchor="middle" dominant-baseline="middle" font-size="4.5" font-weight="bold" fill="#ffffff" fill-opacity="0.92" stroke="#ffffff" stroke-width="0.3" stroke-opacity="0.8" font-family="Liberation Sans">PixMarka © My Brand</text>
<text transform="translate(391.2,-0.7) rotate(34)" text-anchor="middle" dominant-baseline="middle" font-size="4.5" font-weight="bold" fill="#ffffff" fill-opacity="0.92" stroke="#ffffff" stroke-width="0.3" stroke-opacity="0.8" font-family="Liberation Sans">PixMarka © My Brand</text>
<text transform="translate(432.2,27.0) rotate(34)" text-anchor="middle" dominant-baseline="middle" font-size="4.5" font-weight="bold" fill="#ffffff" fill-opacity="0.92" stroke="#ffffff" stroke-width="0.3" stroke-opacity="0.8" font-family="Liberation Sans">PixMarka © My Brand</text>
<text transform="translate(473.2,54.7) rotate(34)" text-anchor="middle" dominant-baseline="middle" font-size="4.5" font-weight="bold" fill="#ffffff" fill-opacity="0.92" stroke="#ffffff" stroke-width="0.3" stroke-opacity="0.8" font-family="Liberation Sans">PixMarka © My Brand</text>
<text transform="translate(279.7,-12.4) rotate(34)" text-anchor="middle" dominant-baseline="middle" font-size="4.5" font-weight="bold" fill="#ffffff" fill-opacity="0.92" stroke="#ffffff" stroke-width="0.3" stroke-opacity="0.8" font-family="Liberation Sans">PixMarka © My Brand</text>
<text transform="translate(320.7,15.2) rotate(34)" text-anchor="middle" dominant-baseline="middle" font-size="4.5" font-weight="bold" fill="#ffffff" fill-opacity="0.92" stroke="#ffffff" stroke-width="0.3" stroke-opacity="0.8" font-family="Liberation Sans">PixMarka © My Brand</text>
<text transform="translate(361.7,42.9) rotate(34)" text-anchor="middle" dominant-baseline="middle" font-size="4.5" font-weight="bold" fill="#ffffff" fill-opacity="0.92" stroke="#ffffff" stroke-width="0.3" stroke-opacity="0.8" font-family="Liberation Sans">PixMarka © My Brand</text>
<text transform="translate(402.8,70.6) rotate(34)" text-anchor="middle" dominant-baseline="middle" font-size="4.5" font-weight="bold" fill="#ffffff" fill-opacity="0.92" stroke="#ffffff" stroke-width="0.3" stroke-opacity="0.8" font-family="Liberation Sans">PixMarka © My Brand</text>
<text transform="translate(443.8,98.3) rotate(34)" text-anchor="middle" dominant-baseline="middle" font-size="4.5" font-weight="bold" fill="#ffffff" fill-opacity="0.92" stroke="#ffffff" stroke-width="0.3" stroke-opacity="0.8" font-family="Liberation Sans">PixMarka © My Brand</text>
<text transform="translate(168.2,-24.2) rotate(34)" text-anchor="middle" dominant-baseline="middle" font-size="4.5" font-weight="bold" fill="#ffffff" fill-opacity="0.92" stroke="#ffffff" stroke-width="0.3" stroke-opacity="0.8" font-family="Liberation Sans">PixMarka © My Brand</text>
<text transform="translate(209.2,3.5) rotate(34)" text-anchor="middle" dominant-baseline="middle" font-size="4.5" font-weight="bold" fill="#ffffff" fill-opacity="0.92" stroke="#ffffff" stroke-width="0.3" stroke-opacity="0.8" font-family="Liberation Sans">PixMarka © My Brand</text>
<text transform="translate(250.3,31.2) rotate(34)" text-anchor="middle" dominant-baseline="middle" font-size="4.5" font-weight="bold" fill="#ffffff" fill-opacity="0.92" stroke="#ffffff" stroke-width="0.3" stroke-opacity="0.8" font-family="Liberation Sans">PixMarka © My Brand</text>
<text transform="translate(291.3,58.8) rotate(34)" text-anchor="middle" dominant-baseline="middle" font-size="4.5" font-weight="bold" fill="#ffffff" fill-opacity="0.92" stroke="#ffffff" stroke-width="0.3" stroke-opacity="0.8" font-family="Liberation Sans">PixMarka © My Brand</text>
<text transform="translate(332.3,86.5) rotate(34)" text-anchor="middle" dominant-baseline="middle" font-size="4.5" font-weight="bold" fill="#ffffff" fill-opacity="0.92" stroke="#ffffff" stroke-width="0.3" stroke-opacity="0.8" font-family="Liberation Sans">PixMarka © My Brand</text>
<text transform="translate(373.4,114.2) rotate(34)" text-anchor="middle" dominant-baseline="middle" font-size="4.5" font-weight="bold" fill="#ffffff" fill-opacity="0.92" stroke="#ffffff" stroke-width="0.3" stroke-opacity="0.8" font-family="Liberation Sans">PixMarka © My Brand</text>
<text transform="translate(414.4,141.9) rotate(34)" text-anchor="middle" dominant-baseline="middle" font-size="4.5" font-weight="bold" fill="#ffffff" fill-opacity="0.92" stroke="#ffffff" stroke-width="0.3" stroke-opacity="0.8" font-family="Liberation Sans">PixMarka © My Brand</text>
<text transform="translate(455.4,169.6) rotate(34)" text-anchor="middle" dominant-baseline="middle" font-size="4.5" font-weight="bold" fill="#ffffff" fill-opacity="0.92" stroke="#ffffff" stroke-width="0.3" stroke-opacity="0.8" font-family="Liberation Sans">PixMarka © My Brand</text>
<text transform="translate(97.7,-8.3) rotate(34)" text-anchor="middle" dominant-baseline="middle" font-size="4.5" font-weight="bold" fill="#ffffff" fill-opacity="0.92" stroke="#ffffff" stroke-width="0.3" stroke-opacity="0.8" font-family="Liberation Sans">PixMarka © My Brand</text>
<text transform="translate(138.8,19.4) rotate(34)" text-anchor="middle" dominant-baseline="middle" font-size="4.5" font-weight="bold" fill="#ffffff" fill-opacity="0.92" stroke="#ffffff" stroke-width="0.3" stroke-opacity="0.8" font-family="Liberation Sans">PixMarka © My Brand</text>
<text transform="translate(179.8,47.1) rotate(34)" text-anchor="middle" dominant-baseline="middle" font-size="4.5" font-weight="bold" fill="#ffffff" fill-opacity="0.92" stroke="#ffffff" stroke-width="0.3" stroke-opacity="0.8" font-family="Liberation Sans">PixMarka © My Brand</text>
<text transform="translate(220.8,74.8) rotate(34)" text-anchor="middle" dominant-baseline="middle" font-size="4.5" font-weight="bold" fill="#ffffff" fill-opacity="0.92" stroke="#ffffff" stroke-width="0.3" stroke-opacity="0.8" font-family="Liberation Sans">PixMarka © My Brand</text>
<text transform="translate(261.9,102.5) rotate(34)" text-anchor="middle" dominant-baseline="middle" font-size="4.5" font-weight="bold" fill="#ffffff" fill-opacity="0.92" stroke="#ffffff" stroke-width="0.3" stroke-opacity="0.8" font-family="Liberation Sans">PixMarka © My Brand</text>
<text transform="translate(302.9,130.1) rotate(34)" text-anchor="middle" dominant-baseline="middle" font-size="4.5" font-weight="bold" fill="#ffffff" fill-opacity="0.92" stroke="#ffffff" stroke-width="0.3" stroke-opacity="0.8" font-family="Liberation Sans">PixMarka © My Brand</text>
<text transform="translate(344.0,157.8) rotate(34)" text-anchor="middle" dominant-baseline="middle" font-size="4.5" font-weight="bold" fill="#ffffff" fill-opacity="0.92" stroke="#ffffff" stroke-width="0.3" stroke-opacity="0.8" font-family="Liberation Sans">PixMarka © My Brand</text>
<text transform="translate(385.0,185.5) rotate(34)" text-anchor="middle" dominant-baseline="middle" font-size="4.5" font-weight="bold" fill="#ffffff" fill-opacity="0.92" stroke="#ffffff" stroke-width="0.3" stroke-opacity="0.8" font-family="Liberation Sans">PixMarka © My Brand</text>
<text transform="translate(426.0,213.2) rotate(34)" text-anchor="middle" dominant-baseline="middle" font-size="4.5" font-weight="bold" fill="#ffffff" fill-opacity="0.92" stroke="#ffffff" stroke-width="0.3" stroke-opacity="0.8" font-family="Liberation Sans">PixMarka © My Brand</text>
<text transform="translate(467.1,240.9) rotate(34)" text-anchor="middle" dominant-baseline="middle" font-size="4.5" font-weight="bold" fill="#ffffff" fill-opacity="0.92" stroke="#ffffff" stroke-width="0.3" stroke-opacity="0.8" font-family="Liberation Sans">PixMarka © My Brand</text>
<text transform="translate(-13.8,-20.0) rotate(34)" text-anchor="middle" dominant-baseline="middle" font-size="4.5" font-weight="bold" fill="#ffffff" fill-opacity="0.92" stroke="#ffffff" stroke-width="0.3" stroke-opacity="0.8" font-family="Liberation Sans">PixMarka © My Brand</text>
<text transform="translate(27.3,7.7) rotate(34)" text-anchor="middle" dominant-baseline="middle" font-size="4.5" font-weight="bold" fill="#ffffff" fill-opacity="0.92" stroke="#ffffff" stroke-width="0.3" stroke-opacity="0.8" font-family="Liberation Sans">PixMarka © My Brand</text>
<text transform="translate(68.3,35.3) rotate(34)" text-anchor="middle" dominant-baseline="middle" font-size="4.5" font-weight="bold" fill="#ffffff" fill-opacity="0.92" stroke="#ffffff" stroke-width="0.3" stroke-opacity="0.8" font-family="Liberation Sans">PixMarka © My Brand</text>
<text transform="translate(109.4,63.0) rotate(34)" text-anchor="middle" dominant-baseline="middle" font-size="4.5" font-weight="bold" fill="#ffffff" fill-opacity="0.92" stroke="#ffffff" stroke-width="0.3" stroke-opacity="0.8" font-family="Liberation Sans">PixMarka © My Brand</text>
<text transform="translate(150.4,90.7) rotate(34)" text-anchor="middle" dominant-baseline="middle" font-size="4.5" font-weight="bold" fill="#ffffff" fill-opacity="0.92" stroke="#ffffff" stroke-width="0.3" stroke-opacity="0.8" font-family="Liberation Sans">PixMarka © My Brand</text>
<text transform="translate(191.4,118.4) rotate(34)" text-anchor="middle" dominant-baseline="middle" font-size="4.5" font-weight="bold" fill="#ffffff" fill-opacity="0.92" stroke="#ffffff" stroke-width="0.3" stroke-opacity="0.8" font-family="Liberation Sans">PixMarka © My Brand</text>
<text transform="translate(232.5,146.1) rotate(34)" text-anchor="middle" dominant-baseline="middle" font-size="4.5" font-weight="bold" fill="#ffffff" fill-opacity="0.92" stroke="#ffffff" stroke-width="0.3" stroke-opacity="0.8" font-family="Liberation Sans">PixMarka © My Brand</text>
<text transform="translate(273.5,173.7) rotate(34)" text-anchor="middle" dominant-baseline="middle" font-size="4.5" font-weight="bold" fill="#ffffff" fill-opacity="0.92" stroke="#ffffff" stroke-width="0.3" stroke-opacity="0.8" font-family="Liberation Sans">PixMarka © My Brand</text>
<text transform="translate(314.5,201.4) rotate(34)" text-anchor="middle" dominant-baseline="middle" font-size="4.5" font-weight="bold" fill="#ffffff" fill-opacity="0.92" stroke="#ffffff" stroke-width="0.3" stroke-opacity="0.8" font-family="Liberation Sans">PixMarka © My Brand</text>
<text transform="translate(355.6,229.1) rotate(34)" text-anchor="middle" dominant-baseline="middle" font-size="4.5" font-weight="bold" fill="#ffffff" fill-opacity="0.92" stroke="#ffffff" stroke-width="0.3" stroke-opacity="0.8" font-family="Liberation Sans">PixMarka © My Brand</text>
<text transform="translate(396.6,256.8) rotate(34)" text-anchor="middle" dominant-baseline="middle" font-size="4.5" font-weight="bold" fill="#ffffff" fill-opacity="0.92" stroke="#ffffff" stroke-width="0.3" stroke-opacity="0.8" font-family="Liberation Sans">PixMarka © My Brand</text>
<text transform="translate(437.7,284.5) rotate(34)" text-anchor="middle" dominant-baseline="middle" font-size="4.5" font-weight="bold" fill="#ffffff" fill-opacity="0.92" stroke="#ffffff" stroke-width="0.3" stroke-opacity="0.8" font-family="Liberation Sans">PixMarka © My Brand</text>
<text transform="translate(-2.1,51.3) rotate(34)" text-anchor="middle" dominant-baseline="middle" font-size="4.5" font-weight="bold" fill="#ffffff" fill-opacity="0.92" stroke="#ffffff" stroke-width="0.3" stroke-opacity="0.8" font-family="Liberation Sans">PixMarka © My Brand</text>
<text transform="translate(38.9,79.0) rotate(34)" text-anchor="middle" dominant-baseline="middle" font-size="4.5" font-weight="bold" fill="#ffffff" fill-opacity="0.92" stroke="#ffffff" stroke-width="0.3" stroke-opacity="0.8" font-family="Liberation Sans">PixMarka © My Brand</text>
<text transform="translate(79.9,106.6) rotate(34)" text-anchor="middle" dominant-baseline="middle" font-size="4.5" font-weight="bold" fill="#ffffff" fill-opacity="0.92" stroke="#ffffff" stroke-width="0.3" stroke-opacity="0.8" font-family="Liberation Sans">PixMarka © My Brand</text>
<text transform="translate(121.0,134.3) rotate(34)" text-anchor="middle" dominant-baseline="middle" font-size="4.5" font-weight="bold" fill="#ffffff" fill-opacity="0.92" stroke="#ffffff" stroke-width="0.3" stroke-opacity="0.8" font-family="Liberation Sans">PixMarka © My Brand</text>
<text transform="translate(162.0,162.0) rotate(34)" text-anchor="middle" dominant-baseline="middle" font-size="4.5" font-weight="bold" fill="#ffffff" fill-opacity="0.92" stroke="#ffffff" stroke-width="0.3" stroke-opacity="0.8" font-family="Liberation Sans">PixMarka © My Brand</text>
<text transform="translate(203.1,189.7) rotate(34)" text-anchor="middle" dominant-baseline="middle" font-size="4.5" font-weight="bold" fill="#ffffff" fill-opacity="0.92" stroke="#ffffff" stroke-width="0.3" stroke-opacity="0.8" font-family="Liberation Sans">PixMarka © My Brand</text>
<text transform="translate(244.1,217.4) rotate(34)" text-anchor="middle" dominant-baseline="middle" font-size="4.5" font-weight="bold" fill="#ffffff" fill-opacity="0.92" stroke="#ffffff" stroke-width="0.3" stroke-opacity="0.8" font-family="Liberation Sans">PixMarka © My Brand</text>
<text transform="translate(285.1,245.0) rotate(34)" text-anchor="middle" dominant-baseline="middle" font-size="4.5" font-weight="bold" fill="#ffffff" fill-opacity="0.92" stroke="#ffffff" stroke-width="0.3" stroke-opacity="0.8" font-family="Liberation Sans">PixMarka © My Brand</text>
<text transform="translate(326.2,272.7) rotate(34)" text-anchor="middle" dominant-baseline="middle" font-size="4.5" font-weight="bold" fill="#ffffff" fill-opacity="0.92" stroke="#ffffff" stroke-width="0.3" stroke-opacity="0.8" font-family="Liberation Sans">PixMarka © My Brand</text>
<text transform="translate(367.2,300.4) rotate(34)" text-anchor="middle" dominant-baseline="middle" font-size="4.5" font-weight="bold" fill="#ffffff" fill-opacity="0.92" stroke="#ffffff" stroke-width="0.3" stroke-opacity="0.8" font-family="Liberation Sans">PixMarka © My Brand</text>
<text transform="translate(9.5,122.6) rotate(34)" text-anchor="middle" dominant-baseline="middle" font-size="4.5" font-weight="bold" fill="#ffffff" fill-opacity="0.92" stroke="#ffffff" stroke-width="0.3" stroke-opacity="0.8" font-family="Liberation Sans">PixMarka © My Brand</text>
<text transform="translate(50.5,150.2) rotate(34)" text-anchor="middle" dominant-baseline="middle" font-size="4.5" font-weight="bold" fill="#ffffff" fill-opacity="0.92" stroke="#ffffff" stroke-width="0.3" stroke-opacity="0.8" font-family="Liberation Sans">PixMarka © My Brand</text>
<text transform="translate(91.6,177.9) rotate(34)" text-anchor="middle" dominant-baseline="middle" font-size="4.5" font-weight="bold" fill="#ffffff" fill-opacity="0.92" stroke="#ffffff" stroke-width="0.3" stroke-opacity="0.8" font-family="Liberation Sans">PixMarka © My Brand</text>
<text transform="translate(132.6,205.6) rotate(34)" text-anchor="middle" dominant-baseline="middle" font-size="4.5" font-weight="bold" fill="#ffffff" fill-opacity="0.92" stroke="#ffffff" stroke-width="0.3" stroke-opacity="0.8" font-family="Liberation Sans">PixMarka © My Brand</text>
<text transform="translate(173.6,233.3) rotate(34)" text-anchor="middle" dominant-baseline="middle" font-size="4.5" font-weight="bold" fill="#ffffff" fill-opacity="0.92" stroke="#ffffff" stroke-width="0.3" stroke-opacity="0.8" font-family="Liberation Sans">PixMarka © My Brand</text>
<text transform="translate(214.7,261.0) rotate(34)" text-anchor="middle" dominant-baseline="middle" font-size="4.5" font-weight="bold" fill="#ffffff" fill-opacity="0.92" stroke="#ffffff" stroke-width="0.3" stroke-opacity="0.8" font-family="Liberation Sans">PixMarka © My Brand</text>
<text transform="translate(255.7,288.6) rotate(34)" text-anchor="middle" dominant-baseline="middle" font-size="4.5" font-weight="bold" fill="#ffffff" fill-opacity="0.92" stroke="#ffffff" stroke-width="0.3" stroke-opacity="0.8" font-family="Liberation Sans">PixMarka © My Brand</text>
<text transform="translate(-19.9,166.2) rotate(34)" text-anchor="middle" dominant-baseline="middle" font-size="4.5" font-weight="bold" fill="#ffffff" fill-opacity="0.92" stroke="#ffffff" stroke-width="0.3" stroke-opacity="0.8" font-family="Liberation Sans">PixMarka © My Brand</text>
<text transform="translate(21.1,193.8) rotate(34)" text-anchor="middle" dominant-baseline="middle" font-size="4.5" font-weight="bold" fill="#ffffff" fill-opacity="0.92" stroke="#ffffff" stroke-width="0.3" stroke-opacity="0.8" font-family="Liberation Sans">PixMarka © My Brand</text>
<text transform="translate(62.1,221.5) rotate(34)" text-anchor="middle" dominant-baseline="middle" font-size="4.5" font-weight="bold" fill="#ffffff" fill-opacity="0.92" stroke="#ffffff" stroke-width="0.3" stroke-opacity="0.8" font-family="Liberation Sans">PixMarka © My Brand</text>
<text transform="translate(103.2,249.2) rotate(34)" text-anchor="middle" dominant-baseline="middle" font-size="4.5" font-weight="bold" fill="#ffffff" fill-opacity="0.92" stroke="#ffffff" stroke-width="0.3" stroke-opacity="0.8" font-family="Liberation Sans">PixMarka © My Brand</text>
<text transform="translate(144.2,276.9) rotate(34)" text-anchor="middle" dominant-baseline="middle" font-size="4.5" font-weight="bold" fill="#ffffff" fill-opacity="0.92" stroke="#ffffff" stroke-width="0.3" stroke-opacity="0.8" font-family="Liberation Sans">PixMarka © My Brand</text>
<text transform="translate(185.3,304.6) rotate(34)" text-anchor="middle" dominant-baseline="middle" font-size="4.5" font-weight="bold" fill="#ffffff" fill-opacity="0.92" stroke="#ffffff" stroke-width="0.3" stroke-opacity="0.8" font-family="Liberation Sans">PixMarka © My Brand</text>
<text transform="translate(-8.3,237.5) rotate(34)" text-anchor="middle" dominant-baseline="middle" font-size="4.5" font-weight="bold" fill="#ffffff" fill-opacity="0.92" stroke="#ffffff" stroke-width="0.3" stroke-opacity="0.8" font-family="Liberation Sans">PixMarka © My Brand</text>
<text transform="translate(32.7,265.1) rotate(34)" text-anchor="middle" dominant-baseline="middle" font-size="4.5" font-weight="bold" fill="#ffffff" fill-opacity="0.92" stroke="#ffffff" stroke-width="0.3" stroke-opacity="0.8" font-family="Liberation Sans">PixMarka © My Brand</text>
<text transform="translate(73.8,292.8) rotate(34)" text-anchor="middle" dominant-baseline="middle" font-size="4.5" font-weight="bold" fill="#ffffff" fill-opacity="0.92" stroke="#ffffff" stroke-width="0.3" stroke-opacity="0.8" font-family="Liberation Sans">PixMarka © My Brand</text>
<text transform="translate(9.8,-10.5) rotate(-17)" text-anchor="middle" dominant-baseline="middle" font-size="4.5" font-weight="bold" fill="#ffffff" fill-opacity="0.92" stroke="#ffffff" stroke-width="0.3" stroke-opacity="0.8" font-family="Liberation Sans">PixMarka © My Brand</text>
<text transform="translate(59.8,-25.8) rotate(-17)" text-anchor="middle" dominant-baseline="middle" font-size="4.5" font-weight="bold" fill="#ffffff" fill-opacity="0.92" stroke="#ffffff" stroke-width="0.3" stroke-opacity="0.8" font-family="Liberation Sans">PixMarka © My Brand</text>
<text transform="translate(-24.7,55.0) rotate(-17)" text-anchor="middle" dominant-baseline="middle" font-size="4.5" font-weight="bold" fill="#ffffff" fill-opacity="0.92" stroke="#ffffff" stroke-width="0.3" stroke-opacity="0.8" font-family="Liberation Sans">PixMarka © My Brand</text>
<text transform="translate(25.2,39.8) rotate(-17)" text-anchor="middle" dominant-baseline="middle" font-size="4.5" font-weight="bold" fill="#ffffff" fill-opacity="0.92" stroke="#ffffff" stroke-width="0.3" stroke-opacity="0.8" font-family="Liberation Sans">PixMarka © My Brand</text>
<text transform="translate(75.1,24.5) rotate(-17)" text-anchor="middle" dominant-baseline="middle" font-size="4.5" font-weight="bold" fill="#ffffff" fill-opacity="0.92" stroke="#ffffff" stroke-width="0.3" stroke-opacity="0.8" font-family="Liberation Sans">PixMarka © My Brand</text>
<text transform="translate(125.1,9.2) rotate(-17)" text-anchor="middle" dominant-baseline="middle" font-size="4.5" font-weight="bold" fill="#ffffff" fill-opacity="0.92" stroke="#ffffff" stroke-width="0.3" stroke-opacity="0.8" font-family="Liberation Sans">PixMarka © My Brand</text>
<text transform="translate(175.0,-6.0) rotate(-17)" text-anchor="middle" dominant-baseline="middle" font-size="4.5" font-weight="bold" fill="#ffffff" fill-opacity="0.92" stroke="#ffffff" stroke-width="0.3" stroke-opacity="0.8" font-family="Liberation Sans">PixMarka © My Brand</text>
<text transform="translate(224.9,-21.3) rotate(-17)" text-anchor="middle" dominant-baseline="middle" font-size="4.5" font-weight="bold" fill="#ffffff" fill-opacity="0.92" stroke="#ffffff" stroke-width="0.3" stroke-opacity="0.8" font-family="Liberation Sans">PixMarka © My Brand</text>
<text transform="translate(-9.3,105.3) rotate(-17)" text-anchor="middle" dominant-baseline="middle" font-size="4.5" font-weight="bold" fill="#ffffff" fill-opacity="0.92" stroke="#ffffff" stroke-width="0.3" stroke-opacity="0.8" font-family="Liberation Sans">PixMarka © My Brand</text>
<text transform="translate(40.6,90.1) rotate(-17)" text-anchor="middle" dominant-baseline="middle" font-size="4.5" font-weight="bold" fill="#ffffff" fill-opacity="0.92" stroke="#ffffff" stroke-width="0.3" stroke-opacity="0.8" font-family="Liberation Sans">PixMarka © My Brand</text>
<text transform="translate(90.5,74.8) rotate(-17)" text-anchor="middle" dominant-baseline="middle" font-size="4.5" font-weight="bold" fill="#ffffff" fill-opacity="0.92" stroke="#ffffff" stroke-width="0.3" stroke-opacity="0.8" font-family="Liberation Sans">PixMarka © My Brand</text>
<text transform="translate(140.4,59.5) rotate(-17)" text-anchor="middle" dominant-baseline="middle" font-size="4.5" font-weight="bold" fill="#ffffff" fill-opacity="0.92" stroke="#ffffff" stroke-width="0.3" stroke-opacity="0.8" font-family="Liberation Sans">PixMarka © My Brand</text>
<text transform="translate(190.4,44.3) rotate(-17)" text-anchor="middle" dominant-baseline="middle" font-size="4.5" font-weight="bold" fill="#ffffff" fill-opacity="0.92" stroke="#ffffff" stroke-width="0.3" stroke-opacity="0.8" font-family="Liberation Sans">PixMarka © My Brand</text>
<text transform="translate(240.3,29.0) rotate(-17)" text-anchor="middle" dominant-baseline="middle" font-size="4.5" font-weight="bold" fill="#ffffff" fill-opacity="0.92" stroke="#ffffff" stroke-width="0.3" stroke-opacity="0.8" font-family="Liberation Sans">PixMarka © My Brand</text>
<text transform="translate(290.2,13.8) rotate(-17)" text-anchor="middle" dominant-baseline="middle" font-size="4.5" font-weight="bold" fill="#ffffff" fill-opacity="0.92" stroke="#ffffff" stroke-width="0.3" stroke-opacity="0.8" font-family="Liberation Sans">PixMarka © My Brand</text>
<text transform="translate(340.1,-1.5) rotate(-17)" text-anchor="middle" dominant-baseline="middle" font-size="4.5" font-weight="bold" fill="#ffffff" fill-opacity="0.92" stroke="#ffffff" stroke-width="0.3" stroke-opacity="0.8" font-family="Liberation Sans">PixMarka © My Brand</text>
<text transform="translate(390.0,-16.8) rotate(-17)" text-anchor="middle" dominant-baseline="middle" font-size="4.5" font-weight="bold" fill="#ffffff" fill-opacity="0.92" stroke="#ffffff" stroke-width="0.3" stroke-opacity="0.8" font-family="Liberation Sans">PixMarka © My Brand</text>
<text transform="translate(6.1,155.6) rotate(-17)" text-anchor="middle" dominant-baseline="middle" font-size="4.5" font-weight="bold" fill="#ffffff" fill-opacity="0.92" stroke="#ffffff" stroke-width="0.3" stroke-opacity="0.8" font-family="Liberation Sans">PixMarka © My Brand</text>
<text transform="translate(56.0,140.4) rotate(-17)" text-anchor="middle" dominant-baseline="middle" font-size="4.5" font-weight="bold" fill="#ffffff" fill-opacity="0.92" stroke="#ffffff" stroke-width="0.3" stroke-opacity="0.8" font-family="Liberation Sans">PixMarka © My Brand</text>
<text transform="translate(105.9,125.1) rotate(-17)" text-anchor="middle" dominant-baseline="middle" font-size="4.5" font-weight="bold" fill="#ffffff" fill-opacity="0.92" stroke="#ffffff" stroke-width="0.3" stroke-opacity="0.8" font-family="Liberation Sans">PixMarka © My Brand</text>
<text transform="translate(155.8,109.8) rotate(-17)" text-anchor="middle" dominant-baseline="middle" font-size="4.5" font-weight="bold" fill="#ffffff" fill-opacity="0.92" stroke="#ffffff" stroke-width="0.3" stroke-opacity="0.8" font-family="Liberation Sans">PixMarka © My Brand</text>
<text transform="translate(205.7,94.6) rotate(-17)" text-anchor="middle" dominant-baseline="middle" font-size="4.5" font-weight="bold" fill="#ffffff" fill-opacity="0.92" stroke="#ffffff" stroke-width="0.3" stroke-opacity="0.8" font-family="Liberation Sans">PixMarka © My Brand</text>
<text transform="translate(255.7,79.3) rotate(-17)" text-anchor="middle" dominant-baseline="middle" font-size="4.5" font-weight="bold" fill="#ffffff" fill-opacity="0.92" stroke="#ffffff" stroke-width="0.3" stroke-opacity="0.8" font-family="Liberation Sans">PixMarka © My Brand</text>
<text transform="translate(305.6,64.1) rotate(-17)" text-anchor="middle" dominant-baseline="middle" font-size="4.5" font-weight="bold" fill="#ffffff" fill-opacity="0.92" stroke="#ffffff" stroke-width="0.3" stroke-opacity="0.8" font-family="Liberation Sans">PixMarka © My Brand</text>
<text transform="translate(355.5,48.8) rotate(-17)" text-anchor="middle" dominant-baseline="middle" font-size="4.5" font-weight="bold" fill="#ffffff" fill-opacity="0.92" stroke="#ffffff" stroke-width="0.3" stroke-opacity="0.8" font-family="Liberation Sans">PixMarka © My Brand</text>
<text transform="translate(405.4,33.5) rotate(-17)" text-anchor="middle" dominant-baseline="middle" font-size="4.5" font-weight="bold" fill="#ffffff" fill-opacity="0.92" stroke="#ffffff" stroke-width="0.3" stroke-opacity="0.8" font-family="Liberation Sans">PixMarka © My Brand</text>
<text transform="translate(455.3,18.3) rotate(-17)" text-anchor="middle" dominant-baseline="middle" font-size="4.5" font-weight="bold" fill="#ffffff" fill-opacity="0.92" stroke="#ffffff" stroke-width="0.3" stroke-opacity="0.8" font-family="Liberation Sans">PixMarka © My Brand</text>
<text transform="translate(-28.5,221.2) rotate(-17)" text-anchor="middle" dominant-baseline="middle" font-size="4.5" font-weight="bold" fill="#ffffff" fill-opacity="0.92" stroke="#ffffff" stroke-width="0.3" stroke-opacity="0.8" font-family="Liberation Sans">PixMarka © My Brand</text>
<text transform="translate(21.4,205.9) rotate(-17)" text-anchor="middle" dominant-baseline="middle" font-size="4.5" font-weight="bold" fill="#ffffff" fill-opacity="0.92" stroke="#ffffff" stroke-width="0.3" stroke-opacity="0.8" font-family="Liberation Sans">PixMarka © My Brand</text>
<text transform="translate(71.4,190.7) rotate(-17)" text-anchor="middle" dominant-baseline="middle" font-size="4.5" font-weight="bold" fill="#ffffff" fill-opacity="0.92" stroke="#ffffff" stroke-width="0.3" stroke-opacity="0.8" font-family="Liberation Sans">PixMarka © My Brand</text>
<text transform="translate(121.3,175.4) rotate(-17)" text-anchor="middle" dominant-baseline="middle" font-size="4.5" font-weight="bold" fill="#ffffff" fill-opacity="0.92" stroke="#ffffff" stroke-width="0.3" stroke-opacity="0.8" font-family="Liberation Sans">PixMarka © My Brand</text>
<text transform="translate(171.2,160.1) rotate(-17)" text-anchor="middle" dominant-baseline="middle" font-size="4.5" font-weight="bold" fill="#ffffff" fill-opacity="0.92" stroke="#ffffff" stroke-width="0.3" stroke-opacity="0.8" font-family="Liberation Sans">PixMarka © My Brand</text>
<text transform="translate(221.1,144.9) rotate(-17)" text-anchor="middle" dominant-baseline="middle" font-size="4.5" font-weight="bold" fill="#ffffff" fill-opacity="0.92" stroke="#ffffff" stroke-width="0.3" stroke-opacity="0.8" font-family="Liberation Sans">PixMarka © My Brand</text>
<text transform="translate(271.0,129.6) rotate(-17)" text-anchor="middle" dominant-baseline="middle" font-size="4.5" font-weight="bold" fill="#ffffff" fill-opacity="0.92" stroke="#ffffff" stroke-width="0.3" stroke-opacity="0.8" font-family="Liberation Sans">PixMarka © My Brand</text>
<text transform="translate(321.0,114.4) rotate(-17)" text-anchor="middle" dominant-baseline="middle" font-size="4.5" font-weight="bold" fill="#ffffff" fill-opacity="0.92" stroke="#ffffff" stroke-width="0.3" stroke-opacity="0.8" font-family="Liberation Sans">PixMarka © My Brand</text>
<text transform="translate(370.9,99.1) rotate(-17)" text-anchor="middle" dominant-baseline="middle" font-size="4.5" font-weight="bold" fill="#ffffff" fill-opacity="0.92" stroke="#ffffff" stroke-width="0.3" stroke-opacity="0.8" font-family="Liberation Sans">PixMarka © My Brand</text>
<text transform="translate(420.8,83.8) rotate(-17)" text-anchor="middle" dominant-baseline="middle" font-size="4.5" font-weight="bold" fill="#ffffff" fill-opacity="0.92" stroke="#ffffff" stroke-width="0.3" stroke-opacity="0.8" font-family="Liberation Sans">PixMarka © My Brand</text>
<text transform="translate(470.7,68.6) rotate(-17)" text-anchor="middle" dominant-baseline="middle" font-size="4.5" font-weight="bold" fill="#ffffff" fill-opacity="0.92" stroke="#ffffff" stroke-width="0.3" stroke-opacity="0.8" font-family="Liberation Sans">PixMarka © My Brand</text>
<text transform="translate(-13.1,271.5) rotate(-17)" text-anchor="middle" dominant-baseline="middle" font-size="4.5" font-weight="bold" fill="#ffffff" fill-opacity="0.92" stroke="#ffffff" stroke-width="0.3" stroke-opacity="0.8" font-family="Liberation Sans">PixMarka © My Brand</text>
<text transform="translate(36.8,256.2) rotate(-17)" text-anchor="middle" dominant-baseline="middle" font-size="4.5" font-weight="bold" fill="#ffffff" fill-opacity="0.92" stroke="#ffffff" stroke-width="0.3" stroke-opacity="0.8" font-family="Liberation Sans">PixMarka © My Brand</text>
<text transform="translate(86.7,241.0) rotate(-17)" text-anchor="middle" dominant-baseline="middle" font-size="4.5" font-weight="bold" fill="#ffffff" fill-opacity="0.92" stroke="#ffffff" stroke-width="0.3" stroke-opacity="0.8" font-family="Liberation Sans">PixMarka © My Brand</text>
<text transform="translate(136.7,225.7) rotate(-17)" text-anchor="middle" dominant-baseline="middle" font-size="4.5" font-weight="bold" fill="#ffffff" fill-opacity="0.92" stroke="#ffffff" stroke-width="0.3" stroke-opacity="0.8" font-family="Liberation Sans">PixMarka © My Brand</text>
<text transform="translate(186.6,210.4) rotate(-17)" text-anchor="middle" dominant-baseline="middle" font-size="4.5" font-weight="bold" fill="#ffffff" fill-opacity="0.92" stroke="#ffffff" stroke-width="0.3" stroke-opacity="0.8" font-family="Liberation Sans">PixMarka © My Brand</text>
<text transform="translate(236.5,195.2) rotate(-17)" text-anchor="middle" dominant-baseline="middle" font-size="4.5" font-weight="bold" fill="#ffffff" fill-opacity="0.92" stroke="#ffffff" stroke-width="0.3" stroke-opacity="0.8" font-family="Liberation Sans">PixMarka © My Brand</text>
<text transform="translate(286.4,179.9) rotate(-17)" text-anchor="middle" dominant-baseline="middle" font-size="4.5" font-weight="bold" fill="#ffffff" fill-opacity="0.92" stroke="#ffffff" stroke-width="0.3" stroke-opacity="0.8" font-family="Liberation Sans">PixMarka © My Brand</text>
<text transform="translate(336.3,164.7) rotate(-17)" text-anchor="middle" dominant-baseline="middle" font-size="4.5" font-weight="bold" fill="#ffffff" fill-opacity="0.92" stroke="#ffffff" stroke-width="0.3" stroke-opacity="0.8" font-family="Liberation Sans">PixMarka © My Brand</text>
<text transform="translate(386.3,149.4) rotate(-17)" text-anchor="middle" dominant-baseline="middle" font-size="4.5" font-weight="bold" fill="#ffffff" fill-opacity="0.92" stroke="#ffffff" stroke-width="0.3" stroke-opacity="0.8" font-family="Liberation Sans">PixMarka © My Brand</text>
<text transform="translate(436.2,134.1) rotate(-17)" text-anchor="middle" dominant-baseline="middle" font-size="4.5" font-weight="bold" fill="#ffffff" fill-opacity="0.92" stroke="#ffffff" stroke-width="0.3" stroke-opacity="0.8" font-family="Liberation Sans">PixMarka © My Brand</text>
<text transform="translate(52.2,306.5) rotate(-17)" text-anchor="middle" dominant-baseline="middle" font-size="4.5" font-weight="bold" fill="#ffffff" fill-opacity="0.92" stroke="#ffffff" stroke-width="0.3" stroke-opacity="0.8" font-family="Liberation Sans">PixMarka © My Brand</text>
<text transform="translate(102.1,291.3) rotate(-17)" text-anchor="middle" dominant-baseline="middle" font-size="4.5" font-weight="bold" fill="#ffffff" fill-opacity="0.92" stroke="#ffffff" stroke-width="0.3" stroke-opacity="0.8" font-family="Liberation Sans">PixMarka © My Brand</text>
<text transform="translate(152.0,276.0) rotate(-17)" text-anchor="middle" dominant-baseline="middle" font-size="4.5" font-weight="bold" fill="#ffffff" fill-opacity="0.92" stroke="#ffffff" stroke-width="0.3" stroke-opacity="0.8" font-family="Liberation Sans">PixMarka © My Brand</text>
<text transform="translate(202.0,260.7) rotate(-17)" text-anchor="middle" dominant-baseline="middle" font-size="4.5" font-weight="bold" fill="#ffffff" fill-opacity="0.92" stroke="#ffffff" stroke-width="0.3" stroke-opacity="0.8" font-family="Liberation Sans">PixMarka © My Brand</text>
<text transform="translate(251.9,245.5) rotate(-17)" text-anchor="middle" dominant-baseline="middle" font-size="4.5" font-weight="bold" fill="#ffffff" fill-opacity="0.92" stroke="#ffffff" stroke-width="0.3" stroke-opacity="0.8" font-family="Liberation Sans">PixMarka © My Brand</text>
<text transform="translate(301.8,230.2) rotate(-17)" text-anchor="middle" dominant-baseline="middle" font-size="4.5" font-weight="bold" fill="#ffffff" fill-opacity="0.92" stroke="#ffffff" stroke-width="0.3" stroke-opacity="0.8" font-family="Liberation Sans">PixMarka © My Brand</text>
<text transform="translate(351.7,215.0) rotate(-17)" text-anchor="middle" dominant-baseline="middle" font-size="4.5" font-weight="bold" fill="#ffffff" fill-opacity="0.92" stroke="#ffffff" stroke-width="0.3" stroke-opacity="0.8" font-family="Liberation Sans">PixMarka © My Brand</text>
<text transform="translate(401.6,199.7) rotate(-17)" text-anchor="middle" dominant-baseline="middle" font-size="4.5" font-weight="bold" fill="#ffffff" fill-opacity="0.92" stroke="#ffffff" stroke-width="0.3" stroke-opacity="0.8" font-family="Liberation Sans">PixMarka © My Brand</text>
<text transform="translate(451.6,184.4) rotate(-17)" text-anchor="middle" dominant-baseline="middle" font-size="4.5" font-weight="bold" fill="#ffffff" fill-opacity="0.92" stroke="#ffffff" stroke-width="0.3" stroke-opacity="0.8" font-family="Liberation Sans">PixMarka © My Brand</text>
<text transform="translate(267.3,295.8) rotate(-17)" text-anchor="middle" dominant-baseline="middle" font-size="4.5" font-weight="bold" fill="#ffffff" fill-opacity="0.92" stroke="#ffffff" stroke-width="0.3" stroke-opacity="0.8" font-family="Liberation Sans">PixMarka © My Brand</text>
<text transform="translate(317.2,280.5) rotate(-17)" text-anchor="middle" dominant-baseline="middle" font-size="4.5" font-weight="bold" fill="#ffffff" fill-opacity="0.92" stroke="#ffffff" stroke-width="0.3" stroke-opacity="0.8" font-family="Liberation Sans">PixMarka © My Brand</text>
<text transform="translate(367.1,265.3) rotate(-17)" text-anchor="middle" dominant-baseline="middle" font-size="4.5" font-weight="bold" fill="#ffffff" fill-opacity="0.92" stroke="#ffffff" stroke-width="0.3" stroke-opacity="0.8" font-family="Liberation Sans">PixMarka © My Brand</text>
<text transform="translate(417.0,250.0) rotate(-17)" text-anchor="middle" dominant-baseline="middle" font-size="4.5" font-weight="bold" fill="#ffffff" fill-opacity="0.92" stroke="#ffffff" stroke-width="0.3" stroke-opacity="0.8" font-family="Liberation Sans">PixMarka © My Brand</text>
<text transform="translate(466.9,234.7) rotate(-17)" text-anchor="middle" dominant-baseline="middle" font-size="4.5" font-weight="bold" fill="#ffffff" fill-opacity="0.92" stroke="#ffffff" stroke-width="0.3" stroke-opacity="0.8" font-family="Liberation Sans">PixMarka © My Brand</text>
<text transform="translate(432.4,300.3) rotate(-17)" text-anchor="middle" dominant-baseline="middle" font-size="4.5" font-weight="bold" fill="#ffffff" fill-opacity="0.92" stroke="#ffffff" stroke-width="0.3" stroke-opacity="0.8" font-family="Liberation Sans">PixMarka © My Brand</text>
<use href="#pa" x="16.8" y="17.2" opacity="0.93"/>
<use href="#pa" x="61.8" y="17.2" opacity="0.93"/>
<use href="#pa" x="106.8" y="17.2" opacity="0.93"/>
<use href="#pa" x="151.8" y="17.2" opacity="0.93"/>
<use href="#pa" x="196.8" y="17.2" opacity="0.93"/>
<use href="#pa" x="241.8" y="17.2" opacity="0.93"/>
<use href="#pa" x="286.8" y="17.2" opacity="0.93"/>
<use href="#pa" x="331.8" y="17.2" opacity="0.93"/>
<use href="#pa" x="376.8" y="17.2" opacity="0.93"/>
<use href="#pa" x="421.8" y="17.2" opacity="0.93"/>
<use href="#pa" x="16.8" y="66.9" opacity="0.93"/>
<use href="#pa" x="61.8" y="66.9" opacity="0.93"/>
<use href="#pa" x="106.8" y="66.9" opacity="0.93"/>
<use href="#pa" x="151.8" y="66.9" opacity="0.93"/>
<use href="#pa" x="196.8" y="66.9" opacity="0.93"/>
<use href="#pa" x="241.8" y="66.9" opacity="0.93"/>
<use href="#pa" x="286.8" y="66.9" opacity="0.93"/>
<use href="#pa" x="331.8" y="66.9" opacity="0.93"/>
<use href="#pa" x="376.8" y="66.9" opacity="0.93"/>
<use href="#pa" x="421.8" y="66.9" opacity="0.93"/>
<use href="#pa" x="16.8" y="116.6" opacity="0.93"/>
<use href="#pa" x="61.8" y="116.6" opacity="0.93"/>
<use href="#pa" x="106.8" y="116.6" opacity="0.93"/>
<use href="#pa" x="151.8" y="116.6" opacity="0.93"/>
<use href="#pa" x="196.8" y="116.6" opacity="0.93"/>
<use href="#pa" x="241.8" y="116.6" opacity="0.93"/>
<use href="#pa" x="286.8" y="116.6" opacity="0.93"/>
<use href="#pa" x="331.8" y="116.6" opacity="0.93"/>
<use href="#pa" x="376.8" y="116.6" opacity="0.93"/>
<use href="#pa" x="421.8" y="116.6" opacity="0.93"/>
<use href="#pa" x="16.8" y="166.3" opacity="0.93"/>
<use href="#pa" x="61.8" y="166.3" opacity="0.93"/>
<use href="#pa" x="106.8" y="166.3" opacity="0.93"/>
<use href="#pa" x="151.8" y="166.3" opacity="0.93"/>
<use href="#pa" x="196.8" y="166.3" opacity="0.93"/>
<use href="#pa" x="241.8" y="166.3" opacity="0.93"/>
<use href="#pa" x="286.8" y="166.3" opacity="0.93"/>
<use href="#pa" x="331.8" y="166.3" opacity="0.93"/>
<use href="#pa" x="376.8" y="166.3" opacity="0.93"/>
<use href="#pa" x="421.8" y="166.3" opacity="0.93"/>
<use href="#pa" x="16.8" y="216.0" opacity="0.93"/>
<use href="#pa" x="61.8" y="216.0" opacity="0.93"/>
<use href="#pa" x="106.8" y="216.0" opacity="0.93"/>
<use href="#pa" x="151.8" y="216.0" opacity="0.93"/>
<use href="#pa" x="196.8" y="216.0" opacity="0.93"/>
<use href="#pa" x="241.8" y="216.0" opacity="0.93"/>
<use href="#pa" x="286.8" y="216.0" opacity="0.93"/>
<use href="#pa" x="331.8" y="216.0" opacity="0.93"/>
<use href="#pa" x="376.8" y="216.0" opacity="0.93"/>
<use href="#pa" x="421.8" y="216.0" opacity="0.93"/>
<use href="#pa" x="16.8" y="265.7" opacity="0.93"/>
<use href="#pa" x="61.8" y="265.7" opacity="0.93"/>
<use href="#pa" x="106.8" y="265.7" opacity="0.93"/>
<use href="#pa" x="151.8" y="265.7" opacity="0.93"/>
<use href="#pa" x="196.8" y="265.7" opacity="0.93"/>
<use href="#pa" x="241.8" y="265.7" opacity="0.93"/>
<use href="#pa" x="286.8" y="265.7" opacity="0.93"/>
<use href="#pa" x="331.8" y="265.7" opacity="0.93"/>
<use href="#pa" x="376.8" y="265.7" opacity="0.93"/>
<use href="#pa" x="421.8" y="265.7" opacity="0.93"/>
</g></svg><div class="b" style="left:1051.00px;top:509.00px;width:96.80px;height:25.60px;background:#2c2d2f;border-radius:6px;"></div>
<div class="b" style="left:1163.90px;top:509.00px;width:181.70px;height:25.60px;background:#2c2d2f;border-radius:6px;"></div>
<div class="t" style="left:1063.90px;top:515.03px;font-size:14.5px;line-height:14.5px;color:#e4e4e4;">Abbrechen</div>
<div class="t" style="left:1177.00px;top:515.20px;font-size:14.3px;line-height:14.3px;color:#e4e4e4;">Einstellungen anwenden</div>
<div class="b" style="left:753.5px;top:563.5px;width:890px;height:292.5px;background:#2a2e31;border-radius:0 0 10px 10px"></div>
<div class="b" style="left:759.00px;top:566.00px;width:17px;height:17px;border-radius:5px;background:#45494d"></div>
<svg class="b" style="left:759.00px;top:566.00px" width="17" height="17" viewBox="0 0 17 17"><path d="M3.6 9.4 L7.2 13.2 L13.2 4.6" fill="none" stroke="#ffffff" stroke-width="2" stroke-linecap="round" stroke-linejoin="round"/></svg>
<div class="t" style="left:781.70px;top:567.03px;font-size:14.5px;line-height:14.5px;color:#e4e4e4;">Zielgröße aktivieren</div>
<div class="t" style="left:759.00px;top:600.11px;font-size:14.05px;line-height:14.05px;color:#e4e4e4;">Preset:</div>
<div class="b" style="left:1094.00px;top:594.20px;width:193.00px;height:25.50px;background:#3a3d41;border-radius:6px;"></div>
<div class="t" style="left:1107.00px;top:599.86px;font-size:14.7px;line-height:14.7px;color:#e4e4e4;">2880 × 1800</div>
<svg class="b" style="left:1265px;top:599px" width="14" height="16" viewBox="0 0 14 16"><path d="M3.2 6.2 L7 2.6 L10.8 6.2 M3.2 9.8 L7 13.4 L10.8 9.8" fill="none" stroke="#e0e0e0" stroke-width="1.5" stroke-linecap="round" stroke-linejoin="round"/></svg>
<div class="b" style="left:1549.00px;top:593.50px;width:41.00px;height:26.10px;background:#3a3d41;border-radius:7px;"></div>
<div class="b" style="left:1598.40px;top:596.00px;width:39.60px;height:21.00px;background:#3a3d41;border-radius:7px;"></div>
<svg class="b" style="left:1559px;top:597px" width="20" height="20" viewBox="0 0 20 20"><path d="M3.2 5.1 H16.8 M7.7 5 V3.2 Q7.7 2.1 8.8 2.1 H11.9 Q13 2.1 13 3.2 V5 M5.2 5.3 V15.9 Q5.2 17.1 6.4 17.1 H14 Q15.2 17.1 15.2 15.9 V5.3" fill="none" stroke="#f23f3b" stroke-width="1.25"/><path d="M7.8 7 V15.4 M9.5 7 V15.4 M11.2 7 V15.4 M12.9 7 V15.4" stroke="#a83634" stroke-width="0.9"/></svg>
<svg class="b" style="left:1610px;top:599px" width="17" height="15" viewBox="0 0 17 15"><path d="M2.8 7.5 H14.2 M8.5 1.8 V13.2" stroke="#e8e8e8" stroke-width="1.3"/></svg>
<div class="b" style="left:759.00px;top:631.00px;width:17px;height:17px;border-radius:5px;background:#3e4246"></div>
<div class="t" style="left:781.70px;top:631.53px;font-size:14.5px;line-height:14.5px;color:#e4e4e4;">Seitenverhältnis beibehalten</div>
<div class="t" style="left:759.00px;top:664.90px;font-size:14.3px;line-height:14.3px;color:#e4e4e4;">Breite:</div>
<svg class="b" style="left:817.5px;top:667px" width="12" height="11" viewBox="0 0 12 11"><path d="M0.6 0.6 H11.4 L6 10.4Z" fill="#e6e6e6"/></svg>
<div class="b" style="left:834px;top:658px;width:86px;height:26px;border-radius:7px;background:#1f2225;box-shadow:inset 0 0 0 1px #2c3033"></div>
<div class="t" style="left:860.00px;top:664.90px;font-size:14.3px;line-height:14.3px;color:#e4e4e4;letter-spacing:0.7px">2880</div>
<svg class="b" style="left:924.9px;top:667px" width="12" height="11" viewBox="0 0 12 11"><path d="M0.6 10.4 H11.4 L6 0.6Z" fill="#e6e6e6"/></svg>
<div class="t" style="left:942.00px;top:664.90px;font-size:14.3px;line-height:14.3px;color:#8d8f92;">px</div>
<div class="b" style="left:968.10px;top:667.00px;width:41.90px;height:27.00px;background:#393c40;border-radius:6px;"></div>
<svg class="b" style="left:978px;top:671px" width="22" height="20" viewBox="0 0 22 20"><path d="M17 6.2 H4.2 M7.4 3 L4.2 6.2 L7.4 9.4 M5 13.6 H17.8 M14.6 10.4 L17.8 13.6 L14.6 16.8" fill="none" stroke="#e6e6e6" stroke-width="1.3" stroke-linecap="round" stroke-linejoin="round"/></svg>
<div class="t" style="left:1021.60px;top:664.98px;font-size:14.2px;line-height:14.2px;color:#e4e4e4;">Höhe:</div>
<svg class="b" style="left:1079.8px;top:667px" width="12" height="11" viewBox="0 0 12 11"><path d="M0.6 0.6 H11.4 L6 10.4Z" fill="#e6e6e6"/></svg>
<div class="b" style="left:1096px;top:658px;width:86.5px;height:26.4px;border-radius:7px;background:#1f2225;box-shadow:inset 0 0 0 1px #2c3033"></div>
<div class="t" style="left:1123.40px;top:664.90px;font-size:14.3px;line-height:14.3px;color:#e4e4e4;letter-spacing:0.7px">1800</div>
<svg class="b" style="left:1187px;top:667px" width="12" height="11" viewBox="0 0 12 11"><path d="M0.6 10.4 H11.4 L6 0.6Z" fill="#e6e6e6"/></svg>
<div class="t" style="left:1204.60px;top:664.90px;font-size:14.3px;line-height:14.3px;color:#8d8f92;">px</div>
<div class="t" style="left:816.70px;top:689.85px;font-size:11.4px;line-height:11.4px;color:#a3a3a3;">Original: 1600 px</div>
<div class="t" style="left:1078.90px;top:689.85px;font-size:11.4px;line-height:11.4px;color:#a3a3a3;">Original: 899 px</div>
<svg class="b" style="left:907px;top:689px" width="12" height="12" viewBox="0 0 12 12"><path d="M6 11 V1.6 M2.4 5 L6 1.4 L9.6 5" fill="none" stroke="#cfcfcf" stroke-width="1.3" stroke-linecap="round" stroke-linejoin="round"/></svg>
<svg class="b" style="left:1165px;top:689px" width="12" height="12" viewBox="0 0 12 12"><path d="M6 11 V1.6 M2.4 5 L6 1.4 L9.6 5" fill="none" stroke="#cfcfcf" stroke-width="1.3" stroke-linecap="round" stroke-linejoin="round"/></svg>
<div class="t" style="left:759.00px;top:720.27px;font-size:11.5px;line-height:11.5px;color:#a6a6a6;">Seitenverhältnis:</div>
<div class="t" style="left:759.00px;top:740.67px;font-size:10.9px;line-height:10.9px;font-weight:700;color:#b0b0b0;">Original</div>
<div class="t" style="left:831.90px;top:738.37px;font-size:10.9px;line-height:10.9px;font-weight:700;color:#b0b0b0;">Ziel</div>
<div class="b" style="left:759px;top:755px;width:64px;height:36px;box-sizing:border-box;border:1.6px solid #0a8aff;background:#2a4e73"></div>
<div class="b" style="left:831.4px;top:753.2px;width:64.7px;height:39.8px;box-sizing:border-box;border:1.6px solid #31d35a;background:#31603f"></div>
<div class="b" style="left:759.00px;top:804.00px;width:879.00px;height:42.30px;background:#33373a;border-radius:8px;"></div>
<div class="t" style="left:1152.70px;top:817.84px;font-size:14.36px;line-height:14.36px;color:#8a8d90;">Neuskalierung</div>
<div class="b" style="left:753.50px;top:879.00px;width:96.30px;height:25.00px;background:#33373a;border-radius:7px;"></div>
<div class="b" style="left:859.10px;top:879.00px;width:140.20px;height:25.00px;background:#33373a;border-radius:7px;"></div>
<div class="t" style="left:766.50px;top:884.73px;font-size:14.5px;line-height:14.5px;color:#e4e4e4;">Abbrechen</div>
<div class="t" style="left:872.00px;top:884.73px;font-size:14.5px;line-height:14.5px;color:#e4e4e4;">Speichern unter...</div>
<div class="b" style="left:877.7px;top:920.3px;width:642px;height:47.7px;background:#1f2022;border-radius:7px 7px 0 0"></div>
<div class="t" style="left:886.40px;top:930.94px;font-size:13.3px;line-height:13.3px;font-weight:700;color:#b8b8b8;">Input:</div>
<div class="t" style="left:933.20px;top:930.71px;font-size:13.57px;line-height:13.57px;color:#c8c8c8;">/Users/maximilianbenchieb/Desktop/Input_Pics/P1060546.JPG</div>
<div class="t" style="left:886.40px;top:950.74px;font-size:13.3px;line-height:13.3px;font-weight:700;color:#b8b8b8;">Output:</div>
<div class="t" style="left:944.40px;top:950.49px;font-size:13.6px;line-height:13.6px;color:#c8c8c8;">/Users/maximilianbenchieb/Desktop/Output_Pics/PixMarka © New Brand 2026_P1060546.jpg</div>
</body></html>
